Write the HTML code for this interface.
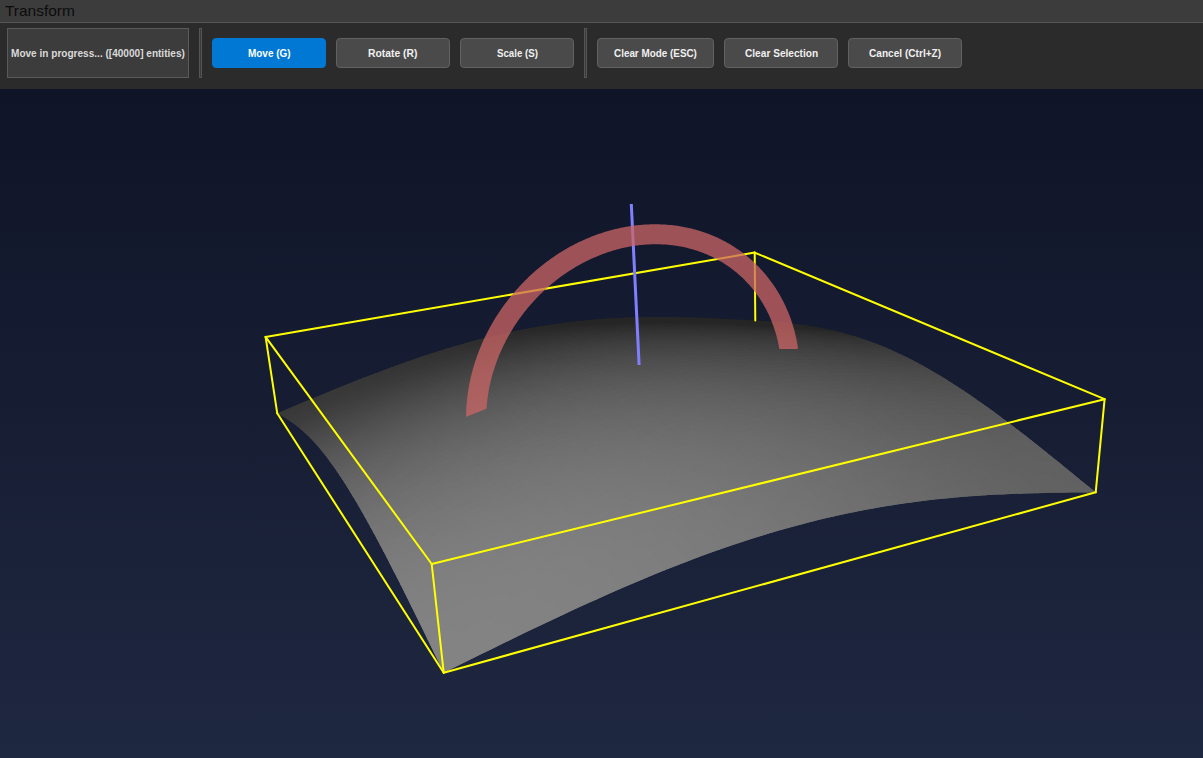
<!DOCTYPE html>
<html><head><meta charset="utf-8">
<style>
html,body{margin:0;padding:0;width:1203px;height:758px;overflow:hidden;background:#2b2b2b;font-family:"Liberation Sans",sans-serif;}
.a{position:absolute;}
#title{left:0;top:0;width:1203px;height:22px;background:#3c3c3c;}
#tline{left:0;top:22px;width:1203px;height:1px;background:#565656;}
#tb{left:0;top:23px;width:1203px;height:66px;background:#2b2b2b;}
.t{position:absolute;white-space:nowrap;transform-origin:0 0;}
.status{left:7px;top:28px;width:180px;height:48px;border:1px solid #5a5a5a;background:#3c3c3c;}
.sep{top:28px;width:1px;height:48px;border:1px solid #555;background:#3a3a3a;}
.btn{top:38px;height:28px;border:1px solid #626262;border-radius:4px;background:#4a4a4a;}
.on{background:#0078d4;border-color:#0078d4;}
.bt{font-weight:bold;font-size:11px;line-height:13px;color:#f0f0f0;}
svg{position:absolute;left:0;top:89px;}
</style></head><body>
<div id="title" class="a"></div><div id="tline" class="a"></div>
<span class="t" style="left:5px;top:2px;font-size:15px;line-height:17px;color:#0c0c0c;transform:scaleX(1.03)">Transform</span>
<div id="tb" class="a"></div>
<div class="a status"></div>
<div class="a sep" style="left:199px"></div>
<div class="a btn on" style="left:212px;width:112px"></div>
<div class="a btn" style="left:336px;width:112px"></div>
<div class="a btn" style="left:460px;width:112px"></div>
<div class="a sep" style="left:584px"></div>
<div class="a btn" style="left:597px;width:115px"></div>
<div class="a btn" style="left:724px;width:112px"></div>
<div class="a btn" style="left:848px;width:112px"></div>
<span class="t" style="left:10.7px;top:47.91px;font-weight:bold;font-size:10.5px;line-height:10.5px;color:#dadada;transform:scaleX(0.958)">Move in progress... ([40000] entities)</span>
<span class="t" style="left:247.9px;top:47.91px;font-weight:bold;font-size:10.5px;line-height:10.5px;color:#ffffff;transform:scaleX(0.948)">Move (G)</span>
<span class="t" style="left:368.1px;top:47.91px;font-weight:bold;font-size:10.5px;line-height:10.5px;color:#f0f0f0;transform:scaleX(0.985)">Rotate (R)</span>
<span class="t" style="left:496.5px;top:47.91px;font-weight:bold;font-size:10.5px;line-height:10.5px;color:#f0f0f0;transform:scaleX(0.924)">Scale (S)</span>
<span class="t" style="left:614.1px;top:47.91px;font-weight:bold;font-size:10.5px;line-height:10.5px;color:#f0f0f0;transform:scaleX(0.941)">Clear Mode (ESC)</span>
<span class="t" style="left:744.5px;top:47.91px;font-weight:bold;font-size:10.5px;line-height:10.5px;color:#f0f0f0;transform:scaleX(0.964)">Clear Selection</span>
<span class="t" style="left:868.9px;top:47.91px;font-weight:bold;font-size:10.5px;line-height:10.5px;color:#f0f0f0;transform:scaleX(0.962)">Cancel (Ctrl+Z)</span>
<svg width="1203" height="669" viewBox="0 89 1203 669">
<defs><linearGradient id="bg" x1="0" y1="0" x2="0" y2="1"><stop offset="0" stop-color="#0f1427"/><stop offset="1" stop-color="#1f2841"/></linearGradient>
<clipPath id="sc"><path d="M277.19 413.22 278.63 414.05 280.08 414.90 281.55 415.76 283.04 416.65 284.56 417.57 286.09 418.52 287.65 419.52 289.23 420.55 290.84 421.63 292.47 422.77 294.13 423.97 295.82 425.23 297.54 426.57 299.28 427.97 301.06 429.46 302.87 431.04 304.72 432.70 306.60 434.46 308.51 436.32 310.47 438.28 312.46 440.36 314.48 442.55 316.55 444.85 318.66 447.29 320.80 449.85 322.99 452.54 325.23 455.37 327.50 458.34 329.83 461.45 332.19 464.71 334.61 468.12 337.07 471.68 339.57 475.40 342.13 479.28 344.73 483.32 347.39 487.52 350.09 491.89 352.84 496.42 355.65 501.12 358.51 506.00 361.42 511.04 364.38 516.25 367.40 521.64 370.47 527.20 373.59 532.93 376.77 538.83 380.00 544.90 383.29 551.14 386.63 557.56 390.03 564.14 393.49 570.88 397.00 577.79 400.57 584.87 404.19 592.10 407.88 599.50 411.62 607.05 415.42 614.75 419.28 622.61 423.20 630.61 427.18 638.76 431.22 647.05 435.32 655.48 439.48 664.05 443.71 672.75 443.71 672.75 455.90 666.73 468.02 660.75 480.08 654.81 492.08 648.92 504.01 643.09 515.88 637.32 527.69 631.62 539.44 626.00 551.14 620.45 562.77 614.98 574.34 609.61 585.85 604.33 597.30 599.14 608.70 594.06 620.03 589.09 631.31 584.23 642.52 579.48 653.68 574.85 664.77 570.35 675.81 565.97 686.78 561.71 697.69 557.59 708.54 553.60 719.33 549.75 730.06 546.03 740.72 542.46 751.32 539.02 761.85 535.71 772.32 532.55 782.73 529.53 793.06 526.65 803.33 523.91 813.54 521.31 823.67 518.84 833.74 516.51 843.74 514.31 853.67 512.25 863.53 510.31 873.32 508.50 883.04 506.81 892.69 505.25 902.28 503.80 911.79 502.46 921.23 501.24 930.60 500.12 939.90 499.10 949.12 498.18 958.28 497.35 967.37 496.60 976.39 495.94 985.34 495.36 994.23 494.85 1003.04 494.40 1011.79 494.02 1020.46 493.69 1029.08 493.41 1037.62 493.18 1046.11 492.99 1054.53 492.83 1062.88 492.70 1071.17 492.59 1079.41 492.50 1087.58 492.41 1095.69 492.34 1095.69 492.34 1088.35 486.32 1081.10 480.38 1073.93 474.52 1066.84 468.75 1059.84 463.06 1052.92 457.46 1046.07 451.97 1039.30 446.56 1032.60 441.27 1025.98 436.07 1019.43 430.99 1012.95 426.02 1006.54 421.16 1000.20 416.41 993.92 411.79 987.71 407.28 981.57 402.90 975.49 398.64 969.48 394.51 963.53 390.51 957.64 386.63 951.81 382.88 946.04 379.26 940.33 375.77 934.69 372.40 929.10 369.17 923.57 366.07 918.09 363.09 912.68 360.24 907.32 357.52 902.01 354.92 896.77 352.45 891.57 350.10 886.43 347.86 881.35 345.75 876.32 343.75 871.34 341.86 866.42 340.08 861.54 338.41 856.72 336.85 851.95 335.38 847.24 334.02 842.57 332.74 837.95 331.56 833.38 330.47 828.86 329.45 824.39 328.52 819.97 327.66 815.59 326.87 811.26 326.15 806.98 325.49 802.74 324.89 798.55 324.34 794.41 323.84 790.30 323.39 786.25 322.98 782.23 322.60 778.26 322.26 774.33 321.94 770.44 321.65 766.59 321.37 762.78 321.11 759.01 320.87 755.28 320.62 755.28 320.62 748.75 320.24 742.19 319.87 735.60 319.50 728.97 319.13 722.30 318.79 715.61 318.46 708.88 318.15 702.12 317.87 695.32 317.62 688.49 317.40 681.63 317.22 674.73 317.09 667.80 317.00 660.84 316.95 653.85 316.96 646.82 317.03 639.76 317.16 632.67 317.35 625.54 317.60 618.39 317.93 611.20 318.32 603.99 318.79 596.74 319.34 589.46 319.97 582.15 320.68 574.81 321.48 567.45 322.36 560.05 323.33 552.63 324.38 545.18 325.53 537.70 326.77 530.20 328.10 522.67 329.52 515.11 331.04 507.52 332.65 499.92 334.35 492.28 336.15 484.62 338.04 476.94 340.02 469.23 342.09 461.50 344.25 453.75 346.50 445.97 348.83 438.17 351.26 430.34 353.76 422.50 356.34 414.63 359.01 406.73 361.75 398.82 364.56 390.88 367.44 382.92 370.39 374.93 373.41 366.93 376.48 358.89 379.61 350.84 382.80 342.76 386.03 334.66 389.31 326.53 392.63 318.37 396.00 310.19 399.39 301.98 402.81 293.75 406.26 285.48 409.73 277.19 413.22Z"/></clipPath></defs>
<rect x="0" y="89" width="1203" height="669" fill="url(#bg)"/>
<g clip-path="url(#sc)" stroke-width="1.6" stroke-linejoin="round">
<path fill="#252525" stroke="#252525" d="M545.2 325.5 548.0 325.8 555.5 324.7 552.6 324.4ZM552.6 324.4 555.5 324.7 563.0 323.6 560.1 323.3ZM560.1 323.3 563.0 323.6 570.4 322.6 567.4 322.4ZM567.4 322.4 570.4 322.6 577.8 321.7 574.8 321.5ZM574.8 321.5 577.8 321.7 585.2 320.9 582.2 320.7ZM582.2 320.7 585.2 320.9 592.5 320.2 589.5 320.0ZM589.5 320.0 592.5 320.2 599.8 319.6 596.7 319.3ZM596.7 319.3 599.8 319.6 607.1 319.0 604.0 318.8ZM604.0 318.8 607.1 319.0 614.3 318.6 611.2 318.3ZM611.2 318.3 614.3 318.6 621.6 318.2 618.4 317.9ZM618.4 317.9 621.6 318.2 628.8 317.8 625.5 317.6ZM625.5 317.6 628.8 317.8 635.9 317.6 632.7 317.3ZM632.7 317.3 635.9 317.6 643.0 317.4 639.8 317.2ZM639.8 317.2 643.0 317.4 650.1 317.3 646.8 317.0ZM646.8 317.0 650.1 317.3 657.2 317.2 653.8 317.0ZM653.8 317.0 657.2 317.2 664.2 317.2 660.8 317.0ZM660.8 317.0 664.2 317.2 671.2 317.2 667.8 317.0ZM667.8 317.0 671.2 317.2 678.1 317.3 674.7 317.1ZM674.7 317.1 678.1 317.3 685.1 317.5 681.6 317.2ZM681.6 317.2 685.1 317.5 692.0 317.6 688.5 317.4ZM688.5 317.4 692.0 317.6 698.8 317.9 695.3 317.6ZM695.3 317.6 698.8 317.9 705.6 318.1 702.1 317.9ZM702.1 317.9 705.6 318.1 712.4 318.4 708.9 318.2ZM708.9 318.2 712.4 318.4 719.2 318.7 715.6 318.5ZM715.6 318.5 719.2 318.7 725.9 319.0 722.3 318.8ZM722.3 318.8 725.9 319.0 732.6 319.4 729.0 319.1ZM729.0 319.1 732.6 319.4 739.3 319.7 735.6 319.5ZM735.6 319.5 739.3 319.7 745.9 320.1 742.2 319.9ZM742.2 319.9 745.9 320.1 752.5 320.5 748.8 320.2ZM748.8 320.2 752.5 320.5 759.0 320.9 755.3 320.6ZM555.5 324.7 558.4 325.0 565.9 323.9 563.0 323.6ZM563.0 323.6 565.9 323.9 573.4 322.9 570.4 322.6ZM570.4 322.6 573.4 322.9 580.8 322.0 577.8 321.7ZM577.8 321.7 580.8 322.0 588.2 321.2 585.2 320.9ZM585.2 320.9 588.2 321.2 595.6 320.5 592.5 320.2ZM592.5 320.2 595.6 320.5 602.9 319.8 599.8 319.6ZM599.8 319.6 602.9 319.8 610.2 319.3 607.1 319.0ZM607.1 319.0 610.2 319.3 617.5 318.8 614.3 318.6ZM614.3 318.6 617.5 318.8 624.8 318.4 621.6 318.2ZM621.6 318.2 624.8 318.4 632.0 318.1 628.8 317.8ZM628.8 317.8 632.0 318.1 639.2 317.8 635.9 317.6ZM635.9 317.6 639.2 317.8 646.3 317.6 643.0 317.4ZM643.0 317.4 646.3 317.6 653.5 317.5 650.1 317.3ZM650.1 317.3 653.5 317.5 660.5 317.4 657.2 317.2ZM657.2 317.2 660.5 317.4 667.6 317.4 664.2 317.2ZM664.2 317.2 667.6 317.4 674.6 317.5 671.2 317.2ZM671.2 317.2 674.6 317.5 681.6 317.6 678.1 317.3ZM678.1 317.3 681.6 317.6 688.6 317.7 685.1 317.5ZM685.1 317.5 688.6 317.7 695.5 317.9 692.0 317.6ZM692.0 317.6 695.5 317.9 702.4 318.1 698.8 317.9ZM698.8 317.9 702.4 318.1 709.2 318.3 705.6 318.1ZM705.6 318.1 709.2 318.3 716.0 318.6 712.4 318.4ZM712.4 318.4 716.0 318.6 722.8 318.9 719.2 318.7ZM719.2 318.7 722.8 318.9 729.6 319.3 725.9 319.0ZM725.9 319.0 729.6 319.3 736.3 319.6 732.6 319.4ZM732.6 319.4 736.3 319.6 742.9 320.0 739.3 319.7ZM739.3 319.7 742.9 320.0 749.6 320.4 745.9 320.1ZM745.9 320.1 749.6 320.4 756.2 320.7 752.5 320.5ZM752.5 320.5 756.2 320.7 762.8 321.1 759.0 320.9ZM558.4 325.0 561.4 325.3 568.9 324.2 565.9 323.9ZM565.9 323.9 568.9 324.2 576.4 323.2 573.4 322.9ZM573.4 322.9 576.4 323.2 583.9 322.3 580.8 322.0ZM580.8 322.0 583.9 322.3 591.3 321.5 588.2 321.2ZM588.2 321.2 591.3 321.5 598.7 320.8 595.6 320.5ZM595.6 320.5 598.7 320.8 606.1 320.1 602.9 319.8ZM602.9 319.8 606.1 320.1 613.4 319.6 610.2 319.3ZM610.2 319.3 613.4 319.6 620.7 319.1 617.5 318.8ZM617.5 318.8 620.7 319.1 628.0 318.7 624.8 318.4ZM624.8 318.4 628.0 318.7 635.3 318.3 632.0 318.1ZM632.0 318.1 635.3 318.3 642.5 318.1 639.2 317.8ZM639.2 317.8 642.5 318.1 649.7 317.9 646.3 317.6ZM646.3 317.6 649.7 317.9 656.8 317.8 653.5 317.5ZM653.5 317.5 656.8 317.8 663.9 317.7 660.5 317.4ZM660.5 317.4 663.9 317.7 671.0 317.7 667.6 317.4ZM667.6 317.4 671.0 317.7 678.1 317.7 674.6 317.5ZM674.6 317.5 678.1 317.7 685.1 317.8 681.6 317.6ZM681.6 317.6 685.1 317.8 692.1 317.9 688.6 317.7ZM688.6 317.7 692.1 317.9 699.0 318.1 695.5 317.9ZM695.5 317.9 699.0 318.1 705.9 318.3 702.4 318.1ZM702.4 318.1 705.9 318.3 712.8 318.6 709.2 318.3ZM709.2 318.3 712.8 318.6 719.6 318.9 716.0 318.6ZM716.0 318.6 719.6 318.9 726.5 319.2 722.8 318.9ZM722.8 318.9 726.5 319.2 733.2 319.5 729.6 319.3ZM729.6 319.3 733.2 319.5 740.0 319.9 736.3 319.6ZM736.3 319.6 740.0 319.9 746.7 320.2 742.9 320.0ZM742.9 320.0 746.7 320.2 753.3 320.6 749.6 320.4ZM749.6 320.4 753.3 320.6 760.0 321.0 756.2 320.7ZM756.2 320.7 760.0 321.0 766.6 321.4 762.8 321.1ZM561.4 325.3 564.3 325.6 571.9 324.5 568.9 324.2ZM568.9 324.2 571.9 324.5 579.4 323.5 576.4 323.2ZM576.4 323.2 579.4 323.5 586.9 322.6 583.9 322.3ZM583.9 322.3 586.9 322.6 594.4 321.8 591.3 321.5ZM591.3 321.5 594.4 321.8 601.8 321.0 598.7 320.8ZM598.7 320.8 601.8 321.0 609.3 320.4 606.1 320.1ZM606.1 320.1 609.3 320.4 616.6 319.8 613.4 319.6ZM613.4 319.6 616.6 319.8 624.0 319.4 620.7 319.1ZM620.7 319.1 624.0 319.4 631.3 318.9 628.0 318.7ZM628.0 318.7 631.3 318.9 638.6 318.6 635.3 318.3ZM635.3 318.3 638.6 318.6 645.8 318.3 642.5 318.1ZM642.5 318.1 645.8 318.3 653.0 318.2 649.7 317.9ZM649.7 317.9 653.0 318.2 660.2 318.0 656.8 317.8ZM656.8 317.8 660.2 318.0 667.4 317.9 663.9 317.7ZM663.9 317.7 667.4 317.9 674.5 317.9 671.0 317.7ZM671.0 317.7 674.5 317.9 681.6 318.0 678.1 317.7ZM678.1 317.7 681.6 318.0 688.6 318.1 685.1 317.8ZM685.1 317.8 688.6 318.1 695.6 318.2 692.1 317.9ZM692.1 317.9 695.6 318.2 702.6 318.4 699.0 318.1ZM699.0 318.1 702.6 318.4 709.5 318.6 705.9 318.3ZM705.9 318.3 709.5 318.6 716.4 318.9 712.8 318.6ZM712.8 318.6 716.4 318.9 723.3 319.1 719.6 318.9ZM719.6 318.9 723.3 319.1 730.2 319.5 726.5 319.2ZM726.5 319.2 730.2 319.5 737.0 319.8 733.2 319.5ZM733.2 319.5 737.0 319.8 743.7 320.1 740.0 319.9ZM740.0 319.9 743.7 320.1 750.4 320.5 746.7 320.2ZM746.7 320.2 750.4 320.5 757.1 320.9 753.3 320.6ZM753.3 320.6 757.1 320.9 763.8 321.3 760.0 321.0ZM760.0 321.0 763.8 321.3 770.4 321.6 766.6 321.4ZM571.9 324.5 574.9 324.8 582.5 323.8 579.4 323.5ZM579.4 323.5 582.5 323.8 590.0 322.9 586.9 322.6ZM586.9 322.6 590.0 322.9 597.6 322.1 594.4 321.8ZM594.4 321.8 597.6 322.1 605.0 321.4 601.8 321.0ZM601.8 321.0 605.0 321.4 612.5 320.7 609.3 320.4ZM609.3 320.4 612.5 320.7 619.9 320.1 616.6 319.8ZM616.6 319.8 619.9 320.1 627.3 319.6 624.0 319.4ZM624.0 319.4 627.3 319.6 634.6 319.2 631.3 318.9ZM631.3 318.9 634.6 319.2 641.9 318.9 638.6 318.6ZM638.6 318.6 641.9 318.9 649.2 318.6 645.8 318.3ZM645.8 318.3 649.2 318.6 656.5 318.4 653.0 318.2ZM653.0 318.2 656.5 318.4 663.7 318.3 660.2 318.0ZM660.2 318.0 663.7 318.3 670.9 318.2 667.4 317.9ZM667.4 317.9 670.9 318.2 678.0 318.2 674.5 317.9ZM674.5 317.9 678.0 318.2 685.1 318.3 681.6 318.0ZM681.6 318.0 685.1 318.3 692.2 318.4 688.6 318.1ZM688.6 318.1 692.2 318.4 699.2 318.5 695.6 318.2ZM695.6 318.2 699.2 318.5 706.2 318.7 702.6 318.4ZM702.6 318.4 706.2 318.7 713.2 318.9 709.5 318.6ZM709.5 318.6 713.2 318.9 720.1 319.1 716.4 318.9ZM716.4 318.9 720.1 319.1 727.0 319.4 723.3 319.1ZM723.3 319.1 727.0 319.4 733.9 319.7 730.2 319.5ZM730.2 319.5 733.9 319.7 740.7 320.1 737.0 319.8ZM737.0 319.8 740.7 320.1 747.5 320.4 743.7 320.1ZM743.7 320.1 747.5 320.4 754.3 320.8 750.4 320.5ZM750.4 320.5 754.3 320.8 761.0 321.2 757.1 320.9ZM757.1 320.9 761.0 321.2 767.7 321.6 763.8 321.3ZM763.8 321.3 767.7 321.6 774.3 321.9 770.4 321.6ZM574.9 324.8 578.0 325.2 585.6 324.2 582.5 323.8ZM582.5 323.8 585.6 324.2 593.2 323.3 590.0 322.9ZM590.0 322.9 593.2 323.3 600.7 322.4 597.6 322.1ZM597.6 322.1 600.7 322.4 608.3 321.7 605.0 321.4ZM605.0 321.4 608.3 321.7 615.7 321.0 612.5 320.7ZM612.5 320.7 615.7 321.0 623.2 320.5 619.9 320.1ZM619.9 320.1 623.2 320.5 630.6 320.0 627.3 319.6ZM627.3 319.6 630.6 320.0 638.0 319.6 634.6 319.2ZM634.6 319.2 638.0 319.6 645.3 319.2 641.9 318.9ZM641.9 318.9 645.3 319.2 652.6 318.9 649.2 318.6ZM649.2 318.6 652.6 318.9 659.9 318.7 656.5 318.4ZM656.5 318.4 659.9 318.7 667.2 318.6 663.7 318.3ZM663.7 318.3 667.2 318.6 674.4 318.5 670.9 318.2ZM670.9 318.2 674.4 318.5 681.5 318.5 678.0 318.2ZM678.0 318.2 681.5 318.5 688.7 318.6 685.1 318.3ZM685.1 318.3 688.7 318.6 695.8 318.7 692.2 318.4ZM692.2 318.4 695.8 318.7 702.9 318.8 699.2 318.5ZM699.2 318.5 702.9 318.8 709.9 319.0 706.2 318.7ZM706.2 318.7 709.9 319.0 716.9 319.2 713.2 318.9ZM713.2 318.9 716.9 319.2 723.8 319.5 720.1 319.1ZM720.1 319.1 723.8 319.5 730.8 319.7 727.0 319.4ZM727.0 319.4 730.8 319.7 737.7 320.0 733.9 319.7ZM733.9 319.7 737.7 320.0 744.5 320.4 740.7 320.1ZM740.7 320.1 744.5 320.4 751.3 320.7 747.5 320.4ZM747.5 320.4 751.3 320.7 758.1 321.1 754.3 320.8ZM754.3 320.8 758.1 321.1 764.9 321.5 761.0 321.2ZM761.0 321.2 764.9 321.5 771.6 321.9 767.7 321.6ZM767.7 321.6 771.6 321.9 778.3 322.3 774.3 321.9ZM585.6 324.2 588.8 324.5 596.4 323.6 593.2 323.3ZM593.2 323.3 596.4 323.6 604.0 322.8 600.7 322.4ZM600.7 322.4 604.0 322.8 611.5 322.1 608.3 321.7ZM608.3 321.7 611.5 322.1 619.0 321.4 615.7 321.0ZM615.7 321.0 619.0 321.4 626.5 320.8 623.2 320.5ZM623.2 320.5 626.5 320.8 634.0 320.3 630.6 320.0ZM630.6 320.0 634.0 320.3 641.4 319.9 638.0 319.6ZM638.0 319.6 641.4 319.9 648.8 319.6 645.3 319.2ZM645.3 319.2 648.8 319.6 656.1 319.3 652.6 318.9ZM652.6 318.9 656.1 319.3 663.4 319.1 659.9 318.7ZM659.9 318.7 663.4 319.1 670.7 319.0 667.2 318.6ZM667.2 318.6 670.7 319.0 677.9 318.9 674.4 318.5ZM674.4 318.5 677.9 318.9 685.1 318.9 681.5 318.5ZM681.5 318.5 685.1 318.9 692.3 318.9 688.7 318.6ZM688.7 318.6 692.3 318.9 699.4 319.0 695.8 318.7ZM695.8 318.7 699.4 319.0 706.5 319.1 702.9 318.8ZM702.9 318.8 706.5 319.1 713.6 319.3 709.9 319.0ZM709.9 319.0 713.6 319.3 720.6 319.5 716.9 319.2ZM716.9 319.2 720.6 319.5 727.6 319.8 723.8 319.5ZM723.8 319.5 727.6 319.8 734.6 320.1 730.8 319.7ZM730.8 319.7 734.6 320.1 741.5 320.4 737.7 320.0ZM737.7 320.0 741.5 320.4 748.4 320.7 744.5 320.4ZM744.5 320.4 748.4 320.7 755.2 321.1 751.3 320.7ZM751.3 320.7 755.2 321.1 762.0 321.4 758.1 321.1ZM758.1 321.1 762.0 321.4 768.8 321.8 764.9 321.5ZM764.9 321.5 768.8 321.8 775.5 322.2 771.6 321.9ZM771.6 321.9 775.5 322.2 782.2 322.6 778.3 322.3ZM596.4 323.6 599.6 324.0 607.2 323.2 604.0 322.8ZM604.0 322.8 607.2 323.2 614.8 322.4 611.5 322.1ZM611.5 322.1 614.8 322.4 622.4 321.8 619.0 321.4ZM619.0 321.4 622.4 321.8 629.9 321.2 626.5 320.8ZM626.5 320.8 629.9 321.2 637.4 320.7 634.0 320.3ZM634.0 320.3 637.4 320.7 644.8 320.3 641.4 319.9ZM641.4 319.9 644.8 320.3 652.2 319.9 648.8 319.6ZM648.8 319.6 652.2 319.9 659.6 319.7 656.1 319.3ZM656.1 319.3 659.6 319.7 666.9 319.5 663.4 319.1ZM663.4 319.1 666.9 319.5 674.2 319.3 670.7 319.0ZM670.7 319.0 674.2 319.3 681.5 319.2 677.9 318.9ZM677.9 318.9 681.5 319.2 688.8 319.2 685.1 318.9ZM685.1 318.9 688.8 319.2 696.0 319.3 692.3 318.9ZM692.3 318.9 696.0 319.3 703.1 319.4 699.4 319.0ZM699.4 319.0 703.1 319.4 710.2 319.5 706.5 319.1ZM706.5 319.1 710.2 319.5 717.3 319.7 713.6 319.3ZM713.6 319.3 717.3 319.7 724.4 319.9 720.6 319.5ZM720.6 319.5 724.4 319.9 731.4 320.2 727.6 319.8ZM727.6 319.8 731.4 320.2 738.4 320.4 734.6 320.1ZM734.6 320.1 738.4 320.4 745.3 320.8 741.5 320.4ZM741.5 320.4 745.3 320.8 752.2 321.1 748.4 320.7ZM748.4 320.7 752.2 321.1 759.1 321.4 755.2 321.1ZM755.2 321.1 759.1 321.4 765.9 321.8 762.0 321.4ZM762.0 321.4 765.9 321.8 772.7 322.2 768.8 321.8ZM768.8 321.8 772.7 322.2 779.5 322.6 775.5 322.2ZM775.5 322.2 779.5 322.6 786.2 323.0 782.2 322.6ZM599.6 324.0 602.9 324.5 610.5 323.6 607.2 323.2ZM607.2 323.2 610.5 323.6 618.2 322.9 614.8 322.4ZM614.8 322.4 618.2 322.9 625.7 322.2 622.4 321.8ZM622.4 321.8 625.7 322.2 633.3 321.6 629.9 321.2ZM629.9 321.2 633.3 321.6 640.8 321.1 637.4 320.7ZM637.4 320.7 640.8 321.1 648.3 320.7 644.8 320.3ZM644.8 320.3 648.3 320.7 655.7 320.4 652.2 319.9ZM652.2 319.9 655.7 320.4 663.1 320.1 659.6 319.7ZM659.6 319.7 663.1 320.1 670.5 319.9 666.9 319.5ZM666.9 319.5 670.5 319.9 677.8 319.7 674.2 319.3ZM674.2 319.3 677.8 319.7 685.2 319.7 681.5 319.2ZM681.5 319.2 685.2 319.7 692.4 319.6 688.8 319.2ZM688.8 319.2 692.4 319.6 699.6 319.7 696.0 319.3ZM696.0 319.3 699.6 319.7 706.8 319.8 703.1 319.4ZM703.1 319.4 706.8 319.8 714.0 319.9 710.2 319.5ZM710.2 319.5 714.0 319.9 721.1 320.1 717.3 319.7ZM717.3 319.7 721.1 320.1 728.2 320.3 724.4 319.9ZM724.4 319.9 728.2 320.3 735.2 320.6 731.4 320.2ZM731.4 320.2 735.2 320.6 742.3 320.8 738.4 320.4ZM738.4 320.4 742.3 320.8 749.2 321.2 745.3 320.8ZM745.3 320.8 749.2 321.2 756.2 321.5 752.2 321.1ZM752.2 321.1 756.2 321.5 763.1 321.9 759.1 321.4ZM759.1 321.4 763.1 321.9 769.9 322.2 765.9 321.8ZM765.9 321.8 769.9 322.2 776.8 322.6 772.7 322.2ZM772.7 322.2 776.8 322.6 783.5 323.0 779.5 322.6ZM779.5 322.6 783.5 323.0 790.3 323.4 786.2 323.0ZM610.5 323.6 613.9 324.1 621.5 323.4 618.2 322.9ZM618.2 322.9 621.5 323.4 629.2 322.7 625.7 322.2ZM625.7 322.2 629.2 322.7 636.7 322.1 633.3 321.6ZM633.3 321.6 636.7 322.1 644.3 321.6 640.8 321.1ZM640.8 321.1 644.3 321.6 651.8 321.2 648.3 320.7ZM648.3 320.7 651.8 321.2 659.3 320.8 655.7 320.4ZM655.7 320.4 659.3 320.8 666.7 320.5 663.1 320.1ZM663.1 320.1 666.7 320.5 674.1 320.3 670.5 319.9ZM670.5 319.9 674.1 320.3 681.5 320.2 677.8 319.7ZM677.8 319.7 681.5 320.2 688.8 320.1 685.2 319.7ZM685.2 319.7 688.8 320.1 696.1 320.1 692.4 319.6ZM692.4 319.6 696.1 320.1 703.4 320.1 699.6 319.7ZM699.6 319.7 703.4 320.1 710.6 320.2 706.8 319.8ZM706.8 319.8 710.6 320.2 717.8 320.4 714.0 319.9ZM714.0 319.9 717.8 320.4 724.9 320.5 721.1 320.1ZM721.1 320.1 724.9 320.5 732.1 320.8 728.2 320.3ZM728.2 320.3 732.1 320.8 739.1 321.0 735.2 320.6ZM735.2 320.6 739.1 321.0 746.2 321.3 742.3 320.8ZM742.3 320.8 746.2 321.3 753.2 321.6 749.2 321.2ZM749.2 321.2 753.2 321.6 760.1 322.0 756.2 321.5ZM756.2 321.5 760.1 322.0 767.1 322.3 763.1 321.9ZM763.1 321.9 767.1 322.3 774.0 322.7 769.9 322.2ZM769.9 322.2 774.0 322.7 780.8 323.1 776.8 322.6ZM776.8 322.6 780.8 323.1 787.6 323.5 783.5 323.0ZM783.5 323.0 787.6 323.5 794.4 323.8 790.3 323.4ZM629.2 322.7 632.6 323.2 640.2 322.6 636.7 322.1ZM636.7 322.1 640.2 322.6 647.8 322.1 644.3 321.6ZM644.3 321.6 647.8 322.1 655.4 321.7 651.8 321.2ZM651.8 321.2 655.4 321.7 662.9 321.3 659.3 320.8ZM659.3 320.8 662.9 321.3 670.3 321.0 666.7 320.5ZM666.7 320.5 670.3 321.0 677.8 320.8 674.1 320.3ZM674.1 320.3 677.8 320.8 685.2 320.7 681.5 320.2ZM681.5 320.2 685.2 320.7 692.6 320.6 688.8 320.1ZM688.8 320.1 692.6 320.6 699.9 320.6 696.1 320.1ZM696.1 320.1 699.9 320.6 707.2 320.6 703.4 320.1ZM703.4 320.1 707.2 320.6 714.4 320.7 710.6 320.2ZM710.6 320.2 714.4 320.7 721.6 320.8 717.8 320.4ZM717.8 320.4 721.6 320.8 728.8 321.0 724.9 320.5ZM724.9 320.5 728.8 321.0 736.0 321.2 732.1 320.8ZM732.1 320.8 736.0 321.2 743.1 321.5 739.1 321.0ZM739.1 321.0 743.1 321.5 750.1 321.8 746.2 321.3ZM746.2 321.3 750.1 321.8 757.2 322.1 753.2 321.6ZM753.2 321.6 757.2 322.1 764.2 322.4 760.1 322.0ZM760.1 322.0 764.2 322.4 771.1 322.8 767.1 322.3ZM767.1 322.3 771.1 322.8 778.0 323.2 774.0 322.7ZM774.0 322.7 778.0 323.2 784.9 323.6 780.8 323.1ZM780.8 323.1 784.9 323.6 791.7 324.0 787.6 323.5ZM787.6 323.5 791.7 324.0 798.6 324.3 794.4 323.8ZM640.2 322.6 643.8 323.2 651.4 322.7 647.8 322.1ZM647.8 322.1 651.4 322.7 659.0 322.2 655.4 321.7ZM655.4 321.7 659.0 322.2 666.5 321.9 662.9 321.3ZM662.9 321.3 666.5 321.9 674.0 321.6 670.3 321.0ZM670.3 321.0 674.0 321.6 681.5 321.4 677.8 320.8ZM677.8 320.8 681.5 321.4 688.9 321.2 685.2 320.7ZM685.2 320.7 688.9 321.2 696.3 321.2 692.6 320.6ZM692.6 320.6 696.3 321.2 703.7 321.1 699.9 320.6ZM699.9 320.6 703.7 321.1 711.0 321.2 707.2 320.6ZM707.2 320.6 711.0 321.2 718.3 321.3 714.4 320.7ZM714.4 320.7 718.3 321.3 725.5 321.4 721.6 320.8ZM721.6 320.8 725.5 321.4 732.7 321.6 728.8 321.0ZM728.8 321.0 732.7 321.6 739.9 321.8 736.0 321.2ZM736.0 321.2 739.9 321.8 747.0 322.0 743.1 321.5ZM743.1 321.5 747.0 322.0 754.1 322.3 750.1 321.8ZM750.1 321.8 754.1 322.3 761.2 322.6 757.2 322.1ZM757.2 322.1 761.2 322.6 768.2 323.0 764.2 322.4ZM764.2 322.4 768.2 323.0 775.2 323.3 771.1 322.8ZM771.1 322.8 775.2 323.3 782.1 323.7 778.0 323.2ZM778.0 323.2 782.1 323.7 789.0 324.1 784.9 323.6ZM784.9 323.6 789.0 324.1 795.9 324.5 791.7 324.0ZM791.7 324.0 795.9 324.5 802.7 324.9 798.6 324.3ZM651.4 322.7 655.0 323.3 662.6 322.9 659.0 322.2ZM659.0 322.2 662.6 322.9 670.2 322.5 666.5 321.9ZM666.5 321.9 670.2 322.5 677.7 322.2 674.0 321.6ZM674.0 321.6 677.7 322.2 685.2 322.0 681.5 321.4ZM681.5 321.4 685.2 322.0 692.7 321.8 688.9 321.2ZM688.9 321.2 692.7 321.8 700.1 321.8 696.3 321.2ZM696.3 321.2 700.1 321.8 707.5 321.7 703.7 321.1ZM703.7 321.1 707.5 321.7 714.9 321.8 711.0 321.2ZM711.0 321.2 714.9 321.8 722.2 321.9 718.3 321.3ZM718.3 321.3 722.2 321.9 729.5 322.0 725.5 321.4ZM725.5 321.4 729.5 322.0 736.7 322.2 732.7 321.6ZM732.7 321.6 736.7 322.2 743.9 322.4 739.9 321.8ZM739.9 321.8 743.9 322.4 751.1 322.6 747.0 322.0ZM747.0 322.0 751.1 322.6 758.2 322.9 754.1 322.3ZM754.1 322.3 758.2 322.9 765.3 323.2 761.2 322.6ZM761.2 322.6 765.3 323.2 772.3 323.6 768.2 323.0ZM768.2 323.0 772.3 323.6 779.3 323.9 775.2 323.3ZM775.2 323.3 779.3 323.9 786.3 324.3 782.1 323.7ZM782.1 323.7 786.3 324.3 793.2 324.7 789.0 324.1ZM789.0 324.1 793.2 324.7 800.1 325.1 795.9 324.5ZM795.9 324.5 800.1 325.1 807.0 325.5 802.7 324.9ZM670.2 322.5 673.9 323.2 681.5 322.9 677.7 322.2ZM677.7 322.2 681.5 322.9 689.0 322.7 685.2 322.0ZM685.2 322.0 689.0 322.7 696.5 322.5 692.7 321.8ZM692.7 321.8 696.5 322.5 704.0 322.4 700.1 321.8ZM700.1 321.8 704.0 322.4 711.4 322.4 707.5 321.7ZM707.5 321.7 711.4 322.4 718.8 322.4 714.9 321.8ZM714.9 321.8 718.8 322.4 726.1 322.5 722.2 321.9ZM722.2 321.9 726.1 322.5 733.4 322.6 729.5 322.0ZM729.5 322.0 733.4 322.6 740.7 322.8 736.7 322.2ZM736.7 322.2 740.7 322.8 747.9 323.0 743.9 322.4ZM743.9 322.4 747.9 323.0 755.1 323.3 751.1 322.6ZM751.1 322.6 755.1 323.3 762.3 323.6 758.2 322.9ZM758.2 322.9 762.3 323.6 769.4 323.9 765.3 323.2ZM765.3 323.2 769.4 323.9 776.5 324.2 772.3 323.6ZM772.3 323.6 776.5 324.2 783.5 324.6 779.3 323.9ZM779.3 323.9 783.5 324.6 790.5 325.0 786.3 324.3ZM786.3 324.3 790.5 325.0 797.5 325.4 793.2 324.7ZM793.2 324.7 797.5 325.4 804.4 325.8 800.1 325.1ZM800.1 325.1 804.4 325.8 811.3 326.2 807.0 325.5ZM689.0 322.7 692.9 323.4 700.4 323.2 696.5 322.5ZM696.5 322.5 700.4 323.2 707.9 323.2 704.0 322.4ZM704.0 322.4 707.9 323.2 715.3 323.1 711.4 322.4ZM711.4 322.4 715.3 323.1 722.7 323.2 718.8 322.4ZM718.8 322.4 722.7 323.2 730.1 323.2 726.1 322.5ZM726.1 322.5 730.1 323.2 737.5 323.4 733.4 322.6ZM733.4 322.6 737.5 323.4 744.8 323.5 740.7 322.8ZM740.7 322.8 744.8 323.5 752.0 323.8 747.9 323.0ZM747.9 323.0 752.0 323.8 759.2 324.0 755.1 323.3ZM755.1 323.3 759.2 324.0 766.4 324.3 762.3 323.6ZM762.3 323.6 766.4 324.3 773.6 324.6 769.4 323.9ZM769.4 323.9 773.6 324.6 780.7 325.0 776.5 324.2ZM776.5 324.2 780.7 325.0 787.7 325.3 783.5 324.6ZM783.5 324.6 787.7 325.3 794.7 325.7 790.5 325.0ZM790.5 325.0 794.7 325.7 801.7 326.1 797.5 325.4ZM797.5 325.4 801.7 326.1 808.7 326.5 804.4 325.8ZM804.4 325.8 808.7 326.5 815.6 326.9 811.3 326.2ZM707.9 323.2 711.8 324.0 719.3 323.9 715.3 323.1ZM715.3 323.1 719.3 323.9 726.8 324.0 722.7 323.2ZM722.7 323.2 726.8 324.0 734.2 324.0 730.1 323.2ZM730.1 323.2 734.2 324.0 741.5 324.2 737.5 323.4ZM737.5 323.4 741.5 324.2 748.9 324.3 744.8 323.5ZM744.8 323.5 748.9 324.3 756.1 324.6 752.0 323.8ZM752.0 323.8 756.1 324.6 763.4 324.8 759.2 324.0ZM759.2 324.0 763.4 324.8 770.6 325.1 766.4 324.3ZM766.4 324.3 770.6 325.1 777.8 325.4 773.6 324.6ZM773.6 324.6 777.8 325.4 784.9 325.8 780.7 325.0ZM780.7 325.0 784.9 325.8 792.0 326.1 787.7 325.3ZM787.7 325.3 792.0 326.1 799.0 326.5 794.7 325.7ZM794.7 325.7 799.0 326.5 806.1 326.9 801.7 326.1ZM801.7 326.1 806.1 326.9 813.0 327.3 808.7 326.5ZM808.7 326.5 813.0 327.3 820.0 327.7 815.6 326.9ZM726.8 324.0 730.8 324.8 738.2 324.9 734.2 324.0ZM734.2 324.0 738.2 324.9 745.6 325.0 741.5 324.2ZM741.5 324.2 745.6 325.0 753.0 325.2 748.9 324.3ZM748.9 324.3 753.0 325.2 760.3 325.4 756.1 324.6ZM756.1 324.6 760.3 325.4 767.6 325.7 763.4 324.8ZM763.4 324.8 767.6 325.7 774.8 326.0 770.6 325.1ZM770.6 325.1 774.8 326.0 782.0 326.3 777.8 325.4ZM777.8 325.4 782.0 326.3 789.2 326.6 784.9 325.8ZM784.9 325.8 789.2 326.6 796.3 327.0 792.0 326.1ZM792.0 326.1 796.3 327.0 803.4 327.3 799.0 326.5ZM799.0 326.5 803.4 327.3 810.4 327.7 806.1 326.9ZM806.1 326.9 810.4 327.7 817.4 328.1 813.0 327.3ZM813.0 327.3 817.4 328.1 824.4 328.5 820.0 327.7ZM760.3 325.4 764.5 326.4 771.8 326.6 767.6 325.7ZM767.6 325.7 771.8 326.6 779.1 326.9 774.8 326.0ZM774.8 326.0 779.1 326.9 786.3 327.2 782.0 326.3ZM782.0 326.3 786.3 327.2 793.5 327.6 789.2 326.6ZM789.2 326.6 793.5 327.6 800.7 327.9 796.3 327.0ZM796.3 327.0 800.7 327.9 807.8 328.3 803.4 327.3ZM803.4 327.3 807.8 328.3 814.8 328.7 810.4 327.7ZM810.4 327.7 814.8 328.7 821.9 329.1 817.4 328.1ZM817.4 328.1 821.9 329.1 828.9 329.5 824.4 328.5ZM800.7 327.9 805.1 328.9 812.2 329.3 807.8 328.3ZM807.8 328.3 812.2 329.3 819.3 329.7 814.8 328.7ZM814.8 328.7 819.3 329.7 826.4 330.1 821.9 329.1ZM821.9 329.1 826.4 330.1 833.4 330.5 828.9 329.5Z"/>
<path fill="#262626" stroke="#262626" d="M537.7 326.8 540.5 327.1 548.0 325.8 545.2 325.5ZM540.5 327.1 543.3 327.4 550.9 326.1 548.0 325.8ZM548.0 325.8 550.9 326.1 558.4 325.0 555.5 324.7ZM550.9 326.1 553.8 326.4 561.4 325.3 558.4 325.0ZM553.8 326.4 556.7 326.7 564.3 325.6 561.4 325.3ZM556.7 326.7 559.7 327.1 567.3 325.9 564.3 325.6ZM564.3 325.6 567.3 325.9 574.9 324.8 571.9 324.5ZM567.3 325.9 570.4 326.3 578.0 325.2 574.9 324.8ZM578.0 325.2 581.1 325.6 588.8 324.5 585.6 324.2ZM581.1 325.6 584.3 326.0 592.0 325.0 588.8 324.5ZM588.8 324.5 592.0 325.0 599.6 324.0 596.4 323.6ZM592.0 325.0 595.2 325.4 602.9 324.5 599.6 324.0ZM602.9 324.5 606.2 325.0 613.9 324.1 610.5 323.6ZM613.9 324.1 617.3 324.7 625.0 323.9 621.5 323.4ZM621.5 323.4 625.0 323.9 632.6 323.2 629.2 322.7ZM632.6 323.2 636.1 323.8 643.8 323.2 640.2 322.6ZM643.8 323.2 647.3 323.8 655.0 323.3 651.4 322.7ZM662.6 322.9 666.3 323.5 673.9 323.2 670.2 322.5ZM673.9 323.2 677.7 323.9 685.3 323.6 681.5 322.9ZM681.5 322.9 685.3 323.6 692.9 323.4 689.0 322.7ZM692.9 323.4 696.7 324.2 704.3 324.0 700.4 323.2ZM700.4 323.2 704.3 324.0 711.8 324.0 707.9 323.2ZM711.8 324.0 715.8 324.8 723.3 324.8 719.3 323.9ZM719.3 323.9 723.3 324.8 730.8 324.8 726.8 324.0ZM738.2 324.9 742.4 325.8 749.8 326.0 745.6 325.0ZM745.6 325.0 749.8 326.0 757.2 326.1 753.0 325.2ZM753.0 325.2 757.2 326.1 764.5 326.4 760.3 325.4ZM771.8 326.6 776.1 327.6 783.4 327.9 779.1 326.9ZM779.1 326.9 783.4 327.9 790.7 328.2 786.3 327.2ZM786.3 327.2 790.7 328.2 797.9 328.6 793.5 327.6ZM793.5 327.6 797.9 328.6 805.1 328.9 800.7 327.9Z"/>
<path fill="#272727" stroke="#272727" d="M530.2 328.1 533.0 328.4 540.5 327.1 537.7 326.8ZM533.0 328.4 535.8 328.7 543.3 327.4 540.5 327.1ZM535.8 328.7 538.6 329.0 546.2 327.7 543.3 327.4ZM543.3 327.4 546.2 327.7 553.8 326.4 550.9 326.1ZM546.2 327.7 549.1 328.0 556.7 326.7 553.8 326.4ZM549.1 328.0 552.1 328.4 559.7 327.1 556.7 326.7ZM559.7 327.1 562.7 327.5 570.4 326.3 567.3 325.9ZM562.7 327.5 565.8 327.9 573.5 326.7 570.4 326.3ZM570.4 326.3 573.5 326.7 581.1 325.6 578.0 325.2ZM573.5 326.7 576.6 327.1 584.3 326.0 581.1 325.6ZM584.3 326.0 587.5 326.4 595.2 325.4 592.0 325.0ZM595.2 325.4 598.5 325.9 606.2 325.0 602.9 324.5ZM606.2 325.0 609.5 325.5 617.3 324.7 613.9 324.1ZM617.3 324.7 620.7 325.2 628.4 324.5 625.0 323.9ZM625.0 323.9 628.4 324.5 636.1 323.8 632.6 323.2ZM636.1 323.8 639.6 324.4 647.3 323.8 643.8 323.2ZM647.3 323.8 651.0 324.5 658.6 324.0 655.0 323.3ZM655.0 323.3 658.6 324.0 666.3 323.5 662.6 322.9ZM666.3 323.5 670.0 324.3 677.7 323.9 673.9 323.2ZM685.3 323.6 689.1 324.4 696.7 324.2 692.9 323.4ZM704.3 324.0 708.3 324.9 715.8 324.8 711.8 324.0ZM723.3 324.8 727.4 325.7 734.9 325.8 730.8 324.8ZM730.8 324.8 734.9 325.8 742.4 325.8 738.2 324.9ZM749.8 326.0 754.0 327.0 761.4 327.2 757.2 326.1ZM757.2 326.1 761.4 327.2 768.8 327.4 764.5 326.4ZM764.5 326.4 768.8 327.4 776.1 327.6 771.8 326.6ZM783.4 327.9 787.8 329.0 795.1 329.3 790.7 328.2ZM790.7 328.2 795.1 329.3 802.3 329.7 797.9 328.6ZM797.9 328.6 802.3 329.7 809.5 330.0 805.1 328.9ZM805.1 328.9 809.5 330.0 816.7 330.4 812.2 329.3ZM812.2 329.3 816.7 330.4 823.8 330.8 819.3 329.7ZM819.3 329.7 823.8 330.8 830.9 331.2 826.4 330.1ZM826.4 330.1 830.9 331.2 837.9 331.6 833.4 330.5Z"/>
<path fill="#282828" stroke="#282828" d="M522.7 329.5 525.4 329.8 533.0 328.4 530.2 328.1ZM525.4 329.8 528.2 330.2 535.8 328.7 533.0 328.4ZM528.2 330.2 531.0 330.5 538.6 329.0 535.8 328.7ZM538.6 329.0 541.5 329.4 549.1 328.0 546.2 327.7ZM541.5 329.4 544.4 329.7 552.1 328.4 549.1 328.0ZM552.1 328.4 555.0 328.7 562.7 327.5 559.7 327.1ZM555.0 328.7 558.0 329.2 565.8 327.9 562.7 327.5ZM565.8 327.9 568.9 328.3 576.6 327.1 573.5 326.7ZM576.6 327.1 579.8 327.6 587.5 326.4 584.3 326.0ZM587.5 326.4 590.7 326.9 598.5 325.9 595.2 325.4ZM598.5 325.9 601.8 326.5 609.5 325.5 606.2 325.0ZM609.5 325.5 612.9 326.1 620.7 325.2 617.3 324.7ZM620.7 325.2 624.2 325.9 631.9 325.1 628.4 324.5ZM628.4 324.5 631.9 325.1 639.6 324.4 636.1 323.8ZM639.6 324.4 643.2 325.1 651.0 324.5 647.3 323.8ZM651.0 324.5 654.6 325.3 662.3 324.7 658.6 324.0ZM658.6 324.0 662.3 324.7 670.0 324.3 666.3 323.5ZM670.0 324.3 673.8 325.1 681.5 324.7 677.7 323.9ZM677.7 323.9 681.5 324.7 689.1 324.4 685.3 323.6ZM689.1 324.4 693.0 325.3 700.7 325.1 696.7 324.2ZM696.7 324.2 700.7 325.1 708.3 324.9 704.3 324.0ZM708.3 324.9 712.3 325.9 719.8 325.8 715.8 324.8ZM715.8 324.8 719.8 325.8 727.4 325.7 723.3 324.8ZM734.9 325.8 739.1 326.8 746.6 326.9 742.4 325.8ZM742.4 325.8 746.6 326.9 754.0 327.0 749.8 326.0ZM761.4 327.2 765.7 328.3 773.1 328.5 768.8 327.4ZM768.8 327.4 773.1 328.5 780.5 328.7 776.1 327.6ZM776.1 327.6 780.5 328.7 787.8 329.0 783.4 327.9ZM809.5 330.0 814.1 331.2 821.2 331.6 816.7 330.4ZM816.7 330.4 821.2 331.6 828.4 332.0 823.8 330.8ZM823.8 330.8 828.4 332.0 835.5 332.4 830.9 331.2ZM830.9 331.2 835.5 332.4 842.6 332.7 837.9 331.6Z"/>
<path fill="#292929" stroke="#292929" d="M515.1 331.0 517.8 331.4 525.4 329.8 522.7 329.5ZM517.8 331.4 520.5 331.7 528.2 330.2 525.4 329.8ZM520.5 331.7 523.3 332.0 531.0 330.5 528.2 330.2ZM523.3 332.0 526.1 332.4 533.8 330.8 531.0 330.5ZM531.0 330.5 533.8 330.8 541.5 329.4 538.6 329.0ZM533.8 330.8 536.6 331.2 544.4 329.7 541.5 329.4ZM536.6 331.2 539.5 331.6 547.3 330.1 544.4 329.7ZM544.4 329.7 547.3 330.1 555.0 328.7 552.1 328.4ZM547.3 330.1 550.3 330.5 558.0 329.2 555.0 328.7ZM558.0 329.2 561.1 329.6 568.9 328.3 565.8 327.9ZM568.9 328.3 572.0 328.8 579.8 327.6 576.6 327.1ZM579.8 327.6 582.9 328.1 590.7 326.9 587.5 326.4ZM590.7 326.9 594.0 327.5 601.8 326.5 598.5 325.9ZM601.8 326.5 605.1 327.1 612.9 326.1 609.5 325.5ZM612.9 326.1 616.4 326.8 624.2 325.9 620.7 325.2ZM631.9 325.1 635.5 325.8 643.2 325.1 639.6 324.4ZM643.2 325.1 646.9 325.9 654.6 325.3 651.0 324.5ZM662.3 324.7 666.1 325.6 673.8 325.1 670.0 324.3ZM681.5 324.7 685.3 325.6 693.0 325.3 689.1 324.4ZM700.7 325.1 704.6 326.0 712.3 325.9 708.3 324.9ZM719.8 325.8 723.9 326.8 731.5 326.8 727.4 325.7ZM727.4 325.7 731.5 326.8 739.1 326.8 734.9 325.8ZM746.6 326.9 750.8 328.0 758.3 328.1 754.0 327.0ZM754.0 327.0 758.3 328.1 765.7 328.3 761.4 327.2ZM780.5 328.7 784.9 329.9 792.2 330.2 787.8 329.0ZM787.8 329.0 792.2 330.2 799.6 330.5 795.1 329.3ZM795.1 329.3 799.6 330.5 806.8 330.9 802.3 329.7ZM802.3 329.7 806.8 330.9 814.1 331.2 809.5 330.0Z"/>
<path fill="#2a2a2a" stroke="#2a2a2a" d="M507.5 332.6 510.2 333.0 517.8 331.4 515.1 331.0ZM510.2 333.0 512.9 333.3 520.5 331.7 517.8 331.4ZM512.9 333.3 515.6 333.7 523.3 332.0 520.5 331.7ZM515.6 333.7 518.3 334.0 526.1 332.4 523.3 332.0ZM526.1 332.4 528.9 332.8 536.6 331.2 533.8 330.8ZM528.9 332.8 531.8 333.2 539.5 331.6 536.6 331.2ZM539.5 331.6 542.5 332.0 550.3 330.5 547.3 330.1ZM550.3 330.5 553.3 331.0 561.1 329.6 558.0 329.2ZM553.3 331.0 556.3 331.5 564.2 330.1 561.1 329.6ZM561.1 329.6 564.2 330.1 572.0 328.8 568.9 328.3ZM564.2 330.1 567.3 330.6 575.1 329.3 572.0 328.8ZM572.0 328.8 575.1 329.3 582.9 328.1 579.8 327.6ZM575.1 329.3 578.3 329.9 586.2 328.6 582.9 328.1ZM582.9 328.1 586.2 328.6 594.0 327.5 590.7 326.9ZM594.0 327.5 597.3 328.1 605.1 327.1 601.8 326.5ZM605.1 327.1 608.5 327.7 616.4 326.8 612.9 326.1ZM616.4 326.8 619.8 327.5 627.7 326.6 624.2 325.9ZM624.2 325.9 627.7 326.6 635.5 325.8 631.9 325.1ZM635.5 325.8 639.1 326.6 646.9 325.9 643.2 325.1ZM646.9 325.9 650.5 326.7 658.3 326.1 654.6 325.3ZM654.6 325.3 658.3 326.1 666.1 325.6 662.3 324.7ZM666.1 325.6 669.9 326.5 677.6 326.0 673.8 325.1ZM673.8 325.1 677.6 326.0 685.3 325.6 681.5 324.7ZM685.3 325.6 689.2 326.6 697.0 326.3 693.0 325.3ZM693.0 325.3 697.0 326.3 704.6 326.0 700.7 325.1ZM704.6 326.0 708.6 327.1 716.3 326.9 712.3 325.9ZM712.3 325.9 716.3 326.9 723.9 326.8 719.8 325.8ZM731.5 326.8 735.7 327.9 743.3 327.9 739.1 326.8ZM739.1 326.8 743.3 327.9 750.8 328.0 746.6 326.9ZM758.3 328.1 762.6 329.3 770.1 329.5 765.7 328.3ZM765.7 328.3 770.1 329.5 777.5 329.7 773.1 328.5ZM773.1 328.5 777.5 329.7 784.9 329.9 780.5 328.7ZM799.6 330.5 804.1 331.8 811.4 332.1 806.8 330.9ZM806.8 330.9 811.4 332.1 818.6 332.5 814.1 331.2ZM814.1 331.2 818.6 332.5 825.8 332.9 821.2 331.6ZM821.2 331.6 825.8 332.9 833.0 333.2 828.4 332.0ZM828.4 332.0 833.0 333.2 840.1 333.6 835.5 332.4ZM835.5 332.4 840.1 333.6 847.2 334.0 842.6 332.7Z"/>
<path fill="#2b2b2b" stroke="#2b2b2b" d="M492.3 336.1 494.9 336.5 502.5 334.7 499.9 334.4ZM499.9 334.4 502.5 334.7 510.2 333.0 507.5 332.6ZM494.9 336.5 497.5 336.9 505.2 335.0 502.5 334.7ZM502.5 334.7 505.2 335.0 512.9 333.3 510.2 333.0ZM505.2 335.0 507.9 335.4 515.6 333.7 512.9 333.3ZM507.9 335.4 510.6 335.8 518.3 334.0 515.6 333.7ZM510.6 335.8 513.3 336.2 521.1 334.4 518.3 334.0ZM518.3 334.0 521.1 334.4 528.9 332.8 526.1 332.4ZM521.1 334.4 524.0 334.9 531.8 333.2 528.9 332.8ZM531.8 333.2 534.7 333.6 542.5 332.0 539.5 331.6ZM534.7 333.6 537.6 334.1 545.4 332.5 542.5 332.0ZM542.5 332.0 545.4 332.5 553.3 331.0 550.3 330.5ZM545.4 332.5 548.5 333.0 556.3 331.5 553.3 331.0ZM556.3 331.5 559.4 332.0 567.3 330.6 564.2 330.1ZM567.3 330.6 570.4 331.2 578.3 329.9 575.1 329.3ZM578.3 329.9 581.6 330.5 589.5 329.3 586.2 328.6ZM586.2 328.6 589.5 329.3 597.3 328.1 594.0 327.5ZM597.3 328.1 600.7 328.8 608.5 327.7 605.1 327.1ZM608.5 327.7 612.0 328.4 619.8 327.5 616.4 326.8ZM627.7 326.6 631.2 327.4 639.1 326.6 635.5 325.8ZM639.1 326.6 642.7 327.4 650.5 326.7 646.9 325.9ZM658.3 326.1 662.1 327.0 669.9 326.5 666.1 325.6ZM677.6 326.0 681.5 327.0 689.2 326.6 685.3 325.6ZM697.0 326.3 700.9 327.3 708.6 327.1 704.6 326.0ZM716.3 326.9 720.4 328.0 728.1 327.9 723.9 326.8ZM723.9 326.8 728.1 327.9 735.7 327.9 731.5 326.8ZM743.3 327.9 747.5 329.1 755.1 329.2 750.8 328.0ZM750.8 328.0 755.1 329.2 762.6 329.3 758.3 328.1ZM777.5 329.7 781.9 331.0 789.3 331.2 784.9 329.9ZM784.9 329.9 789.3 331.2 796.7 331.5 792.2 330.2ZM792.2 330.2 796.7 331.5 804.1 331.8 799.6 330.5ZM833.0 333.2 837.7 334.6 844.8 335.0 840.1 333.6ZM840.1 333.6 844.8 335.0 852.0 335.4 847.2 334.0Z"/>
<path fill="#2c2c2c" stroke="#2c2c2c" d="M484.6 338.0 487.2 338.4 494.9 336.5 492.3 336.1ZM487.2 338.4 489.7 338.8 497.5 336.9 494.9 336.5ZM489.7 338.8 492.3 339.2 500.1 337.2 497.5 336.9ZM497.5 336.9 500.1 337.2 507.9 335.4 505.2 335.0ZM500.1 337.2 502.8 337.6 510.6 335.8 507.9 335.4ZM502.8 337.6 505.5 338.0 513.3 336.2 510.6 335.8ZM513.3 336.2 516.1 336.6 524.0 334.9 521.1 334.4ZM516.1 336.6 518.9 337.1 526.8 335.3 524.0 334.9ZM524.0 334.9 526.8 335.3 534.7 333.6 531.8 333.2ZM526.8 335.3 529.7 335.8 537.6 334.1 534.7 333.6ZM537.6 334.1 540.6 334.6 548.5 333.0 545.4 332.5ZM548.5 333.0 551.5 333.6 559.4 332.0 556.3 331.5ZM559.4 332.0 562.5 332.6 570.4 331.2 567.3 330.6ZM570.4 331.2 573.6 331.8 581.6 330.5 578.3 329.9ZM589.5 329.3 592.8 329.9 600.7 328.8 597.3 328.1ZM600.7 328.8 604.1 329.5 612.0 328.4 608.5 327.7ZM612.0 328.4 615.5 329.2 623.4 328.3 619.8 327.5ZM619.8 327.5 623.4 328.3 631.2 327.4 627.7 326.6ZM631.2 327.4 634.8 328.2 642.7 327.4 639.1 326.6ZM650.5 326.7 654.3 327.6 662.1 327.0 658.3 326.1ZM662.1 327.0 665.9 328.0 673.7 327.4 669.9 326.5ZM669.9 326.5 673.7 327.4 681.5 327.0 677.6 326.0ZM681.5 327.0 685.4 328.0 693.2 327.6 689.2 326.6ZM689.2 326.6 693.2 327.6 700.9 327.3 697.0 326.3ZM708.6 327.1 712.7 328.2 720.4 328.0 716.3 326.9ZM728.1 327.9 732.3 329.2 739.9 329.1 735.7 327.9ZM735.7 327.9 739.9 329.1 747.5 329.1 743.3 327.9ZM755.1 329.2 759.4 330.5 766.9 330.6 762.6 329.3ZM762.6 329.3 766.9 330.6 774.5 330.8 770.1 329.5ZM770.1 329.5 774.5 330.8 781.9 331.0 777.5 329.7ZM796.7 331.5 801.3 332.9 808.6 333.2 804.1 331.8ZM804.1 331.8 808.6 333.2 815.9 333.5 811.4 332.1ZM811.4 332.1 815.9 333.5 823.2 333.9 818.6 332.5ZM818.6 332.5 823.2 333.9 830.5 334.2 825.8 332.9ZM825.8 332.9 830.5 334.2 837.7 334.6 833.0 333.2Z"/>
<path fill="#2d2d2d" stroke="#2d2d2d" d="M476.9 340.0 479.4 340.4 487.2 338.4 484.6 338.0ZM479.4 340.4 482.0 340.8 489.7 338.8 487.2 338.4ZM482.0 340.8 484.5 341.2 492.3 339.2 489.7 338.8ZM492.3 339.2 495.0 339.6 502.8 337.6 500.1 337.2ZM495.0 339.6 497.7 340.0 505.5 338.0 502.8 337.6ZM505.5 338.0 508.2 338.5 516.1 336.6 513.3 336.2ZM508.2 338.5 511.0 339.0 518.9 337.1 516.1 336.6ZM518.9 337.1 521.8 337.6 529.7 335.8 526.8 335.3ZM529.7 335.8 532.6 336.3 540.6 334.6 537.6 334.1ZM540.6 334.6 543.6 335.2 551.5 333.6 548.5 333.0ZM551.5 333.6 554.6 334.2 562.5 332.6 559.4 332.0ZM562.5 332.6 565.7 333.3 573.6 331.8 570.4 331.2ZM573.6 331.8 576.9 332.5 584.9 331.2 581.6 330.5ZM581.6 330.5 584.9 331.2 592.8 329.9 589.5 329.3ZM592.8 329.9 596.1 330.7 604.1 329.5 600.7 328.8ZM604.1 329.5 607.5 330.3 615.5 329.2 612.0 328.4ZM623.4 328.3 626.9 329.1 634.8 328.2 631.2 327.4ZM634.8 328.2 638.5 329.1 646.4 328.3 642.7 327.4ZM642.7 327.4 646.4 328.3 654.3 327.6 650.5 326.7ZM654.3 327.6 658.0 328.6 665.9 328.0 662.1 327.0ZM673.7 327.4 677.6 328.5 685.4 328.0 681.5 327.0ZM693.2 327.6 697.2 328.8 705.0 328.5 700.9 327.3ZM700.9 327.3 705.0 328.5 712.7 328.2 708.6 327.1ZM720.4 328.0 724.6 329.3 732.3 329.2 728.1 327.9ZM739.9 329.1 744.2 330.4 751.8 330.4 747.5 329.1ZM747.5 329.1 751.8 330.4 759.4 330.5 755.1 329.2ZM774.5 330.8 778.9 332.2 786.4 332.4 781.9 331.0ZM781.9 331.0 786.4 332.4 793.8 332.6 789.3 331.2ZM789.3 331.2 793.8 332.6 801.3 332.9 796.7 331.5ZM823.2 333.9 827.9 335.3 835.2 335.7 830.5 334.2ZM830.5 334.2 835.2 335.7 842.4 336.1 837.7 334.6ZM837.7 334.6 842.4 336.1 849.6 336.5 844.8 335.0ZM844.8 335.0 849.6 336.5 856.7 336.8 852.0 335.4Z"/>
<path fill="#2e2e2e" stroke="#2e2e2e" d="M469.2 342.1 471.7 342.5 479.4 340.4 476.9 340.0ZM471.7 342.5 474.2 342.9 482.0 340.8 479.4 340.4ZM474.2 342.9 476.7 343.3 484.5 341.2 482.0 340.8ZM476.7 343.3 479.3 343.7 487.1 341.6 484.5 341.2ZM484.5 341.2 487.1 341.6 495.0 339.6 492.3 339.2ZM487.1 341.6 489.8 342.0 497.7 340.0 495.0 339.6ZM489.8 342.0 492.4 342.5 500.4 340.4 497.7 340.0ZM497.7 340.0 500.4 340.4 508.2 338.5 505.5 338.0ZM500.4 340.4 503.1 340.9 511.0 339.0 508.2 338.5ZM511.0 339.0 513.8 339.5 521.8 337.6 518.9 337.1ZM521.8 337.6 524.7 338.1 532.6 336.3 529.7 335.8ZM532.6 336.3 535.6 336.9 543.6 335.2 540.6 334.6ZM543.6 335.2 546.6 335.8 554.6 334.2 551.5 333.6ZM554.6 334.2 557.7 334.8 565.7 333.3 562.5 332.6ZM565.7 333.3 568.9 334.0 576.9 332.5 573.6 331.8ZM584.9 331.2 588.2 331.9 596.1 330.7 592.8 329.9ZM596.1 330.7 599.6 331.5 607.5 330.3 604.1 329.5ZM607.5 330.3 611.0 331.2 619.0 330.1 615.5 329.2ZM615.5 329.2 619.0 330.1 626.9 329.1 623.4 328.3ZM626.9 329.1 630.5 330.0 638.5 329.1 634.8 328.2ZM646.4 328.3 650.1 329.3 658.0 328.6 654.3 327.6ZM665.9 328.0 669.7 329.0 677.6 328.5 673.7 327.4ZM685.4 328.0 689.4 329.2 697.2 328.8 693.2 327.6ZM705.0 328.5 709.1 329.7 716.8 329.4 712.7 328.2ZM712.7 328.2 716.8 329.4 724.6 329.3 720.4 328.0ZM732.3 329.2 736.5 330.5 744.2 330.4 739.9 329.1ZM759.4 330.5 763.8 331.9 771.4 332.0 766.9 330.6ZM766.9 330.6 771.4 332.0 778.9 332.2 774.5 330.8ZM793.8 332.6 798.4 334.1 805.8 334.4 801.3 332.9ZM801.3 332.9 805.8 334.4 813.2 334.7 808.6 333.2ZM808.6 333.2 813.2 334.7 820.6 335.0 815.9 333.5ZM815.9 333.5 820.6 335.0 827.9 335.3 823.2 333.9Z"/>
<path fill="#2f2f2f" stroke="#2f2f2f" d="M453.7 346.5 456.1 346.9 463.9 344.7 461.5 344.2ZM461.5 344.2 463.9 344.7 471.7 342.5 469.2 342.1ZM456.1 346.9 458.6 347.3 466.4 345.1 463.9 344.7ZM463.9 344.7 466.4 345.1 474.2 342.9 471.7 342.5ZM466.4 345.1 468.9 345.5 476.7 343.3 474.2 342.9ZM468.9 345.5 471.4 345.9 479.3 343.7 476.7 343.3ZM471.4 345.9 473.9 346.4 481.9 344.2 479.3 343.7ZM479.3 343.7 481.9 344.2 489.8 342.0 487.1 341.6ZM481.9 344.2 484.5 344.6 492.4 342.5 489.8 342.0ZM492.4 342.5 495.1 343.0 503.1 340.9 500.4 340.4ZM503.1 340.9 505.9 341.4 513.8 339.5 511.0 339.0ZM505.9 341.4 508.7 342.0 516.7 340.0 513.8 339.5ZM513.8 339.5 516.7 340.0 524.7 338.1 521.8 337.6ZM516.7 340.0 519.6 340.6 527.6 338.7 524.7 338.1ZM524.7 338.1 527.6 338.7 535.6 336.9 532.6 336.3ZM535.6 336.9 538.6 337.5 546.6 335.8 543.6 335.2ZM546.6 335.8 549.7 336.4 557.7 334.8 554.6 334.2ZM557.7 334.8 560.9 335.5 568.9 334.0 565.7 333.3ZM568.9 334.0 572.1 334.7 580.2 333.3 576.9 332.5ZM576.9 332.5 580.2 333.3 588.2 331.9 584.9 331.2ZM588.2 331.9 591.5 332.7 599.6 331.5 596.1 330.7ZM599.6 331.5 603.0 332.3 611.0 331.2 607.5 330.3ZM619.0 330.1 622.6 331.0 630.5 330.0 626.9 329.1ZM638.5 329.1 642.2 330.1 650.1 329.3 646.4 328.3ZM650.1 329.3 653.9 330.4 661.8 329.7 658.0 328.6ZM658.0 328.6 661.8 329.7 669.7 329.0 665.9 328.0ZM669.7 329.0 673.6 330.2 681.5 329.6 677.6 328.5ZM677.6 328.5 681.5 329.6 689.4 329.2 685.4 328.0ZM697.2 328.8 701.3 330.0 709.1 329.7 705.0 328.5ZM716.8 329.4 721.0 330.8 728.8 330.6 724.6 329.3ZM724.6 329.3 728.8 330.6 736.5 330.5 732.3 329.2ZM744.2 330.4 748.5 331.8 756.1 331.8 751.8 330.4ZM751.8 330.4 756.1 331.8 763.8 331.9 759.4 330.5ZM771.4 332.0 775.8 333.5 783.4 333.6 778.9 332.2ZM778.9 332.2 783.4 333.6 790.9 333.8 786.4 332.4ZM786.4 332.4 790.9 333.8 798.4 334.1 793.8 332.6ZM820.6 335.0 825.3 336.6 832.6 336.9 827.9 335.3ZM827.9 335.3 832.6 336.9 839.9 337.3 835.2 335.7ZM835.2 335.7 839.9 337.3 847.2 337.7 842.4 336.1ZM842.4 336.1 847.2 337.7 854.4 338.0 849.6 336.5ZM849.6 336.5 854.4 338.0 861.5 338.4 856.7 336.8Z"/>
<path fill="#303030" stroke="#303030" d="M446.0 348.8 448.3 349.3 456.1 346.9 453.7 346.5ZM448.3 349.3 450.7 349.7 458.6 347.3 456.1 346.9ZM450.7 349.7 453.1 350.2 461.0 347.8 458.6 347.3ZM458.6 347.3 461.0 347.8 468.9 345.5 466.4 345.1ZM461.0 347.8 463.5 348.2 471.4 345.9 468.9 345.5ZM463.5 348.2 466.0 348.7 473.9 346.4 471.4 345.9ZM473.9 346.4 476.5 346.9 484.5 344.6 481.9 344.2ZM476.5 346.9 479.1 347.4 487.1 345.2 484.5 344.6ZM484.5 344.6 487.1 345.2 495.1 343.0 492.4 342.5ZM487.1 345.2 489.8 345.7 497.9 343.5 495.1 343.0ZM495.1 343.0 497.9 343.5 505.9 341.4 503.1 340.9ZM497.9 343.5 500.6 344.1 508.7 342.0 505.9 341.4ZM508.7 342.0 511.5 342.6 519.6 340.6 516.7 340.0ZM519.6 340.6 522.5 341.3 530.6 339.3 527.6 338.7ZM527.6 338.7 530.6 339.3 538.6 337.5 535.6 336.9ZM538.6 337.5 541.6 338.2 549.7 336.4 546.6 335.8ZM549.7 336.4 552.8 337.2 560.9 335.5 557.7 334.8ZM560.9 335.5 564.1 336.3 572.1 334.7 568.9 334.0ZM580.2 333.3 583.5 334.1 591.5 332.7 588.2 331.9ZM591.5 332.7 595.0 333.6 603.0 332.3 599.6 331.5ZM611.0 331.2 614.5 332.1 622.6 331.0 619.0 330.1ZM622.6 331.0 626.2 332.0 634.2 331.0 630.5 330.0ZM630.5 330.0 634.2 331.0 642.2 330.1 638.5 329.1ZM642.2 330.1 645.9 331.2 653.9 330.4 650.1 329.3ZM661.8 329.7 665.7 330.8 673.6 330.2 669.7 329.0ZM681.5 329.6 685.5 330.9 693.4 330.4 689.4 329.2ZM689.4 329.2 693.4 330.4 701.3 330.0 697.2 328.8ZM709.1 329.7 713.2 331.0 721.0 330.8 716.8 329.4ZM728.8 330.6 733.0 332.0 740.8 331.9 736.5 330.5ZM736.5 330.5 740.8 331.9 748.5 331.8 744.2 330.4ZM756.1 331.8 760.5 333.3 768.2 333.4 763.8 331.9ZM763.8 331.9 768.2 333.4 775.8 333.5 771.4 332.0ZM790.9 333.8 795.5 335.4 803.0 335.7 798.4 334.1ZM798.4 334.1 803.0 335.7 810.5 335.9 805.8 334.4ZM805.8 334.4 810.5 335.9 817.9 336.2 813.2 334.7ZM813.2 334.7 817.9 336.2 825.3 336.6 820.6 335.0Z"/>
<path fill="#313131" stroke="#313131" d="M430.3 353.8 432.6 354.2 440.5 351.7 438.2 351.3ZM438.2 351.3 440.5 351.7 448.3 349.3 446.0 348.8ZM432.6 354.2 434.9 354.7 442.8 352.2 440.5 351.7ZM440.5 351.7 442.8 352.2 450.7 349.7 448.3 349.3ZM442.8 352.2 445.2 352.6 453.1 350.2 450.7 349.7ZM445.2 352.6 447.6 353.1 455.5 350.6 453.1 350.2ZM453.1 350.2 455.5 350.6 463.5 348.2 461.0 347.8ZM455.5 350.6 458.0 351.1 466.0 348.7 463.5 348.2ZM458.0 351.1 460.5 351.6 468.5 349.2 466.0 348.7ZM466.0 348.7 468.5 349.2 476.5 346.9 473.9 346.4ZM468.5 349.2 471.1 349.8 479.1 347.4 476.5 346.9ZM479.1 347.4 481.8 348.0 489.8 345.7 487.1 345.2ZM489.8 345.7 492.6 346.3 500.6 344.1 497.9 343.5ZM500.6 344.1 503.4 344.7 511.5 342.6 508.7 342.0ZM511.5 342.6 514.4 343.3 522.5 341.3 519.6 340.6ZM522.5 341.3 525.4 342.0 533.6 340.0 530.6 339.3ZM530.6 339.3 533.6 340.0 541.6 338.2 538.6 337.5ZM541.6 338.2 544.7 338.9 552.8 337.2 549.7 336.4ZM552.8 337.2 556.0 338.0 564.1 336.3 560.9 335.5ZM564.1 336.3 567.3 337.1 575.4 335.6 572.1 334.7ZM572.1 334.7 575.4 335.6 583.5 334.1 580.2 333.3ZM583.5 334.1 586.9 335.0 595.0 333.6 591.5 332.7ZM603.0 332.3 606.5 333.3 614.5 332.1 611.0 331.2ZM614.5 332.1 618.1 333.1 626.2 332.0 622.6 331.0ZM634.2 331.0 637.9 332.1 645.9 331.2 642.2 330.1ZM653.9 330.4 657.7 331.6 665.7 330.8 661.8 329.7ZM673.6 330.2 677.6 331.5 685.5 330.9 681.5 329.6ZM693.4 330.4 697.5 331.7 705.4 331.3 701.3 330.0ZM701.3 330.0 705.4 331.3 713.2 331.0 709.1 329.7ZM721.0 330.8 725.2 332.2 733.0 332.0 728.8 330.6ZM740.8 331.9 745.1 333.4 752.8 333.3 748.5 331.8ZM748.5 331.8 752.8 333.3 760.5 333.3 756.1 331.8ZM775.8 333.5 780.3 335.1 787.9 335.2 783.4 333.6ZM783.4 333.6 787.9 335.2 795.5 335.4 790.9 333.8ZM817.9 336.2 822.6 337.9 830.0 338.3 825.3 336.6ZM825.3 336.6 830.0 338.3 837.4 338.6 832.6 336.9ZM832.6 336.9 837.4 338.6 844.7 339.0 839.9 337.3ZM839.9 337.3 844.7 339.0 852.0 339.3 847.2 337.7ZM847.2 337.7 852.0 339.3 859.2 339.7 854.4 338.0ZM854.4 338.0 859.2 339.7 866.4 340.1 861.5 338.4Z"/>
<path fill="#323232" stroke="#323232" d="M422.5 356.3 424.7 356.8 432.6 354.2 430.3 353.8ZM424.7 356.8 427.0 357.3 434.9 354.7 432.6 354.2ZM427.0 357.3 429.3 357.8 437.2 355.2 434.9 354.7ZM434.9 354.7 437.2 355.2 445.2 352.6 442.8 352.2ZM437.2 355.2 439.6 355.7 447.6 353.1 445.2 352.6ZM439.6 355.7 442.0 356.2 450.0 353.6 447.6 353.1ZM447.6 353.1 450.0 353.6 458.0 351.1 455.5 350.6ZM450.0 353.6 452.5 354.2 460.5 351.6 458.0 351.1ZM460.5 351.6 463.0 352.2 471.1 349.8 468.5 349.2ZM471.1 349.8 473.7 350.3 481.8 348.0 479.1 347.4ZM481.8 348.0 484.5 348.6 492.6 346.3 489.8 345.7ZM492.6 346.3 495.3 346.9 503.4 344.7 500.6 344.1ZM503.4 344.7 506.3 345.4 514.4 343.3 511.5 342.6ZM514.4 343.3 517.3 344.0 525.4 342.0 522.5 341.3ZM525.4 342.0 528.4 342.7 536.6 340.8 533.6 340.0ZM533.6 340.0 536.6 340.8 544.7 338.9 541.6 338.2ZM544.7 338.9 547.8 339.7 556.0 338.0 552.8 337.2ZM556.0 338.0 559.2 338.8 567.3 337.1 564.1 336.3ZM575.4 335.6 578.8 336.5 586.9 335.0 583.5 334.1ZM586.9 335.0 590.3 336.0 598.4 334.6 595.0 333.6ZM595.0 333.6 598.4 334.6 606.5 333.3 603.0 332.3ZM606.5 333.3 610.0 334.3 618.1 333.1 614.5 332.1ZM626.2 332.0 629.8 333.2 637.9 332.1 634.2 331.0ZM645.9 331.2 649.7 332.4 657.7 331.6 653.9 330.4ZM665.7 330.8 669.6 332.1 677.6 331.5 673.6 330.2ZM685.5 330.9 689.5 332.2 697.5 331.7 693.4 330.4ZM705.4 331.3 709.5 332.8 717.4 332.4 713.2 331.0ZM713.2 331.0 717.4 332.4 725.2 332.2 721.0 330.8ZM733.0 332.0 737.3 333.5 745.1 333.4 740.8 331.9ZM760.5 333.3 765.0 334.9 772.7 335.0 768.2 333.4ZM768.2 333.4 772.7 335.0 780.3 335.1 775.8 333.5ZM795.5 335.4 800.1 337.1 807.6 337.4 803.0 335.7ZM803.0 335.7 807.6 337.4 815.1 337.6 810.5 335.9ZM810.5 335.9 815.1 337.6 822.6 337.9 817.9 336.2ZM859.2 339.7 864.1 341.5 871.3 341.9 866.4 340.1Z"/>
<path fill="#333333" stroke="#333333" d="M406.7 361.7 408.9 362.3 416.8 359.5 414.6 359.0ZM414.6 359.0 416.8 359.5 424.7 356.8 422.5 356.3ZM408.9 362.3 411.1 362.8 419.0 360.0 416.8 359.5ZM416.8 359.5 419.0 360.0 427.0 357.3 424.7 356.8ZM419.0 360.0 421.3 360.5 429.3 357.8 427.0 357.3ZM421.3 360.5 423.5 361.1 431.6 358.3 429.3 357.8ZM429.3 357.8 431.6 358.3 439.6 355.7 437.2 355.2ZM431.6 358.3 433.9 358.9 442.0 356.2 439.6 355.7ZM433.9 358.9 436.3 359.4 444.4 356.8 442.0 356.2ZM442.0 356.2 444.4 356.8 452.5 354.2 450.0 353.6ZM444.4 356.8 446.8 357.3 454.9 354.7 452.5 354.2ZM452.5 354.2 454.9 354.7 463.0 352.2 460.5 351.6ZM454.9 354.7 457.5 355.3 465.6 352.8 463.0 352.2ZM463.0 352.2 465.6 352.8 473.7 350.3 471.1 349.8ZM465.6 352.8 468.2 353.4 476.3 351.0 473.7 350.3ZM473.7 350.3 476.3 351.0 484.5 348.6 481.8 348.0ZM476.3 351.0 479.0 351.6 487.2 349.2 484.5 348.6ZM484.5 348.6 487.2 349.2 495.3 346.9 492.6 346.3ZM495.3 346.9 498.1 347.6 506.3 345.4 503.4 344.7ZM506.3 345.4 509.1 346.1 517.3 344.0 514.4 343.3ZM517.3 344.0 520.3 344.8 528.4 342.7 525.4 342.0ZM536.6 340.8 539.7 341.6 547.8 339.7 544.7 338.9ZM547.8 339.7 551.0 340.6 559.2 338.8 556.0 338.0ZM567.3 337.1 570.6 338.1 578.8 336.5 575.4 335.6ZM578.8 336.5 582.1 337.5 590.3 336.0 586.9 335.0ZM598.4 334.6 601.9 335.6 610.0 334.3 606.5 333.3ZM618.1 333.1 621.7 334.3 629.8 333.2 626.2 332.0ZM629.8 333.2 633.5 334.4 641.6 333.3 637.9 332.1ZM637.9 332.1 641.6 333.3 649.7 332.4 645.9 331.2ZM649.7 332.4 653.5 333.7 661.6 332.8 657.7 331.6ZM657.7 331.6 661.6 332.8 669.6 332.1 665.7 330.8ZM669.6 332.1 673.6 333.5 681.6 332.8 677.6 331.5ZM677.6 331.5 681.6 332.8 689.5 332.2 685.5 330.9ZM697.5 331.7 701.6 333.2 709.5 332.8 705.4 331.3ZM717.4 332.4 721.6 334.0 729.5 333.7 725.2 332.2ZM725.2 332.2 729.5 333.7 737.3 333.5 733.0 332.0ZM745.1 333.4 749.5 335.0 757.3 334.9 752.8 333.3ZM752.8 333.3 757.3 334.9 765.0 334.9 760.5 333.3ZM772.7 335.0 777.2 336.7 784.9 336.8 780.3 335.1ZM780.3 335.1 784.9 336.8 792.5 336.9 787.9 335.2ZM787.9 335.2 792.5 336.9 800.1 337.1 795.5 335.4ZM815.1 337.6 819.9 339.4 827.4 339.7 822.6 337.9ZM822.6 337.9 827.4 339.7 834.8 340.0 830.0 338.3ZM830.0 338.3 834.8 340.0 842.2 340.4 837.4 338.6ZM837.4 338.6 842.2 340.4 849.5 340.7 844.7 339.0ZM844.7 339.0 849.5 340.7 856.9 341.1 852.0 339.3ZM852.0 339.3 856.9 341.1 864.1 341.5 859.2 339.7Z"/>
<path fill="#343434" stroke="#343434" d="M390.9 367.4 392.9 368.0 400.9 365.1 398.8 364.6ZM398.8 364.6 400.9 365.1 408.9 362.3 406.7 361.7ZM392.9 368.0 395.0 368.5 403.1 365.6 400.9 365.1ZM400.9 365.1 403.1 365.6 411.1 362.8 408.9 362.3ZM403.1 365.6 405.2 366.2 413.2 363.3 411.1 362.8ZM411.1 362.8 413.2 363.3 421.3 360.5 419.0 360.0ZM405.2 366.2 407.4 366.7 415.5 363.9 413.2 363.3ZM413.2 363.3 415.5 363.9 423.5 361.1 421.3 360.5ZM415.5 363.9 417.7 364.4 425.8 361.6 423.5 361.1ZM423.5 361.1 425.8 361.6 433.9 358.9 431.6 358.3ZM425.8 361.6 428.2 362.2 436.3 359.4 433.9 358.9ZM436.3 359.4 438.7 360.0 446.8 357.3 444.4 356.8ZM446.8 357.3 449.3 358.0 457.5 355.3 454.9 354.7ZM457.5 355.3 460.0 356.0 468.2 353.4 465.6 352.8ZM468.2 353.4 470.8 354.1 479.0 351.6 476.3 351.0ZM479.0 351.6 481.7 352.4 489.9 349.9 487.2 349.2ZM487.2 349.2 489.9 349.9 498.1 347.6 495.3 346.9ZM498.1 347.6 500.9 348.4 509.1 346.1 506.3 345.4ZM509.1 346.1 512.1 346.9 520.3 344.8 517.3 344.0ZM520.3 344.8 523.3 345.6 531.5 343.5 528.4 342.7ZM528.4 342.7 531.5 343.5 539.7 341.6 536.6 340.8ZM539.7 341.6 542.8 342.5 551.0 340.6 547.8 339.7ZM551.0 340.6 554.2 341.5 562.4 339.8 559.2 338.8ZM559.2 338.8 562.4 339.8 570.6 338.1 567.3 337.1ZM570.6 338.1 573.9 339.1 582.1 337.5 578.8 336.5ZM590.3 336.0 593.7 337.0 601.9 335.6 598.4 334.6ZM601.9 335.6 605.5 336.8 613.6 335.5 610.0 334.3ZM610.0 334.3 613.6 335.5 621.7 334.3 618.1 333.1ZM621.7 334.3 625.4 335.5 633.5 334.4 629.8 333.2ZM641.6 333.3 645.4 334.6 653.5 333.7 649.7 332.4ZM661.6 332.8 665.5 334.2 673.6 333.5 669.6 332.1ZM681.6 332.8 685.6 334.2 693.6 333.7 689.5 332.2ZM689.5 332.2 693.6 333.7 701.6 333.2 697.5 331.7ZM709.5 332.8 713.7 334.3 721.6 334.0 717.4 332.4ZM729.5 333.7 733.8 335.3 741.7 335.1 737.3 333.5ZM737.3 333.5 741.7 335.1 749.5 335.0 745.1 333.4ZM757.3 334.9 761.7 336.6 769.5 336.6 765.0 334.9ZM765.0 334.9 769.5 336.6 777.2 336.7 772.7 335.0ZM792.5 336.9 797.2 338.7 804.8 338.9 800.1 337.1ZM800.1 337.1 804.8 338.9 812.4 339.2 807.6 337.4ZM807.6 337.4 812.4 339.2 819.9 339.4 815.1 337.6ZM849.5 340.7 854.4 342.6 861.8 343.0 856.9 341.1ZM856.9 341.1 861.8 343.0 869.1 343.4 864.1 341.5ZM864.1 341.5 869.1 343.4 876.3 343.7 871.3 341.9Z"/>
<path fill="#353535" stroke="#353535" d="M374.9 373.4 376.9 374.0 384.9 371.0 382.9 370.4ZM382.9 370.4 384.9 371.0 392.9 368.0 390.9 367.4ZM376.9 374.0 378.9 374.6 387.0 371.5 384.9 371.0ZM384.9 371.0 387.0 371.5 395.0 368.5 392.9 368.0ZM387.0 371.5 389.0 372.1 397.1 369.1 395.0 368.5ZM395.0 368.5 397.1 369.1 405.2 366.2 403.1 365.6ZM389.0 372.1 391.1 372.7 399.3 369.7 397.1 369.1ZM397.1 369.1 399.3 369.7 407.4 366.7 405.2 366.2ZM399.3 369.7 401.4 370.3 409.6 367.3 407.4 366.7ZM407.4 366.7 409.6 367.3 417.7 364.4 415.5 363.9ZM409.6 367.3 411.8 368.0 420.0 365.1 417.7 364.4ZM417.7 364.4 420.0 365.1 428.2 362.2 425.8 361.6ZM420.0 365.1 422.3 365.7 430.5 362.8 428.2 362.2ZM428.2 362.2 430.5 362.8 438.7 360.0 436.3 359.4ZM430.5 362.8 432.9 363.5 441.1 360.7 438.7 360.0ZM438.7 360.0 441.1 360.7 449.3 358.0 446.8 357.3ZM441.1 360.7 443.6 361.4 451.8 358.6 449.3 358.0ZM449.3 358.0 451.8 358.6 460.0 356.0 457.5 355.3ZM460.0 356.0 462.6 356.7 470.8 354.1 468.2 353.4ZM470.8 354.1 473.5 354.9 481.7 352.4 479.0 351.6ZM481.7 352.4 484.5 353.1 492.7 350.7 489.9 349.9ZM489.9 349.9 492.7 350.7 500.9 348.4 498.1 347.6ZM500.9 348.4 503.8 349.2 512.1 346.9 509.1 346.1ZM512.1 346.9 515.0 347.8 523.3 345.6 520.3 344.8ZM531.5 343.5 534.6 344.4 542.8 342.5 539.7 341.6ZM542.8 342.5 546.0 343.4 554.2 341.5 551.0 340.6ZM562.4 339.8 565.7 340.8 573.9 339.1 570.6 338.1ZM582.1 337.5 585.6 338.5 593.7 337.0 590.3 336.0ZM593.7 337.0 597.3 338.2 605.5 336.8 601.9 335.6ZM613.6 335.5 617.2 336.7 625.4 335.5 621.7 334.3ZM633.5 334.4 637.3 335.6 645.4 334.6 641.6 333.3ZM653.5 333.7 657.4 335.1 665.5 334.2 661.6 332.8ZM673.6 333.5 677.6 334.9 685.6 334.2 681.6 332.8ZM693.6 333.7 697.7 335.2 705.7 334.7 701.6 333.2ZM701.6 333.2 705.7 334.7 713.7 334.3 709.5 332.8ZM721.6 334.0 725.9 335.6 733.8 335.3 729.5 333.7ZM749.5 335.0 753.9 336.7 761.7 336.6 757.3 334.9ZM777.2 336.7 781.8 338.5 789.5 338.6 784.9 336.8ZM784.9 336.8 789.5 338.6 797.2 338.7 792.5 336.9ZM819.9 339.4 824.7 341.3 832.2 341.6 827.4 339.7ZM827.4 339.7 832.2 341.6 839.6 341.9 834.8 340.0ZM834.8 340.0 839.6 341.9 847.1 342.3 842.2 340.4ZM842.2 340.4 847.1 342.3 854.4 342.6 849.5 340.7Z"/>
<path fill="#363636" stroke="#363636" d="M358.9 379.6 360.8 380.2 368.9 377.1 366.9 376.5ZM366.9 376.5 368.9 377.1 376.9 374.0 374.9 373.4ZM360.8 380.2 362.7 380.9 370.8 377.7 368.9 377.1ZM368.9 377.1 370.8 377.7 378.9 374.6 376.9 374.0ZM370.8 377.7 372.8 378.3 380.9 375.2 378.9 374.6ZM378.9 374.6 380.9 375.2 389.0 372.1 387.0 371.5ZM372.8 378.3 374.8 379.0 383.0 375.8 380.9 375.2ZM380.9 375.2 383.0 375.8 391.1 372.7 389.0 372.1ZM383.0 375.8 385.1 376.5 393.3 373.4 391.1 372.7ZM391.1 372.7 393.3 373.4 401.4 370.3 399.3 369.7ZM393.3 373.4 395.4 374.0 403.6 371.0 401.4 370.3ZM401.4 370.3 403.6 371.0 411.8 368.0 409.6 367.3ZM403.6 371.0 405.9 371.6 414.1 368.6 411.8 368.0ZM411.8 368.0 414.1 368.6 422.3 365.7 420.0 365.1ZM414.1 368.6 416.4 369.3 424.7 366.4 422.3 365.7ZM422.3 365.7 424.7 366.4 432.9 363.5 430.5 362.8ZM432.9 363.5 435.3 364.2 443.6 361.4 441.1 360.7ZM443.6 361.4 446.1 362.1 454.3 359.4 451.8 358.6ZM451.8 358.6 454.3 359.4 462.6 356.7 460.0 356.0ZM454.3 359.4 456.9 360.1 465.2 357.4 462.6 356.7ZM462.6 356.7 465.2 357.4 473.5 354.9 470.8 354.1ZM473.5 354.9 476.2 355.6 484.5 353.1 481.7 352.4ZM484.5 353.1 487.3 354.0 495.5 351.5 492.7 350.7ZM492.7 350.7 495.5 351.5 503.8 349.2 500.9 348.4ZM503.8 349.2 506.7 350.0 515.0 347.8 512.1 346.9ZM515.0 347.8 518.0 348.7 526.3 346.5 523.3 345.6ZM523.3 345.6 526.3 346.5 534.6 344.4 531.5 343.5ZM534.6 344.4 537.7 345.4 546.0 343.4 542.8 342.5ZM554.2 341.5 557.5 342.6 565.7 340.8 562.4 339.8ZM565.7 340.8 569.1 341.9 577.3 340.2 573.9 339.1ZM573.9 339.1 577.3 340.2 585.6 338.5 582.1 337.5ZM585.6 338.5 589.0 339.7 597.3 338.2 593.7 337.0ZM605.5 336.8 609.0 338.0 617.2 336.7 613.6 335.5ZM625.4 335.5 629.1 336.8 637.3 335.6 633.5 334.4ZM645.4 334.6 649.3 336.0 657.4 335.1 653.5 333.7ZM665.5 334.2 669.5 335.7 677.6 334.9 673.6 333.5ZM685.6 334.2 689.7 335.8 697.7 335.2 693.6 333.7ZM705.7 334.7 710.0 336.4 718.0 335.9 713.7 334.3ZM713.7 334.3 718.0 335.9 725.9 335.6 721.6 334.0ZM733.8 335.3 738.2 337.0 746.1 336.8 741.7 335.1ZM741.7 335.1 746.1 336.8 753.9 336.7 749.5 335.0ZM761.7 336.6 766.3 338.5 774.1 338.5 769.5 336.6ZM769.5 336.6 774.1 338.5 781.8 338.5 777.2 336.7ZM797.2 338.7 801.9 340.7 809.5 340.9 804.8 338.9ZM804.8 338.9 809.5 340.9 817.1 341.1 812.4 339.2ZM812.4 339.2 817.1 341.1 824.7 341.3 819.9 339.4ZM847.1 342.3 852.0 344.3 859.4 344.6 854.4 342.6ZM854.4 342.6 859.4 344.6 866.8 345.0 861.8 343.0ZM861.8 343.0 866.8 345.0 874.1 345.4 869.1 343.4ZM869.1 343.4 874.1 345.4 881.3 345.7 876.3 343.7Z"/>
<path fill="#373737" stroke="#373737" d="M334.7 389.3 336.4 390.0 344.6 386.7 342.8 386.0ZM342.8 386.0 344.6 386.7 352.7 383.4 350.8 382.8ZM350.8 382.8 352.7 383.4 360.8 380.2 358.9 379.6ZM336.4 390.0 338.2 390.7 346.4 387.4 344.6 386.7ZM344.6 386.7 346.4 387.4 354.6 384.1 352.7 383.4ZM352.7 383.4 354.6 384.1 362.7 380.9 360.8 380.2ZM346.4 387.4 348.2 388.1 356.4 384.8 354.6 384.1ZM354.6 384.1 356.4 384.8 364.6 381.5 362.7 380.9ZM362.7 380.9 364.6 381.5 372.8 378.3 370.8 377.7ZM356.4 384.8 358.4 385.4 366.6 382.2 364.6 381.5ZM364.6 381.5 366.6 382.2 374.8 379.0 372.8 378.3ZM366.6 382.2 368.6 382.9 376.8 379.6 374.8 379.0ZM374.8 379.0 376.8 379.6 385.1 376.5 383.0 375.8ZM376.8 379.6 378.9 380.3 387.2 377.2 385.1 376.5ZM385.1 376.5 387.2 377.2 395.4 374.0 393.3 373.4ZM387.2 377.2 389.3 377.9 397.6 374.7 395.4 374.0ZM395.4 374.0 397.6 374.7 405.9 371.6 403.6 371.0ZM397.6 374.7 399.8 375.5 408.1 372.4 405.9 371.6ZM405.9 371.6 408.1 372.4 416.4 369.3 414.1 368.6ZM416.4 369.3 418.7 370.1 427.0 367.1 424.7 366.4ZM424.7 366.4 427.0 367.1 435.3 364.2 432.9 363.5ZM427.0 367.1 429.4 367.9 437.8 365.0 435.3 364.2ZM435.3 364.2 437.8 365.0 446.1 362.1 443.6 361.4ZM446.1 362.1 448.6 362.9 456.9 360.1 454.3 359.4ZM456.9 360.1 459.5 361.0 467.9 358.3 465.2 357.4ZM465.2 357.4 467.9 358.3 476.2 355.6 473.5 354.9ZM476.2 355.6 478.9 356.5 487.3 354.0 484.5 353.1ZM495.5 351.5 498.4 352.4 506.7 350.0 503.8 349.2ZM506.7 350.0 509.7 351.0 518.0 348.7 515.0 347.8ZM526.3 346.5 529.4 347.5 537.7 345.4 534.6 344.4ZM537.7 345.4 540.9 346.5 549.2 344.5 546.0 343.4ZM546.0 343.4 549.2 344.5 557.5 342.6 554.2 341.5ZM557.5 342.6 560.8 343.7 569.1 341.9 565.7 340.8ZM577.3 340.2 580.7 341.3 589.0 339.7 585.6 338.5ZM597.3 338.2 600.8 339.4 609.0 338.0 605.5 336.8ZM617.2 336.7 620.9 338.0 629.1 336.8 625.4 335.5ZM637.3 335.6 641.1 337.0 649.3 336.0 645.4 334.6ZM657.4 335.1 661.3 336.5 669.5 335.7 665.5 334.2ZM677.6 334.9 681.6 336.5 689.7 335.8 685.6 334.2ZM697.7 335.2 701.9 336.9 710.0 336.4 705.7 334.7ZM725.9 335.6 730.2 337.3 738.2 337.0 733.8 335.3ZM746.1 336.8 750.5 338.7 758.4 338.5 753.9 336.7ZM753.9 336.7 758.4 338.5 766.3 338.5 761.7 336.6ZM781.8 338.5 786.4 340.4 794.2 340.5 789.5 338.6ZM789.5 338.6 794.2 340.5 801.9 340.7 797.2 338.7ZM817.1 341.1 821.9 343.1 829.5 343.4 824.7 341.3ZM824.7 341.3 829.5 343.4 837.1 343.7 832.2 341.6ZM832.2 341.6 837.1 343.7 844.5 344.0 839.6 341.9ZM839.6 341.9 844.5 344.0 852.0 344.3 847.1 342.3Z"/>
<path fill="#383838" stroke="#383838" d="M277.2 413.2 278.6 414.1 287.0 410.5 285.5 409.7ZM285.5 409.7 287.0 410.5 295.3 407.1 293.7 406.3ZM293.7 406.3 295.3 407.1 303.6 403.6 302.0 402.8ZM302.0 402.8 303.6 403.6 311.8 400.1 310.2 399.4ZM310.2 399.4 311.8 400.1 320.0 396.7 318.4 396.0ZM318.4 396.0 320.0 396.7 328.2 393.3 326.5 392.6ZM326.5 392.6 328.2 393.3 336.4 390.0 334.7 389.3ZM278.6 414.1 280.1 414.9 288.5 411.4 287.0 410.5ZM287.0 410.5 288.5 411.4 296.8 407.9 295.3 407.1ZM295.3 407.1 296.8 407.9 305.2 404.4 303.6 403.6ZM303.6 403.6 305.2 404.4 313.5 400.9 311.8 400.1ZM311.8 400.1 313.5 400.9 321.7 397.5 320.0 396.7ZM320.0 396.7 321.7 397.5 330.0 394.0 328.2 393.3ZM328.2 393.3 330.0 394.0 338.2 390.7 336.4 390.0ZM296.8 407.9 298.4 408.7 306.8 405.2 305.2 404.4ZM305.2 404.4 306.8 405.2 315.1 401.7 313.5 400.9ZM313.5 400.9 315.1 401.7 323.4 398.2 321.7 397.5ZM321.7 397.5 323.4 398.2 331.7 394.8 330.0 394.0ZM330.0 394.0 331.7 394.8 340.0 391.4 338.2 390.7ZM338.2 390.7 340.0 391.4 348.2 388.1 346.4 387.4ZM315.1 401.7 316.8 402.5 325.2 399.0 323.4 398.2ZM323.4 398.2 325.2 399.0 333.5 395.5 331.7 394.8ZM331.7 394.8 333.5 395.5 341.8 392.1 340.0 391.4ZM340.0 391.4 341.8 392.1 350.1 388.8 348.2 388.1ZM348.2 388.1 350.1 388.8 358.4 385.4 356.4 384.8ZM333.5 395.5 335.3 396.3 343.7 392.9 341.8 392.1ZM341.8 392.1 343.7 392.9 352.0 389.5 350.1 388.8ZM350.1 388.8 352.0 389.5 360.3 386.2 358.4 385.4ZM358.4 385.4 360.3 386.2 368.6 382.9 366.6 382.2ZM352.0 389.5 353.9 390.3 362.3 386.9 360.3 386.2ZM360.3 386.2 362.3 386.9 370.6 383.6 368.6 382.9ZM368.6 382.9 370.6 383.6 378.9 380.3 376.8 379.6ZM370.6 383.6 372.6 384.4 381.0 381.1 378.9 380.3ZM378.9 380.3 381.0 381.1 389.3 377.9 387.2 377.2ZM381.0 381.1 383.1 381.9 391.5 378.6 389.3 377.9ZM389.3 377.9 391.5 378.6 399.8 375.5 397.6 374.7ZM399.8 375.5 402.0 376.2 410.4 373.1 408.1 372.4ZM408.1 372.4 410.4 373.1 418.7 370.1 416.4 369.3ZM418.7 370.1 421.1 370.9 429.4 367.9 427.0 367.1ZM429.4 367.9 431.9 368.7 440.3 365.8 437.8 365.0ZM437.8 365.0 440.3 365.8 448.6 362.9 446.1 362.1ZM448.6 362.9 451.2 363.8 459.5 361.0 456.9 360.1ZM459.5 361.0 462.2 361.9 470.6 359.1 467.9 358.3ZM467.9 358.3 470.6 359.1 478.9 356.5 476.2 355.6ZM478.9 356.5 481.7 357.4 490.1 354.9 487.3 354.0ZM487.3 354.0 490.1 354.9 498.4 352.4 495.5 351.5ZM498.4 352.4 501.3 353.4 509.7 351.0 506.7 350.0ZM518.0 348.7 521.0 349.7 529.4 347.5 526.3 346.5ZM529.4 347.5 532.5 348.6 540.9 346.5 537.7 345.4ZM549.2 344.5 552.4 345.6 560.8 343.7 557.5 342.6ZM569.1 341.9 572.4 343.0 580.7 341.3 577.3 340.2ZM589.0 339.7 592.5 341.0 600.8 339.4 597.3 338.2ZM600.8 339.4 604.4 340.8 612.7 339.3 609.0 338.0ZM609.0 338.0 612.7 339.3 620.9 338.0 617.2 336.7ZM620.9 338.0 624.7 339.4 632.9 338.2 629.1 336.8ZM629.1 336.8 632.9 338.2 641.1 337.0 637.3 335.6ZM641.1 337.0 645.0 338.5 653.2 337.5 649.3 336.0ZM649.3 336.0 653.2 337.5 661.3 336.5 657.4 335.1ZM669.5 335.7 673.5 337.2 681.6 336.5 677.6 334.9ZM689.7 335.8 693.8 337.5 701.9 336.9 697.7 335.2ZM710.0 336.4 714.2 338.1 722.3 337.7 718.0 335.9ZM718.0 335.9 722.3 337.7 730.2 337.3 725.9 335.6ZM738.2 337.0 742.6 338.9 750.5 338.7 746.1 336.8ZM766.3 338.5 770.8 340.4 778.7 340.4 774.1 338.5ZM774.1 338.5 778.7 340.4 786.4 340.4 781.8 338.5ZM801.9 340.7 806.6 342.7 814.3 342.9 809.5 340.9ZM809.5 340.9 814.3 342.9 821.9 343.1 817.1 341.1ZM844.5 344.0 849.5 346.1 857.0 346.4 852.0 344.3ZM852.0 344.3 857.0 346.4 864.4 346.8 859.4 344.6ZM859.4 344.6 864.4 346.8 871.8 347.1 866.8 345.0ZM866.8 345.0 871.8 347.1 879.1 347.5 874.1 345.4ZM874.1 345.4 879.1 347.5 886.4 347.9 881.3 345.7Z"/>
<path fill="#393939" stroke="#393939" d="M280.1 414.9 281.6 415.8 290.0 412.2 288.5 411.4ZM288.5 411.4 290.0 412.2 298.4 408.7 296.8 407.9ZM281.6 415.8 283.0 416.7 291.5 413.1 290.0 412.2ZM290.0 412.2 291.5 413.1 300.0 409.5 298.4 408.7ZM298.4 408.7 300.0 409.5 308.4 406.0 306.8 405.2ZM306.8 405.2 308.4 406.0 316.8 402.5 315.1 401.7ZM283.0 416.7 284.6 417.6 293.1 414.0 291.5 413.1ZM291.5 413.1 293.1 414.0 301.6 410.4 300.0 409.5ZM300.0 409.5 301.6 410.4 310.1 406.8 308.4 406.0ZM308.4 406.0 310.1 406.8 318.5 403.3 316.8 402.5ZM316.8 402.5 318.5 403.3 326.9 399.8 325.2 399.0ZM325.2 399.0 326.9 399.8 335.3 396.3 333.5 395.5ZM310.1 406.8 311.7 407.7 320.2 404.1 318.5 403.3ZM318.5 403.3 320.2 404.1 328.7 400.6 326.9 399.8ZM326.9 399.8 328.7 400.6 337.1 397.1 335.3 396.3ZM335.3 396.3 337.1 397.1 345.5 393.7 343.7 392.9ZM343.7 392.9 345.5 393.7 353.9 390.3 352.0 389.5ZM337.1 397.1 339.0 398.0 347.4 394.5 345.5 393.7ZM345.5 393.7 347.4 394.5 355.9 391.1 353.9 390.3ZM353.9 390.3 355.9 391.1 364.3 387.7 362.3 386.9ZM362.3 386.9 364.3 387.7 372.6 384.4 370.6 383.6ZM364.3 387.7 366.3 388.5 374.7 385.2 372.6 384.4ZM372.6 384.4 374.7 385.2 383.1 381.9 381.0 381.1ZM383.1 381.9 385.2 382.7 393.6 379.4 391.5 378.6ZM391.5 378.6 393.6 379.4 402.0 376.2 399.8 375.5ZM402.0 376.2 404.3 377.1 412.7 373.9 410.4 373.1ZM410.4 373.1 412.7 373.9 421.1 370.9 418.7 370.1ZM412.7 373.9 415.1 374.8 423.5 371.7 421.1 370.9ZM421.1 370.9 423.5 371.7 431.9 368.7 429.4 367.9ZM431.9 368.7 434.4 369.6 442.8 366.6 440.3 365.8ZM440.3 365.8 442.8 366.6 451.2 363.8 448.6 362.9ZM451.2 363.8 453.8 364.7 462.2 361.9 459.5 361.0ZM470.6 359.1 473.3 360.1 481.7 357.4 478.9 356.5ZM481.7 357.4 484.5 358.4 492.9 355.9 490.1 354.9ZM490.1 354.9 492.9 355.9 501.3 353.4 498.4 352.4ZM501.3 353.4 504.3 354.4 512.7 352.0 509.7 351.0ZM509.7 351.0 512.7 352.0 521.0 349.7 518.0 348.7ZM521.0 349.7 524.1 350.8 532.5 348.6 529.4 347.5ZM540.9 346.5 544.1 347.6 552.4 345.6 549.2 344.5ZM560.8 343.7 564.1 344.9 572.4 343.0 569.1 341.9ZM572.4 343.0 575.9 344.3 584.2 342.6 580.7 341.3ZM580.7 341.3 584.2 342.6 592.5 341.0 589.0 339.7ZM592.5 341.0 596.1 342.3 604.4 340.8 600.8 339.4ZM612.7 339.3 616.4 340.8 624.7 339.4 620.9 338.0ZM632.9 338.2 636.7 339.7 645.0 338.5 641.1 337.0ZM653.2 337.5 657.1 339.1 665.3 338.1 661.3 336.5ZM661.3 336.5 665.3 338.1 673.5 337.2 669.5 335.7ZM681.6 336.5 685.7 338.1 693.8 337.5 689.7 335.8ZM701.9 336.9 706.2 338.6 714.2 338.1 710.0 336.4ZM722.3 337.7 726.6 339.5 734.6 339.2 730.2 337.3ZM730.2 337.3 734.6 339.2 742.6 338.9 738.2 337.0ZM750.5 338.7 755.0 340.6 763.0 340.5 758.4 338.5ZM758.4 338.5 763.0 340.5 770.8 340.4 766.3 338.5ZM778.7 340.4 783.3 342.5 791.1 342.5 786.4 340.4ZM786.4 340.4 791.1 342.5 798.9 342.6 794.2 340.5ZM794.2 340.5 798.9 342.6 806.6 342.7 801.9 340.7ZM821.9 343.1 826.8 345.3 834.4 345.5 829.5 343.4ZM829.5 343.4 834.4 345.5 842.0 345.8 837.1 343.7ZM837.1 343.7 842.0 345.8 849.5 346.1 844.5 344.0Z"/>
<path fill="#3a3a3a" stroke="#3a3a3a" d="M284.6 417.6 286.1 418.5 294.7 414.9 293.1 414.0ZM293.1 414.0 294.7 414.9 303.2 411.3 301.6 410.4ZM301.6 410.4 303.2 411.3 311.7 407.7 310.1 406.8ZM286.1 418.5 287.6 419.5 296.3 415.9 294.7 414.9ZM294.7 414.9 296.3 415.9 304.9 412.2 303.2 411.3ZM303.2 411.3 304.9 412.2 313.4 408.6 311.7 407.7ZM311.7 407.7 313.4 408.6 322.0 405.0 320.2 404.1ZM320.2 404.1 322.0 405.0 330.5 401.5 328.7 400.6ZM328.7 400.6 330.5 401.5 339.0 398.0 337.1 397.1ZM322.0 405.0 323.8 406.0 332.3 402.4 330.5 401.5ZM330.5 401.5 332.3 402.4 340.9 398.9 339.0 398.0ZM339.0 398.0 340.9 398.9 349.4 395.4 347.4 394.5ZM347.4 394.5 349.4 395.4 357.8 391.9 355.9 391.1ZM355.9 391.1 357.8 391.9 366.3 388.5 364.3 387.7ZM357.8 391.9 359.8 392.8 368.3 389.4 366.3 388.5ZM366.3 388.5 368.3 389.4 376.8 386.0 374.7 385.2ZM374.7 385.2 376.8 386.0 385.2 382.7 383.1 381.9ZM376.8 386.0 378.9 386.9 387.4 383.6 385.2 382.7ZM385.2 382.7 387.4 383.6 395.9 380.3 393.6 379.4ZM393.6 379.4 395.9 380.3 404.3 377.1 402.0 376.2ZM395.9 380.3 398.1 381.2 406.6 378.0 404.3 377.1ZM404.3 377.1 406.6 378.0 415.1 374.8 412.7 373.9ZM415.1 374.8 417.4 375.7 425.9 372.6 423.5 371.7ZM423.5 371.7 425.9 372.6 434.4 369.6 431.9 368.7ZM434.4 369.6 436.9 370.5 445.3 367.6 442.8 366.6ZM442.8 366.6 445.3 367.6 453.8 364.7 451.2 363.8ZM453.8 364.7 456.4 365.6 464.9 362.8 462.2 361.9ZM462.2 361.9 464.9 362.8 473.3 360.1 470.6 359.1ZM473.3 360.1 476.1 361.1 484.5 358.4 481.7 357.4ZM492.9 355.9 495.8 356.9 504.3 354.4 501.3 353.4ZM512.7 352.0 515.7 353.1 524.1 350.8 521.0 349.7ZM532.5 348.6 535.7 349.7 544.1 347.6 540.9 346.5ZM544.1 347.6 547.3 348.8 555.7 346.8 552.4 345.6ZM552.4 345.6 555.7 346.8 564.1 344.9 560.8 343.7ZM564.1 344.9 567.5 346.2 575.9 344.3 572.4 343.0ZM584.2 342.6 587.7 343.9 596.1 342.3 592.5 341.0ZM604.4 340.8 608.0 342.2 616.4 340.8 612.7 339.3ZM624.7 339.4 628.4 340.9 636.7 339.7 632.9 338.2ZM645.0 338.5 648.9 340.1 657.1 339.1 653.2 337.5ZM665.3 338.1 669.4 339.8 677.6 338.9 673.5 337.2ZM673.5 337.2 677.6 338.9 685.7 338.1 681.6 336.5ZM693.8 337.5 698.0 339.2 706.2 338.6 701.9 336.9ZM714.2 338.1 718.5 340.0 726.6 339.5 722.3 337.7ZM742.6 338.9 747.1 340.9 755.0 340.6 750.5 338.7ZM770.8 340.4 775.5 342.5 783.3 342.5 778.7 340.4ZM798.9 342.6 803.7 344.7 811.4 344.9 806.6 342.7ZM806.6 342.7 811.4 344.9 819.1 345.1 814.3 342.9ZM814.3 342.9 819.1 345.1 826.8 345.3 821.9 343.1ZM849.5 346.1 854.5 348.4 862.0 348.7 857.0 346.4ZM857.0 346.4 862.0 348.7 869.5 349.0 864.4 346.8ZM864.4 346.8 869.5 349.0 876.9 349.4 871.8 347.1ZM871.8 347.1 876.9 349.4 884.2 349.7 879.1 347.5ZM879.1 347.5 884.2 349.7 891.6 350.1 886.4 347.9Z"/>
<path fill="#3b3b3b" stroke="#3b3b3b" d="M287.6 419.5 289.2 420.6 297.9 416.9 296.3 415.9ZM296.3 415.9 297.9 416.9 306.6 413.2 304.9 412.2ZM304.9 412.2 306.6 413.2 315.2 409.6 313.4 408.6ZM313.4 408.6 315.2 409.6 323.8 406.0 322.0 405.0ZM306.6 413.2 308.3 414.3 316.9 410.6 315.2 409.6ZM315.2 409.6 316.9 410.6 325.6 407.0 323.8 406.0ZM323.8 406.0 325.6 407.0 334.2 403.4 332.3 402.4ZM332.3 402.4 334.2 403.4 342.8 399.8 340.9 398.9ZM340.9 398.9 342.8 399.8 351.3 396.3 349.4 395.4ZM349.4 395.4 351.3 396.3 359.8 392.8 357.8 391.9ZM351.3 396.3 353.3 397.3 361.9 393.8 359.8 392.8ZM359.8 392.8 361.9 393.8 370.4 390.3 368.3 389.4ZM368.3 389.4 370.4 390.3 378.9 386.9 376.8 386.0ZM378.9 386.9 381.1 387.9 389.6 384.5 387.4 383.6ZM387.4 383.6 389.6 384.5 398.1 381.2 395.9 380.3ZM398.1 381.2 400.4 382.2 408.9 378.9 406.6 378.0ZM406.6 378.0 408.9 378.9 417.4 375.7 415.1 374.8ZM417.4 375.7 419.9 376.7 428.4 373.6 425.9 372.6ZM425.9 372.6 428.4 373.6 436.9 370.5 434.4 369.6ZM445.3 367.6 447.9 368.6 456.4 365.6 453.8 364.7ZM464.9 362.8 467.6 363.8 476.1 361.1 473.3 360.1ZM476.1 361.1 478.9 362.2 487.4 359.5 484.5 358.4ZM484.5 358.4 487.4 359.5 495.8 356.9 492.9 355.9ZM495.8 356.9 498.8 358.0 507.3 355.5 504.3 354.4ZM504.3 354.4 507.3 355.5 515.7 353.1 512.7 352.0ZM515.7 353.1 518.8 354.3 527.2 352.0 524.1 350.8ZM524.1 350.8 527.2 352.0 535.7 349.7 532.5 348.6ZM535.7 349.7 538.9 351.0 547.3 348.8 544.1 347.6ZM555.7 346.8 559.1 348.1 567.5 346.2 564.1 344.9ZM575.9 344.3 579.3 345.7 587.7 343.9 584.2 342.6ZM596.1 342.3 599.7 343.7 608.0 342.2 604.4 340.8ZM616.4 340.8 620.1 342.3 628.4 340.9 624.7 339.4ZM636.7 339.7 640.6 341.3 648.9 340.1 645.0 338.5ZM657.1 339.1 661.1 340.8 669.4 339.8 665.3 338.1ZM677.6 338.9 681.7 340.7 689.9 339.9 685.7 338.1ZM685.7 338.1 689.9 339.9 698.0 339.2 693.8 337.5ZM706.2 338.6 710.4 340.5 718.5 340.0 714.2 338.1ZM726.6 339.5 731.0 341.5 739.1 341.2 734.6 339.2ZM734.6 339.2 739.1 341.2 747.1 340.9 742.6 338.9ZM755.0 340.6 759.6 342.7 767.6 342.6 763.0 340.5ZM763.0 340.5 767.6 342.6 775.5 342.5 770.8 340.4ZM783.3 342.5 788.0 344.6 795.9 344.7 791.1 342.5ZM791.1 342.5 795.9 344.7 803.7 344.7 798.9 342.6ZM819.1 345.1 824.0 347.3 831.7 347.5 826.8 345.3ZM826.8 345.3 831.7 347.5 839.4 347.8 834.4 345.5ZM834.4 345.5 839.4 347.8 847.0 348.1 842.0 345.8ZM842.0 345.8 847.0 348.1 854.5 348.4 849.5 346.1Z"/>
<path fill="#3c3c3c" stroke="#3c3c3c" d="M289.2 420.6 290.8 421.6 299.6 417.9 297.9 416.9ZM297.9 416.9 299.6 417.9 308.3 414.3 306.6 413.2ZM290.8 421.6 292.5 422.8 301.3 419.0 299.6 417.9ZM299.6 417.9 301.3 419.0 310.0 415.3 308.3 414.3ZM308.3 414.3 310.0 415.3 318.7 411.7 316.9 410.6ZM316.9 410.6 318.7 411.7 327.4 408.0 325.6 407.0ZM325.6 407.0 327.4 408.0 336.1 404.4 334.2 403.4ZM334.2 403.4 336.1 404.4 344.7 400.8 342.8 399.8ZM342.8 399.8 344.7 400.8 353.3 397.3 351.3 396.3ZM353.3 397.3 355.3 398.3 363.9 394.8 361.9 393.8ZM361.9 393.8 363.9 394.8 372.5 391.3 370.4 390.3ZM370.4 390.3 372.5 391.3 381.1 387.9 378.9 386.9ZM381.1 387.9 383.3 388.9 391.9 385.5 389.6 384.5ZM389.6 384.5 391.9 385.5 400.4 382.2 398.1 381.2ZM400.4 382.2 402.7 383.2 411.3 379.9 408.9 378.9ZM408.9 378.9 411.3 379.9 419.9 376.7 417.4 375.7ZM428.4 373.6 430.9 374.6 439.4 371.6 436.9 370.5ZM436.9 370.5 439.4 371.6 447.9 368.6 445.3 367.6ZM447.9 368.6 450.6 369.6 459.1 366.7 456.4 365.6ZM456.4 365.6 459.1 366.7 467.6 363.8 464.9 362.8ZM467.6 363.8 470.4 365.0 478.9 362.2 476.1 361.1ZM487.4 359.5 490.3 360.7 498.8 358.0 495.8 356.9ZM507.3 355.5 510.3 356.7 518.8 354.3 515.7 353.1ZM527.2 352.0 530.4 353.2 538.9 351.0 535.7 349.7ZM547.3 348.8 550.6 350.2 559.1 348.1 555.7 346.8ZM567.5 346.2 570.9 347.6 579.3 345.7 575.9 344.3ZM587.7 343.9 591.3 345.4 599.7 343.7 596.1 342.3ZM608.0 342.2 611.7 343.7 620.1 342.3 616.4 340.8ZM628.4 340.9 632.3 342.5 640.6 341.3 636.7 339.7ZM648.9 340.1 652.8 341.8 661.1 340.8 657.1 339.1ZM669.4 339.8 673.4 341.6 681.7 340.7 677.6 338.9ZM689.9 339.9 694.1 341.8 702.3 341.1 698.0 339.2ZM698.0 339.2 702.3 341.1 710.4 340.5 706.2 338.6ZM718.5 340.0 722.9 342.0 731.0 341.5 726.6 339.5ZM739.1 341.2 743.6 343.2 751.6 343.0 747.1 340.9ZM747.1 340.9 751.6 343.0 759.6 342.7 755.0 340.6ZM767.6 342.6 772.2 344.8 780.1 344.7 775.5 342.5ZM775.5 342.5 780.1 344.7 788.0 344.6 783.3 342.5ZM803.7 344.7 808.5 347.0 816.3 347.2 811.4 344.9ZM811.4 344.9 816.3 347.2 824.0 347.3 819.1 345.1ZM847.0 348.1 852.0 350.4 859.6 350.7 854.5 348.4ZM854.5 348.4 859.6 350.7 867.1 351.1 862.0 348.7ZM862.0 348.7 867.1 351.1 874.6 351.4 869.5 349.0ZM869.5 349.0 874.6 351.4 882.0 351.7 876.9 349.4ZM876.9 349.4 882.0 351.7 889.4 352.1 884.2 349.7ZM884.2 349.7 889.4 352.1 896.8 352.4 891.6 350.1Z"/>
<path fill="#3d3d3d" stroke="#3d3d3d" d="M292.5 422.8 294.1 424.0 303.0 420.2 301.3 419.0ZM301.3 419.0 303.0 420.2 311.8 416.5 310.0 415.3ZM310.0 415.3 311.8 416.5 320.5 412.8 318.7 411.7ZM318.7 411.7 320.5 412.8 329.3 409.1 327.4 408.0ZM327.4 408.0 329.3 409.1 338.0 405.5 336.1 404.4ZM336.1 404.4 338.0 405.5 346.7 401.8 344.7 400.8ZM344.7 400.8 346.7 401.8 355.3 398.3 353.3 397.3ZM346.7 401.8 348.7 403.0 357.4 399.4 355.3 398.3ZM355.3 398.3 357.4 399.4 366.0 395.8 363.9 394.8ZM363.9 394.8 366.0 395.8 374.7 392.3 372.5 391.3ZM372.5 391.3 374.7 392.3 383.3 388.9 381.1 387.9ZM383.3 388.9 385.5 390.0 394.1 386.6 391.9 385.5ZM391.9 385.5 394.1 386.6 402.7 383.2 400.4 382.2ZM411.3 379.9 413.7 381.0 422.3 377.8 419.9 376.7ZM419.9 376.7 422.3 377.8 430.9 374.6 428.4 373.6ZM430.9 374.6 433.4 375.7 442.0 372.6 439.4 371.6ZM439.4 371.6 442.0 372.6 450.6 369.6 447.9 368.6ZM450.6 369.6 453.2 370.8 461.8 367.8 459.1 366.7ZM459.1 366.7 461.8 367.8 470.4 365.0 467.6 363.8ZM478.9 362.2 481.7 363.4 490.3 360.7 487.4 359.5ZM498.8 358.0 501.8 359.3 510.3 356.7 507.3 355.5ZM518.8 354.3 521.9 355.6 530.4 353.2 527.2 352.0ZM538.9 351.0 542.1 352.3 550.6 350.2 547.3 348.8ZM559.1 348.1 562.5 349.5 570.9 347.6 567.5 346.2ZM579.3 345.7 582.9 347.2 591.3 345.4 587.7 343.9ZM599.7 343.7 603.3 345.3 611.7 343.7 608.0 342.2ZM620.1 342.3 623.9 343.9 632.3 342.5 628.4 340.9ZM640.6 341.3 644.5 343.0 652.8 341.8 648.9 340.1ZM661.1 340.8 665.2 342.6 673.4 341.6 669.4 339.8ZM681.7 340.7 685.9 342.6 694.1 341.8 689.9 339.9ZM702.3 341.1 706.6 343.1 714.8 342.5 710.4 340.5ZM710.4 340.5 714.8 342.5 722.9 342.0 718.5 340.0ZM731.0 341.5 735.5 343.6 743.6 343.2 739.1 341.2ZM759.6 342.7 764.2 344.9 772.2 344.8 767.6 342.6ZM788.0 344.6 792.8 346.9 800.7 347.0 795.9 344.7ZM795.9 344.7 800.7 347.0 808.5 347.0 803.7 344.7ZM824.0 347.3 829.0 349.7 836.7 349.9 831.7 347.5ZM831.7 347.5 836.7 349.9 844.4 350.2 839.4 347.8ZM839.4 347.8 844.4 350.2 852.0 350.4 847.0 348.1Z"/>
<path fill="#3e3e3e" stroke="#3e3e3e" d="M294.1 424.0 295.8 425.2 304.7 421.5 303.0 420.2ZM303.0 420.2 304.7 421.5 313.6 417.7 311.8 416.5ZM311.8 416.5 313.6 417.7 322.4 414.0 320.5 412.8ZM320.5 412.8 322.4 414.0 331.2 410.3 329.3 409.1ZM329.3 409.1 331.2 410.3 339.9 406.6 338.0 405.5ZM338.0 405.5 339.9 406.6 348.7 403.0 346.7 401.8ZM357.4 399.4 359.4 400.5 368.2 396.9 366.0 395.8ZM366.0 395.8 368.2 396.9 376.8 393.4 374.7 392.3ZM374.7 392.3 376.8 393.4 385.5 390.0 383.3 388.9ZM385.5 390.0 387.8 391.1 396.4 387.7 394.1 386.6ZM394.1 386.6 396.4 387.7 405.1 384.3 402.7 383.2ZM402.7 383.2 405.1 384.3 413.7 381.0 411.3 379.9ZM413.7 381.0 416.2 382.2 424.8 378.9 422.3 377.8ZM422.3 377.8 424.8 378.9 433.4 375.7 430.9 374.6ZM442.0 372.6 444.6 373.8 453.2 370.8 450.6 369.6ZM461.8 367.8 464.6 369.0 473.2 366.2 470.4 365.0ZM470.4 365.0 473.2 366.2 481.7 363.4 478.9 362.2ZM481.7 363.4 484.6 364.6 493.2 361.9 490.3 360.7ZM490.3 360.7 493.2 361.9 501.8 359.3 498.8 358.0ZM501.8 359.3 504.8 360.6 513.4 358.0 510.3 356.7ZM510.3 356.7 513.4 358.0 521.9 355.6 518.8 354.3ZM521.9 355.6 525.1 357.0 533.6 354.6 530.4 353.2ZM530.4 353.2 533.6 354.6 542.1 352.3 538.9 351.0ZM542.1 352.3 545.4 353.8 554.0 351.6 550.6 350.2ZM550.6 350.2 554.0 351.6 562.5 349.5 559.1 348.1ZM562.5 349.5 565.9 351.0 574.4 349.0 570.9 347.6ZM570.9 347.6 574.4 349.0 582.9 347.2 579.3 345.7ZM582.9 347.2 586.4 348.8 594.9 347.0 591.3 345.4ZM591.3 345.4 594.9 347.0 603.3 345.3 599.7 343.7ZM611.7 343.7 615.5 345.4 623.9 343.9 620.1 342.3ZM632.3 342.5 636.1 344.3 644.5 343.0 640.6 341.3ZM652.8 341.8 656.8 343.7 665.2 342.6 661.1 340.8ZM673.4 341.6 677.6 343.5 685.9 342.6 681.7 340.7ZM694.1 341.8 698.4 343.8 706.6 343.1 702.3 341.1ZM722.9 342.0 727.3 344.1 735.5 343.6 731.0 341.5ZM743.6 343.2 748.1 345.5 756.2 345.2 751.6 343.0ZM751.6 343.0 756.2 345.2 764.2 344.9 759.6 342.7ZM772.2 344.8 776.9 347.1 784.9 347.0 780.1 344.7ZM780.1 344.7 784.9 347.0 792.8 346.9 788.0 344.6ZM808.5 347.0 813.4 349.5 821.2 349.6 816.3 347.2ZM816.3 347.2 821.2 349.6 829.0 349.7 824.0 347.3ZM852.0 350.4 857.1 353.0 864.7 353.2 859.6 350.7ZM859.6 350.7 864.7 353.2 872.2 353.6 867.1 351.1ZM867.1 351.1 872.2 353.6 879.7 353.9 874.6 351.4ZM874.6 351.4 879.7 353.9 887.2 354.2 882.0 351.7ZM882.0 351.7 887.2 354.2 894.6 354.6 889.4 352.1ZM889.4 352.1 894.6 354.6 902.0 354.9 896.8 352.4Z"/>
<path fill="#3f3f3f" stroke="#3f3f3f" d="M295.8 425.2 297.5 426.6 306.5 422.8 304.7 421.5ZM304.7 421.5 306.5 422.8 315.4 419.0 313.6 417.7ZM313.6 417.7 315.4 419.0 324.3 415.2 322.4 414.0ZM322.4 414.0 324.3 415.2 333.1 411.5 331.2 410.3ZM331.2 410.3 333.1 411.5 341.9 407.8 339.9 406.6ZM339.9 406.6 341.9 407.8 350.7 404.1 348.7 403.0ZM348.7 403.0 350.7 404.1 359.4 400.5 357.4 399.4ZM359.4 400.5 361.5 401.7 370.3 398.1 368.2 396.9ZM368.2 396.9 370.3 398.1 379.1 394.6 376.8 393.4ZM376.8 393.4 379.1 394.6 387.8 391.1 385.5 390.0ZM396.4 387.7 398.8 388.9 407.5 385.5 405.1 384.3ZM405.1 384.3 407.5 385.5 416.2 382.2 413.7 381.0ZM424.8 378.9 427.3 380.1 436.0 376.9 433.4 375.7ZM433.4 375.7 436.0 376.9 444.6 373.8 442.0 372.6ZM444.6 373.8 447.3 375.1 456.0 372.0 453.2 370.8ZM453.2 370.8 456.0 372.0 464.6 369.0 461.8 367.8ZM473.2 366.2 476.0 367.4 484.6 364.6 481.7 363.4ZM493.2 361.9 496.2 363.2 504.8 360.6 501.8 359.3ZM513.4 358.0 516.5 359.4 525.1 357.0 521.9 355.6ZM533.6 354.6 536.9 356.0 545.4 353.8 542.1 352.3ZM554.0 351.6 557.4 353.1 565.9 351.0 562.5 349.5ZM574.4 349.0 577.9 350.6 586.4 348.8 582.9 347.2ZM594.9 347.0 598.6 348.6 607.0 347.0 603.3 345.3ZM603.3 345.3 607.0 347.0 615.5 345.4 611.7 343.7ZM615.5 345.4 619.3 347.1 627.7 345.7 623.9 343.9ZM623.9 343.9 627.7 345.7 636.1 344.3 632.3 342.5ZM644.5 343.0 648.5 344.8 656.8 343.7 652.8 341.8ZM665.2 342.6 669.3 344.5 677.6 343.5 673.4 341.6ZM685.9 342.6 690.1 344.6 698.4 343.8 694.1 341.8ZM706.6 343.1 710.9 345.3 719.2 344.6 714.8 342.5ZM714.8 342.5 719.2 344.6 727.3 344.1 722.9 342.0ZM735.5 343.6 740.0 345.8 748.1 345.5 743.6 343.2ZM764.2 344.9 768.9 347.3 776.9 347.1 772.2 344.8ZM792.8 346.9 797.6 349.4 805.5 349.4 800.7 347.0ZM800.7 347.0 805.5 349.4 813.4 349.5 808.5 347.0ZM829.0 349.7 834.0 352.3 841.7 352.5 836.7 349.9ZM836.7 349.9 841.7 352.5 849.4 352.7 844.4 350.2ZM844.4 350.2 849.4 352.7 857.1 353.0 852.0 350.4Z"/>
<path fill="#404040" stroke="#404040" d="M297.5 426.6 299.3 428.0 308.3 424.1 306.5 422.8ZM306.5 422.8 308.3 424.1 317.2 420.3 315.4 419.0ZM315.4 419.0 317.2 420.3 326.2 416.6 324.3 415.2ZM324.3 415.2 326.2 416.6 335.1 412.8 333.1 411.5ZM333.1 411.5 335.1 412.8 343.9 409.1 341.9 407.8ZM341.9 407.8 343.9 409.1 352.7 405.4 350.7 404.1ZM350.7 404.1 352.7 405.4 361.5 401.7 359.4 400.5ZM370.3 398.1 372.5 399.4 381.3 395.9 379.1 394.6ZM379.1 394.6 381.3 395.9 390.1 392.3 387.8 391.1ZM387.8 391.1 390.1 392.3 398.8 388.9 396.4 387.7ZM407.5 385.5 409.9 386.8 418.6 383.4 416.2 382.2ZM416.2 382.2 418.6 383.4 427.3 380.1 424.8 378.9ZM427.3 380.1 429.9 381.4 438.6 378.2 436.0 376.9ZM436.0 376.9 438.6 378.2 447.3 375.1 444.6 373.8ZM456.0 372.0 458.7 373.3 467.4 370.3 464.6 369.0ZM464.6 369.0 467.4 370.3 476.0 367.4 473.2 366.2ZM476.0 367.4 478.9 368.8 487.6 366.0 484.6 364.6ZM484.6 364.6 487.6 366.0 496.2 363.2 493.2 361.9ZM504.8 360.6 507.9 362.0 516.5 359.4 513.4 358.0ZM525.1 357.0 528.3 358.4 536.9 356.0 533.6 354.6ZM545.4 353.8 548.8 355.3 557.4 353.1 554.0 351.6ZM565.9 351.0 569.4 352.6 577.9 350.6 574.4 349.0ZM586.4 348.8 590.1 350.4 598.6 348.6 594.9 347.0ZM607.0 347.0 610.8 348.7 619.3 347.1 615.5 345.4ZM627.7 345.7 631.6 347.5 640.1 346.1 636.1 344.3ZM636.1 344.3 640.1 346.1 648.5 344.8 644.5 343.0ZM656.8 343.7 660.9 345.6 669.3 344.5 665.2 342.6ZM677.6 343.5 681.8 345.6 690.1 344.6 685.9 342.6ZM698.4 343.8 702.7 346.0 710.9 345.3 706.6 343.1ZM727.3 344.1 731.8 346.3 740.0 345.8 735.5 343.6ZM748.1 345.5 752.7 347.8 760.8 347.5 756.2 345.2ZM756.2 345.2 760.8 347.5 768.9 347.3 764.2 344.9ZM776.9 347.1 781.7 349.5 789.7 349.4 784.9 347.0ZM784.9 347.0 789.7 349.4 797.6 349.4 792.8 346.9ZM813.4 349.5 818.3 352.0 826.2 352.1 821.2 349.6ZM821.2 349.6 826.2 352.1 834.0 352.3 829.0 349.7ZM849.4 352.7 854.5 355.3 862.2 355.6 857.1 353.0ZM857.1 353.0 862.2 355.6 869.9 355.9 864.7 353.2ZM864.7 353.2 869.9 355.9 877.4 356.2 872.2 353.6ZM872.2 353.6 877.4 356.2 885.0 356.5 879.7 353.9ZM879.7 353.9 885.0 356.5 892.5 356.8 887.2 354.2ZM887.2 354.2 892.5 356.8 899.9 357.2 894.6 354.6ZM894.6 354.6 899.9 357.2 907.3 357.5 902.0 354.9Z"/>
<path fill="#414141" stroke="#414141" d="M326.2 416.6 328.1 418.0 337.0 414.2 335.1 412.8ZM335.1 412.8 337.0 414.2 346.0 410.4 343.9 409.1ZM343.9 409.1 346.0 410.4 354.8 406.7 352.7 405.4ZM352.7 405.4 354.8 406.7 363.7 403.0 361.5 401.7ZM361.5 401.7 363.7 403.0 372.5 399.4 370.3 398.1ZM381.3 395.9 383.6 397.2 392.4 393.7 390.1 392.3ZM390.1 392.3 392.4 393.7 401.2 390.2 398.8 388.9ZM398.8 388.9 401.2 390.2 409.9 386.8 407.5 385.5ZM409.9 386.8 412.4 388.1 421.2 384.7 418.6 383.4ZM418.6 383.4 421.2 384.7 429.9 381.4 427.3 380.1ZM438.6 378.2 441.3 379.6 450.0 376.4 447.3 375.1ZM447.3 375.1 450.0 376.4 458.7 373.3 456.0 372.0ZM467.4 370.3 470.2 371.7 478.9 368.8 476.0 367.4ZM487.6 366.0 490.6 367.4 499.2 364.7 496.2 363.2ZM496.2 363.2 499.2 364.7 507.9 362.0 504.8 360.6ZM516.5 359.4 519.7 360.9 528.3 358.4 525.1 357.0ZM536.9 356.0 540.2 357.6 548.8 355.3 545.4 353.8ZM557.4 353.1 560.8 354.7 569.4 352.6 565.9 351.0ZM577.9 350.6 581.5 352.3 590.1 350.4 586.4 348.8ZM598.6 348.6 602.3 350.4 610.8 348.7 607.0 347.0ZM619.3 347.1 623.1 349.0 631.6 347.5 627.7 345.7ZM640.1 346.1 644.0 348.1 652.5 346.8 648.5 344.8ZM648.5 344.8 652.5 346.8 660.9 345.6 656.8 343.7ZM669.3 344.5 673.4 346.6 681.8 345.6 677.6 343.5ZM690.1 344.6 694.4 346.8 702.7 346.0 698.4 343.8ZM710.9 345.3 715.4 347.5 723.6 346.9 719.2 344.6ZM719.2 344.6 723.6 346.9 731.8 346.3 727.3 344.1ZM740.0 345.8 744.6 348.2 752.7 347.8 748.1 345.5ZM760.8 347.5 765.5 350.0 773.6 349.7 768.9 347.3ZM768.9 347.3 773.6 349.7 781.7 349.5 776.9 347.1ZM797.6 349.4 802.5 351.9 810.5 351.9 805.5 349.4ZM805.5 349.4 810.5 351.9 818.3 352.0 813.4 349.5ZM834.0 352.3 839.0 354.9 846.8 355.1 841.7 352.5ZM841.7 352.5 846.8 355.1 854.5 355.3 849.4 352.7ZM892.5 356.8 897.8 359.6 905.2 359.9 899.9 357.2ZM899.9 357.2 905.2 359.9 912.7 360.2 907.3 357.5Z"/>
<path fill="#424242" stroke="#424242" d="M299.3 428.0 301.1 429.5 310.1 425.6 308.3 424.1ZM308.3 424.1 310.1 425.6 319.1 421.8 317.2 420.3ZM317.2 420.3 319.1 421.8 328.1 418.0 326.2 416.6ZM346.0 410.4 348.0 411.9 357.0 408.1 354.8 406.7ZM354.8 406.7 357.0 408.1 365.9 404.4 363.7 403.0ZM363.7 403.0 365.9 404.4 374.7 400.8 372.5 399.4ZM372.5 399.4 374.7 400.8 383.6 397.2 381.3 395.9ZM392.4 393.7 394.8 395.1 403.6 391.5 401.2 390.2ZM401.2 390.2 403.6 391.5 412.4 388.1 409.9 386.8ZM421.2 384.7 423.7 386.2 432.5 382.8 429.9 381.4ZM429.9 381.4 432.5 382.8 441.3 379.6 438.6 378.2ZM450.0 376.4 452.8 377.9 461.5 374.8 458.7 373.3ZM458.7 373.3 461.5 374.8 470.2 371.7 467.4 370.3ZM478.9 368.8 481.9 370.3 490.6 367.4 487.6 366.0ZM499.2 364.7 502.3 366.2 511.0 363.5 507.9 362.0ZM507.9 362.0 511.0 363.5 519.7 360.9 516.5 359.4ZM519.7 360.9 522.9 362.5 531.5 360.0 528.3 358.4ZM528.3 358.4 531.5 360.0 540.2 357.6 536.9 356.0ZM548.8 355.3 552.2 356.9 560.8 354.7 557.4 353.1ZM569.4 352.6 572.9 354.4 581.5 352.3 577.9 350.6ZM590.1 350.4 593.7 352.2 602.3 350.4 598.6 348.6ZM610.8 348.7 614.6 350.6 623.1 349.0 619.3 347.1ZM631.6 347.5 635.6 349.5 644.0 348.1 640.1 346.1ZM652.5 346.8 656.6 348.9 665.0 347.7 660.9 345.6ZM660.9 345.6 665.0 347.7 673.4 346.6 669.3 344.5ZM681.8 345.6 686.0 347.7 694.4 346.8 690.1 344.6ZM702.7 346.0 707.1 348.2 715.4 347.5 710.9 345.3ZM723.6 346.9 728.1 349.2 736.4 348.7 731.8 346.3ZM731.8 346.3 736.4 348.7 744.6 348.2 740.0 345.8ZM752.7 347.8 757.4 350.3 765.5 350.0 760.8 347.5ZM781.7 349.5 786.5 352.1 794.5 352.0 789.7 349.4ZM789.7 349.4 794.5 352.0 802.5 351.9 797.6 349.4ZM810.5 351.9 815.4 354.6 823.3 354.7 818.3 352.0ZM818.3 352.0 823.3 354.7 831.2 354.8 826.2 352.1ZM826.2 352.1 831.2 354.8 839.0 354.9 834.0 352.3ZM854.5 355.3 859.7 358.1 867.4 358.3 862.2 355.6ZM862.2 355.6 867.4 358.3 875.1 358.6 869.9 355.9ZM869.9 355.9 875.1 358.6 882.7 358.9 877.4 356.2ZM877.4 356.2 882.7 358.9 890.3 359.2 885.0 356.5ZM885.0 356.5 890.3 359.2 897.8 359.6 892.5 356.8Z"/>
<path fill="#434343" stroke="#434343" d="M301.1 429.5 302.9 431.0 312.0 427.2 310.1 425.6ZM310.1 425.6 312.0 427.2 321.0 423.3 319.1 421.8ZM319.1 421.8 321.0 423.3 330.1 419.4 328.1 418.0ZM328.1 418.0 330.1 419.4 339.1 415.6 337.0 414.2ZM337.0 414.2 339.1 415.6 348.0 411.9 346.0 410.4ZM365.9 404.4 368.1 405.9 377.0 402.2 374.7 400.8ZM374.7 400.8 377.0 402.2 385.9 398.6 383.6 397.2ZM383.6 397.2 385.9 398.6 394.8 395.1 392.4 393.7ZM403.6 391.5 406.1 393.0 414.9 389.5 412.4 388.1ZM412.4 388.1 414.9 389.5 423.7 386.2 421.2 384.7ZM432.5 382.8 435.2 384.3 444.0 381.0 441.3 379.6ZM441.3 379.6 444.0 381.0 452.8 377.9 450.0 376.4ZM461.5 374.8 464.4 376.3 473.1 373.2 470.2 371.7ZM470.2 371.7 473.1 373.2 481.9 370.3 478.9 368.8ZM490.6 367.4 493.6 369.0 502.3 366.2 499.2 364.7ZM511.0 363.5 514.2 365.1 522.9 362.5 519.7 360.9ZM531.5 360.0 534.8 361.7 543.5 359.3 540.2 357.6ZM540.2 357.6 543.5 359.3 552.2 356.9 548.8 355.3ZM560.8 354.7 564.3 356.5 572.9 354.4 569.4 352.6ZM581.5 352.3 585.1 354.2 593.7 352.2 590.1 350.4ZM602.3 350.4 606.0 352.3 614.6 350.6 610.8 348.7ZM623.1 349.0 627.0 351.0 635.6 349.5 631.6 347.5ZM644.0 348.1 648.1 350.2 656.6 348.9 652.5 346.8ZM665.0 347.7 669.2 349.8 677.6 348.7 673.4 346.6ZM673.4 346.6 677.6 348.7 686.0 347.7 681.8 345.6ZM694.4 346.8 698.7 349.1 707.1 348.2 702.7 346.0ZM715.4 347.5 719.8 349.9 728.1 349.2 723.6 346.9ZM744.6 348.2 749.2 350.7 757.4 350.3 752.7 347.8ZM765.5 350.0 770.3 352.5 778.4 352.3 773.6 349.7ZM773.6 349.7 778.4 352.3 786.5 352.1 781.7 349.5ZM794.5 352.0 799.4 354.7 807.5 354.6 802.5 351.9ZM802.5 351.9 807.5 354.6 815.4 354.6 810.5 351.9ZM831.2 354.8 836.3 357.6 844.2 357.7 839.0 354.9ZM839.0 354.9 844.2 357.7 852.0 357.9 846.8 355.1ZM846.8 355.1 852.0 357.9 859.7 358.1 854.5 355.3ZM890.3 359.2 895.6 362.1 903.1 362.4 897.8 359.6ZM897.8 359.6 903.1 362.4 910.6 362.8 905.2 359.9ZM905.2 359.9 910.6 362.8 918.1 363.1 912.7 360.2Z"/>
<path fill="#444444" stroke="#444444" d="M302.9 431.0 304.7 432.7 313.9 428.8 312.0 427.2ZM312.0 427.2 313.9 428.8 323.0 424.9 321.0 423.3ZM321.0 423.3 323.0 424.9 332.1 421.0 330.1 419.4ZM330.1 419.4 332.1 421.0 341.1 417.2 339.1 415.6ZM339.1 415.6 341.1 417.2 350.2 413.4 348.0 411.9ZM348.0 411.9 350.2 413.4 359.1 409.6 357.0 408.1ZM357.0 408.1 359.1 409.6 368.1 405.9 365.9 404.4ZM377.0 402.2 379.3 403.8 388.3 400.1 385.9 398.6ZM385.9 398.6 388.3 400.1 397.2 396.5 394.8 395.1ZM394.8 395.1 397.2 396.5 406.1 393.0 403.6 391.5ZM414.9 389.5 417.5 391.1 426.3 387.7 423.7 386.2ZM423.7 386.2 426.3 387.7 435.2 384.3 432.5 382.8ZM444.0 381.0 446.7 382.6 455.6 379.4 452.8 377.9ZM452.8 377.9 455.6 379.4 464.4 376.3 461.5 374.8ZM473.1 373.2 476.1 374.8 484.8 371.8 481.9 370.3ZM481.9 370.3 484.8 371.8 493.6 369.0 490.6 367.4ZM502.3 366.2 505.4 367.8 514.2 365.1 511.0 363.5ZM522.9 362.5 526.1 364.2 534.8 361.7 531.5 360.0ZM543.5 359.3 546.9 361.0 555.6 358.7 552.2 356.9ZM552.2 356.9 555.6 358.7 564.3 356.5 560.8 354.7ZM572.9 354.4 576.5 356.2 585.1 354.2 581.5 352.3ZM593.7 352.2 597.4 354.2 606.0 352.3 602.3 350.4ZM614.6 350.6 618.5 352.6 627.0 351.0 623.1 349.0ZM635.6 349.5 639.5 351.6 648.1 350.2 644.0 348.1ZM656.6 348.9 660.7 351.1 669.2 349.8 665.0 347.7ZM686.0 347.7 690.3 350.0 698.7 349.1 694.4 346.8ZM707.1 348.2 711.5 350.6 719.8 349.9 715.4 347.5ZM728.1 349.2 732.7 351.7 741.0 351.2 736.4 348.7ZM736.4 348.7 741.0 351.2 749.2 350.7 744.6 348.2ZM757.4 350.3 762.1 352.9 770.3 352.5 765.5 350.0ZM786.5 352.1 791.4 354.8 799.4 354.7 794.5 352.0ZM815.4 354.6 820.4 357.4 828.4 357.5 823.3 354.7ZM823.3 354.7 828.4 357.5 836.3 357.6 831.2 354.8ZM859.7 358.1 864.9 361.0 872.7 361.2 867.4 358.3ZM867.4 358.3 872.7 361.2 880.4 361.5 875.1 358.6ZM875.1 358.6 880.4 361.5 888.0 361.8 882.7 358.9ZM882.7 358.9 888.0 361.8 895.6 362.1 890.3 359.2Z"/>
<path fill="#454545" stroke="#454545" d="M341.1 417.2 343.2 418.8 352.3 415.0 350.2 413.4ZM350.2 413.4 352.3 415.0 361.3 411.2 359.1 409.6ZM359.1 409.6 361.3 411.2 370.3 407.5 368.1 405.9ZM368.1 405.9 370.3 407.5 379.3 403.8 377.0 402.2ZM397.2 396.5 399.6 398.1 408.6 394.6 406.1 393.0ZM406.1 393.0 408.6 394.6 417.5 391.1 414.9 389.5ZM426.3 387.7 429.0 389.3 437.9 385.9 435.2 384.3ZM435.2 384.3 437.9 385.9 446.7 382.6 444.0 381.0ZM455.6 379.4 458.4 381.0 467.2 377.9 464.4 376.3ZM464.4 376.3 467.2 377.9 476.1 374.8 473.1 373.2ZM484.8 371.8 487.9 373.5 496.7 370.6 493.6 369.0ZM493.6 369.0 496.7 370.6 505.4 367.8 502.3 366.2ZM514.2 365.1 517.4 366.8 526.1 364.2 522.9 362.5ZM534.8 361.7 538.2 363.5 546.9 361.0 543.5 359.3ZM555.6 358.7 559.1 360.6 567.8 358.3 564.3 356.5ZM564.3 356.5 567.8 358.3 576.5 356.2 572.9 354.4ZM585.1 354.2 588.8 356.1 597.4 354.2 593.7 352.2ZM606.0 352.3 609.9 354.4 618.5 352.6 614.6 350.6ZM627.0 351.0 631.0 353.1 639.5 351.6 635.6 349.5ZM648.1 350.2 652.2 352.4 660.7 351.1 656.6 348.9ZM669.2 349.8 673.4 352.2 681.9 351.0 677.6 348.7ZM677.6 348.7 681.9 351.0 690.3 350.0 686.0 347.7ZM698.7 349.1 703.1 351.5 711.5 350.6 707.1 348.2ZM719.8 349.9 724.3 352.4 732.7 351.7 728.1 349.2ZM749.2 350.7 753.9 353.3 762.1 352.9 757.4 350.3ZM770.3 352.5 775.1 355.3 783.3 355.0 778.4 352.3ZM778.4 352.3 783.3 355.0 791.4 354.8 786.5 352.1ZM799.4 354.7 804.4 357.5 812.4 357.4 807.5 354.6ZM807.5 354.6 812.4 357.4 820.4 357.4 815.4 354.6ZM836.3 357.6 841.4 360.5 849.3 360.6 844.2 357.7ZM844.2 357.7 849.3 360.6 857.2 360.8 852.0 357.9ZM852.0 357.9 857.2 360.8 864.9 361.0 859.7 358.1ZM888.0 361.8 893.4 364.8 901.0 365.1 895.6 362.1ZM895.6 362.1 901.0 365.1 908.6 365.4 903.1 362.4ZM903.1 362.4 908.6 365.4 916.1 365.7 910.6 362.8ZM910.6 362.8 916.1 365.7 923.6 366.1 918.1 363.1Z"/>
<path fill="#464646" stroke="#464646" d="M304.7 432.7 306.6 434.5 315.8 430.5 313.9 428.8ZM313.9 428.8 315.8 430.5 325.0 426.6 323.0 424.9ZM323.0 424.9 325.0 426.6 334.1 422.7 332.1 421.0ZM332.1 421.0 334.1 422.7 343.2 418.8 341.1 417.2ZM361.3 411.2 363.6 412.9 372.6 409.1 370.3 407.5ZM370.3 407.5 372.6 409.1 381.7 405.4 379.3 403.8ZM379.3 403.8 381.7 405.4 390.7 401.7 388.3 400.1ZM388.3 400.1 390.7 401.7 399.6 398.1 397.2 396.5ZM408.6 394.6 411.1 396.2 420.1 392.7 417.5 391.1ZM417.5 391.1 420.1 392.7 429.0 389.3 426.3 387.7ZM446.7 382.6 449.5 384.3 458.4 381.0 455.6 379.4ZM476.1 374.8 479.0 376.5 487.9 373.5 484.8 371.8ZM496.7 370.6 499.8 372.4 508.6 369.6 505.4 367.8ZM505.4 367.8 508.6 369.6 517.4 366.8 514.2 365.1ZM526.1 364.2 529.4 366.0 538.2 363.5 534.8 361.7ZM546.9 361.0 550.4 362.9 559.1 360.6 555.6 358.7ZM567.8 358.3 571.4 360.3 580.1 358.1 576.5 356.2ZM576.5 356.2 580.1 358.1 588.8 356.1 585.1 354.2ZM597.4 354.2 601.2 356.2 609.9 354.4 606.0 352.3ZM618.5 352.6 622.4 354.8 631.0 353.1 627.0 351.0ZM639.5 351.6 643.6 353.8 652.2 352.4 648.1 350.2ZM660.7 351.1 664.9 353.4 673.4 352.2 669.2 349.8ZM681.9 351.0 686.2 353.5 694.7 352.4 690.3 350.0ZM690.3 350.0 694.7 352.4 703.1 351.5 698.7 349.1ZM711.5 350.6 716.0 353.2 724.3 352.4 719.8 349.9ZM732.7 351.7 737.3 354.4 745.6 353.8 741.0 351.2ZM741.0 351.2 745.6 353.8 753.9 353.3 749.2 350.7ZM762.1 352.9 766.9 355.6 775.1 355.3 770.3 352.5ZM791.4 354.8 796.3 357.6 804.4 357.5 799.4 354.7ZM820.4 357.4 825.5 360.4 833.5 360.4 828.4 357.5ZM828.4 357.5 833.5 360.4 841.4 360.5 836.3 357.6ZM857.2 360.8 862.4 363.8 870.2 364.0 864.9 361.0ZM864.9 361.0 870.2 364.0 878.0 364.3 872.7 361.2ZM872.7 361.2 878.0 364.3 885.7 364.5 880.4 361.5ZM880.4 361.5 885.7 364.5 893.4 364.8 888.0 361.8Z"/>
<path fill="#474747" stroke="#474747" d="M306.6 434.5 308.5 436.3 317.8 432.3 315.8 430.5ZM315.8 430.5 317.8 432.3 327.0 428.4 325.0 426.6ZM325.0 426.6 327.0 428.4 336.2 424.5 334.1 422.7ZM334.1 422.7 336.2 424.5 345.4 420.6 343.2 418.8ZM343.2 418.8 345.4 420.6 354.5 416.7 352.3 415.0ZM352.3 415.0 354.5 416.7 363.6 412.9 361.3 411.2ZM381.7 405.4 384.1 407.1 393.1 403.4 390.7 401.7ZM390.7 401.7 393.1 403.4 402.1 399.8 399.6 398.1ZM399.6 398.1 402.1 399.8 411.1 396.2 408.6 394.6ZM429.0 389.3 431.7 391.0 440.6 387.6 437.9 385.9ZM437.9 385.9 440.6 387.6 449.5 384.3 446.7 382.6ZM458.4 381.0 461.3 382.8 470.2 379.6 467.2 377.9ZM467.2 377.9 470.2 379.6 479.0 376.5 476.1 374.8ZM487.9 373.5 490.9 375.3 499.8 372.4 496.7 370.6ZM508.6 369.6 511.8 371.4 520.6 368.7 517.4 366.8ZM517.4 366.8 520.6 368.7 529.4 366.0 526.1 364.2ZM538.2 363.5 541.6 365.4 550.4 362.9 546.9 361.0ZM559.1 360.6 562.7 362.6 571.4 360.3 567.8 358.3ZM580.1 358.1 583.8 360.2 592.5 358.2 588.8 356.1ZM588.8 356.1 592.5 358.2 601.2 356.2 597.4 354.2ZM609.9 354.4 613.7 356.5 622.4 354.8 618.5 352.6ZM631.0 353.1 635.0 355.4 643.6 353.8 639.5 351.6ZM652.2 352.4 656.3 354.7 664.9 353.4 660.7 351.1ZM673.4 352.2 677.7 354.6 686.2 353.5 681.9 351.0ZM703.1 351.5 707.5 354.0 716.0 353.2 711.5 350.6ZM724.3 352.4 728.9 355.0 737.3 354.4 732.7 351.7ZM745.6 353.8 750.3 356.5 758.6 356.0 753.9 353.3ZM753.9 353.3 758.6 356.0 766.9 355.6 762.1 352.9ZM775.1 355.3 780.0 358.1 788.2 357.8 783.3 355.0ZM783.3 355.0 788.2 357.8 796.3 357.6 791.4 354.8ZM804.4 357.5 809.4 360.5 817.5 360.4 812.4 357.4ZM812.4 357.4 817.5 360.4 825.5 360.4 820.4 357.4ZM841.4 360.5 846.6 363.5 854.6 363.7 849.3 360.6ZM849.3 360.6 854.6 363.7 862.4 363.8 857.2 360.8ZM885.7 364.5 891.1 367.7 898.8 367.9 893.4 364.8ZM893.4 364.8 898.8 367.9 906.4 368.2 901.0 365.1ZM901.0 365.1 906.4 368.2 914.0 368.5 908.6 365.4ZM908.6 365.4 914.0 368.5 921.6 368.9 916.1 365.7ZM916.1 365.7 921.6 368.9 929.1 369.2 923.6 366.1Z"/>
<path fill="#484848" stroke="#484848" d="M345.4 420.6 347.5 422.4 356.7 418.5 354.5 416.7ZM354.5 416.7 356.7 418.5 365.9 414.7 363.6 412.9ZM363.6 412.9 365.9 414.7 375.0 410.9 372.6 409.1ZM372.6 409.1 375.0 410.9 384.1 407.1 381.7 405.4ZM402.1 399.8 404.6 401.6 413.7 398.0 411.1 396.2ZM411.1 396.2 413.7 398.0 422.7 394.4 420.1 392.7ZM420.1 392.7 422.7 394.4 431.7 391.0 429.0 389.3ZM440.6 387.6 443.4 389.4 452.3 386.0 449.5 384.3ZM449.5 384.3 452.3 386.0 461.3 382.8 458.4 381.0ZM470.2 379.6 473.1 381.4 482.0 378.3 479.0 376.5ZM479.0 376.5 482.0 378.3 490.9 375.3 487.9 373.5ZM499.8 372.4 502.9 374.3 511.8 371.4 508.6 369.6ZM520.6 368.7 523.9 370.6 532.8 368.0 529.4 366.0ZM529.4 366.0 532.8 368.0 541.6 365.4 538.2 363.5ZM550.4 362.9 553.9 364.9 562.7 362.6 559.1 360.6ZM571.4 360.3 575.0 362.4 583.8 360.2 580.1 358.1ZM592.5 358.2 596.3 360.3 605.0 358.4 601.2 356.2ZM601.2 356.2 605.0 358.4 613.7 356.5 609.9 354.4ZM622.4 354.8 626.3 357.0 635.0 355.4 631.0 353.1ZM643.6 353.8 647.7 356.2 656.3 354.7 652.2 352.4ZM664.9 353.4 669.1 355.8 677.7 354.6 673.4 352.2ZM686.2 353.5 690.6 356.0 699.1 355.0 694.7 352.4ZM694.7 352.4 699.1 355.0 707.5 354.0 703.1 351.5ZM716.0 353.2 720.5 355.8 728.9 355.0 724.3 352.4ZM737.3 354.4 742.0 357.1 750.3 356.5 745.6 353.8ZM766.9 355.6 771.7 358.5 780.0 358.1 775.1 355.3ZM788.2 357.8 793.1 360.8 801.3 360.6 796.3 357.6ZM796.3 357.6 801.3 360.6 809.4 360.5 804.4 357.5ZM825.5 360.4 830.7 363.4 838.7 363.5 833.5 360.4ZM833.5 360.4 838.7 363.5 846.6 363.5 841.4 360.5ZM854.6 363.7 859.8 366.8 867.7 367.0 862.4 363.8ZM862.4 363.8 867.7 367.0 875.6 367.2 870.2 364.0ZM870.2 364.0 875.6 367.2 883.4 367.4 878.0 364.3ZM878.0 364.3 883.4 367.4 891.1 367.7 885.7 364.5Z"/>
<path fill="#494949" stroke="#494949" d="M308.5 436.3 310.5 438.3 319.8 434.3 317.8 432.3ZM317.8 432.3 319.8 434.3 329.1 430.3 327.0 428.4ZM327.0 428.4 329.1 430.3 338.3 426.4 336.2 424.5ZM336.2 424.5 338.3 426.4 347.5 422.4 345.4 420.6ZM375.0 410.9 377.3 412.8 386.5 409.0 384.1 407.1ZM384.1 407.1 386.5 409.0 395.6 405.3 393.1 403.4ZM393.1 403.4 395.6 405.3 404.6 401.6 402.1 399.8ZM422.7 394.4 425.4 396.3 434.4 392.8 431.7 391.0ZM431.7 391.0 434.4 392.8 443.4 389.4 440.6 387.6ZM452.3 386.0 455.2 387.9 464.2 384.6 461.3 382.8ZM461.3 382.8 464.2 384.6 473.1 381.4 470.2 379.6ZM482.0 378.3 485.1 380.3 494.0 377.2 490.9 375.3ZM490.9 375.3 494.0 377.2 502.9 374.3 499.8 372.4ZM511.8 371.4 515.1 373.4 523.9 370.6 520.6 368.7ZM541.6 365.4 545.1 367.4 553.9 364.9 550.4 362.9ZM562.7 362.6 566.3 364.7 575.0 362.4 571.4 360.3ZM583.8 360.2 587.5 362.4 596.3 360.3 592.5 358.2ZM613.7 356.5 617.6 358.8 626.3 357.0 622.4 354.8ZM635.0 355.4 639.0 357.7 647.7 356.2 643.6 353.8ZM656.3 354.7 660.5 357.2 669.1 355.8 664.9 353.4ZM677.7 354.6 682.0 357.2 690.6 356.0 686.2 353.5ZM699.1 355.0 703.5 357.6 712.0 356.7 707.5 354.0ZM707.5 354.0 712.0 356.7 720.5 355.8 716.0 353.2ZM728.9 355.0 733.5 357.8 742.0 357.1 737.3 354.4ZM750.3 356.5 755.1 359.4 763.4 358.9 758.6 356.0ZM758.6 356.0 763.4 358.9 771.7 358.5 766.9 355.6ZM780.0 358.1 784.9 361.1 793.1 360.8 788.2 357.8ZM809.4 360.5 814.5 363.5 822.6 363.5 817.5 360.4ZM817.5 360.4 822.6 363.5 830.7 363.4 825.5 360.4ZM838.7 363.5 843.9 366.7 851.9 366.7 846.6 363.5ZM846.6 363.5 851.9 366.7 859.8 366.8 854.6 363.7ZM883.4 367.4 888.8 370.7 896.6 370.9 891.1 367.7ZM891.1 367.7 896.6 370.9 904.3 371.2 898.8 367.9ZM898.8 367.9 904.3 371.2 912.0 371.5 906.4 368.2ZM906.4 368.2 912.0 371.5 919.6 371.8 914.0 368.5ZM914.0 368.5 919.6 371.8 927.2 372.1 921.6 368.9ZM921.6 368.9 927.2 372.1 934.7 372.4 929.1 369.2Z"/>
<path fill="#4a4a4a" stroke="#4a4a4a" d="M310.5 438.3 312.5 440.4 321.8 436.3 319.8 434.3ZM319.8 434.3 321.8 436.3 331.2 432.3 329.1 430.3ZM329.1 430.3 331.2 432.3 340.5 428.3 338.3 426.4ZM338.3 426.4 340.5 428.3 349.7 424.4 347.5 422.4ZM347.5 422.4 349.7 424.4 359.0 420.5 356.7 418.5ZM356.7 418.5 359.0 420.5 368.2 416.6 365.9 414.7ZM365.9 414.7 368.2 416.6 377.3 412.8 375.0 410.9ZM395.6 405.3 398.1 407.2 407.2 403.5 404.6 401.6ZM404.6 401.6 407.2 403.5 416.3 399.9 413.7 398.0ZM413.7 398.0 416.3 399.9 425.4 396.3 422.7 394.4ZM434.4 392.8 437.2 394.7 446.2 391.3 443.4 389.4ZM443.4 389.4 446.2 391.3 455.2 387.9 452.3 386.0ZM473.1 381.4 476.1 383.4 485.1 380.3 482.0 378.3ZM502.9 374.3 506.2 376.3 515.1 373.4 511.8 371.4ZM523.9 370.6 527.3 372.7 536.2 370.0 532.8 368.0ZM532.8 368.0 536.2 370.0 545.1 367.4 541.6 365.4ZM553.9 364.9 557.4 367.1 566.3 364.7 562.7 362.6ZM575.0 362.4 578.7 364.6 587.5 362.4 583.8 360.2ZM596.3 360.3 600.1 362.7 608.9 360.7 605.0 358.4ZM605.0 358.4 608.9 360.7 617.6 358.8 613.7 356.5ZM626.3 357.0 630.3 359.4 639.0 357.7 635.0 355.4ZM647.7 356.2 651.8 358.7 660.5 357.2 656.3 354.7ZM669.1 355.8 673.4 358.4 682.0 357.2 677.7 354.6ZM690.6 356.0 695.0 358.7 703.5 357.6 699.1 355.0ZM720.5 355.8 725.1 358.6 733.5 357.8 728.9 355.0ZM742.0 357.1 746.7 360.0 755.1 359.4 750.3 356.5ZM763.4 358.9 768.3 361.9 776.6 361.5 771.7 358.5ZM771.7 358.5 776.6 361.5 784.9 361.1 780.0 358.1ZM793.1 360.8 798.1 363.9 806.3 363.7 801.3 360.6ZM801.3 360.6 806.3 363.7 814.5 363.5 809.4 360.5ZM822.6 363.5 827.8 366.7 835.9 366.6 830.7 363.4ZM830.7 363.4 835.9 366.6 843.9 366.7 838.7 363.5ZM859.8 366.8 865.2 370.1 873.1 370.3 867.7 367.0ZM867.7 367.0 873.1 370.3 881.0 370.5 875.6 367.2ZM875.6 367.2 881.0 370.5 888.8 370.7 883.4 367.4ZM919.6 371.8 925.2 375.2 932.8 375.5 927.2 372.1ZM927.2 372.1 932.8 375.5 940.3 375.8 934.7 372.4Z"/>
<path fill="#4b4b4b" stroke="#4b4b4b" d="M359.0 420.5 361.3 422.5 370.5 418.6 368.2 416.6ZM368.2 416.6 370.5 418.6 379.8 414.7 377.3 412.8ZM377.3 412.8 379.8 414.7 388.9 410.9 386.5 409.0ZM386.5 409.0 388.9 410.9 398.1 407.2 395.6 405.3ZM416.3 399.9 419.0 401.8 428.1 398.3 425.4 396.3ZM425.4 396.3 428.1 398.3 437.2 394.7 434.4 392.8ZM455.2 387.9 458.1 389.9 467.2 386.6 464.2 384.6ZM464.2 384.6 467.2 386.6 476.1 383.4 473.1 381.4ZM485.1 380.3 488.2 382.3 497.2 379.2 494.0 377.2ZM494.0 377.2 497.2 379.2 506.2 376.3 502.9 374.3ZM515.1 373.4 518.4 375.5 527.3 372.7 523.9 370.6ZM536.2 370.0 539.6 372.2 548.6 369.6 545.1 367.4ZM545.1 367.4 548.6 369.6 557.4 367.1 553.9 364.9ZM566.3 364.7 569.9 366.9 578.7 364.6 575.0 362.4ZM587.5 362.4 591.3 364.8 600.1 362.7 596.3 360.3ZM608.9 360.7 612.8 363.1 621.6 361.2 617.6 358.8ZM617.6 358.8 621.6 361.2 630.3 359.4 626.3 357.0ZM639.0 357.7 643.1 360.2 651.8 358.7 647.7 356.2ZM660.5 357.2 664.7 359.8 673.4 358.4 669.1 355.8ZM682.0 357.2 686.4 359.9 695.0 358.7 690.6 356.0ZM703.5 357.6 708.0 360.5 716.6 359.5 712.0 356.7ZM712.0 356.7 716.6 359.5 725.1 358.6 720.5 355.8ZM733.5 357.8 738.2 360.7 746.7 360.0 742.0 357.1ZM755.1 359.4 759.9 362.4 768.3 361.9 763.4 358.9ZM784.9 361.1 789.9 364.2 798.1 363.9 793.1 360.8ZM806.3 363.7 811.4 366.9 819.6 366.8 814.5 363.5ZM814.5 363.5 819.6 366.8 827.8 366.7 822.6 363.5ZM843.9 366.7 849.2 370.0 857.2 370.0 851.9 366.7ZM851.9 366.7 857.2 370.0 865.2 370.1 859.8 366.8ZM881.0 370.5 886.5 373.9 894.3 374.1 888.8 370.7ZM888.8 370.7 894.3 374.1 902.1 374.3 896.6 370.9ZM896.6 370.9 902.1 374.3 909.8 374.6 904.3 371.2ZM904.3 371.2 909.8 374.6 917.5 374.9 912.0 371.5ZM912.0 371.5 917.5 374.9 925.2 375.2 919.6 371.8Z"/>
<path fill="#4c4c4c" stroke="#4c4c4c" d="M312.5 440.4 314.5 442.5 323.9 438.5 321.8 436.3ZM321.8 436.3 323.9 438.5 333.3 434.4 331.2 432.3ZM331.2 432.3 333.3 434.4 342.7 430.4 340.5 428.3ZM340.5 428.3 342.7 430.4 352.0 426.5 349.7 424.4ZM349.7 424.4 352.0 426.5 361.3 422.5 359.0 420.5ZM388.9 410.9 391.5 413.0 400.7 409.2 398.1 407.2ZM398.1 407.2 400.7 409.2 409.8 405.5 407.2 403.5ZM407.2 403.5 409.8 405.5 419.0 401.8 416.3 399.9ZM437.2 394.7 440.0 396.8 449.1 393.3 446.2 391.3ZM446.2 391.3 449.1 393.3 458.1 389.9 455.2 387.9ZM467.2 386.6 470.2 388.7 479.2 385.5 476.1 383.4ZM476.1 383.4 479.2 385.5 488.2 382.3 485.1 380.3ZM497.2 379.2 500.4 381.4 509.4 378.4 506.2 376.3ZM506.2 376.3 509.4 378.4 518.4 375.5 515.1 373.4ZM527.3 372.7 530.7 374.9 539.6 372.2 536.2 370.0ZM557.4 367.1 561.0 369.3 569.9 366.9 566.3 364.7ZM578.7 364.6 582.5 367.0 591.3 364.8 587.5 362.4ZM600.1 362.7 604.0 365.1 612.8 363.1 608.9 360.7ZM630.3 359.4 634.4 361.9 643.1 360.2 639.0 357.7ZM651.8 358.7 656.0 361.3 664.7 359.8 660.5 357.2ZM673.4 358.4 677.7 361.2 686.4 359.9 682.0 357.2ZM695.0 358.7 699.5 361.5 708.0 360.5 703.5 357.6ZM716.6 359.5 721.2 362.4 729.7 361.5 725.1 358.6ZM725.1 358.6 729.7 361.5 738.2 360.7 733.5 357.8ZM746.7 360.0 751.5 363.1 759.9 362.4 755.1 359.4ZM768.3 361.9 773.2 365.1 781.5 364.6 776.6 361.5ZM776.6 361.5 781.5 364.6 789.9 364.2 784.9 361.1ZM798.1 363.9 803.2 367.2 811.4 366.9 806.3 363.7ZM827.8 366.7 833.0 370.0 841.1 370.0 835.9 366.6ZM835.9 366.6 841.1 370.0 849.2 370.0 843.9 366.7ZM857.2 370.0 862.6 373.5 870.6 373.6 865.2 370.1ZM865.2 370.1 870.6 373.6 878.6 373.7 873.1 370.3ZM873.1 370.3 878.6 373.7 886.5 373.9 881.0 370.5ZM909.8 374.6 915.4 378.1 923.2 378.4 917.5 374.9ZM917.5 374.9 923.2 378.4 930.8 378.7 925.2 375.2ZM925.2 375.2 930.8 378.7 938.5 379.0 932.8 375.5ZM932.8 375.5 938.5 379.0 946.0 379.3 940.3 375.8Z"/>
<path fill="#4d4d4d" stroke="#4d4d4d" d="M342.7 430.4 344.9 432.7 354.3 428.6 352.0 426.5ZM352.0 426.5 354.3 428.6 363.6 424.7 361.3 422.5ZM361.3 422.5 363.6 424.7 372.9 420.7 370.5 418.6ZM370.5 418.6 372.9 420.7 382.2 416.8 379.8 414.7ZM379.8 414.7 382.2 416.8 391.5 413.0 388.9 410.9ZM409.8 405.5 412.5 407.6 421.7 403.9 419.0 401.8ZM419.0 401.8 421.7 403.9 430.8 400.3 428.1 398.3ZM428.1 398.3 430.8 400.3 440.0 396.8 437.2 394.7ZM449.1 393.3 452.0 395.5 461.1 392.0 458.1 389.9ZM458.1 389.9 461.1 392.0 470.2 388.7 467.2 386.6ZM488.2 382.3 491.4 384.5 500.4 381.4 497.2 379.2ZM518.4 375.5 521.7 377.7 530.7 374.9 527.3 372.7ZM539.6 372.2 543.1 374.5 552.1 371.9 548.6 369.6ZM548.6 369.6 552.1 371.9 561.0 369.3 557.4 367.1ZM569.9 366.9 573.6 369.3 582.5 367.0 578.7 364.6ZM591.3 364.8 595.2 367.2 604.0 365.1 600.1 362.7ZM612.8 363.1 616.8 365.6 625.6 363.7 621.6 361.2ZM621.6 361.2 625.6 363.7 634.4 361.9 630.3 359.4ZM643.1 360.2 647.3 362.9 656.0 361.3 651.8 358.7ZM664.7 359.8 669.0 362.6 677.7 361.2 673.4 358.4ZM686.4 359.9 690.8 362.7 699.5 361.5 695.0 358.7ZM708.0 360.5 712.6 363.4 721.2 362.4 716.6 359.5ZM738.2 360.7 743.0 363.8 751.5 363.1 746.7 360.0ZM759.9 362.4 764.8 365.6 773.2 365.1 768.3 361.9ZM781.5 364.6 786.6 367.9 794.9 367.5 789.9 364.2ZM789.9 364.2 794.9 367.5 803.2 367.2 798.1 363.9ZM811.4 366.9 816.6 370.3 824.8 370.1 819.6 366.8ZM819.6 366.8 824.8 370.1 833.0 370.0 827.8 366.7ZM841.1 370.0 846.5 373.5 854.6 373.4 849.2 370.0ZM849.2 370.0 854.6 373.4 862.6 373.5 857.2 370.0ZM878.6 373.7 884.1 377.3 892.0 377.5 886.5 373.9ZM886.5 373.9 892.0 377.5 899.9 377.7 894.3 374.1ZM894.3 374.1 899.9 377.7 907.7 377.9 902.1 374.3ZM902.1 374.3 907.7 377.9 915.4 378.1 909.8 374.6Z"/>
<path fill="#4e4e4e" stroke="#4e4e4e" d="M314.5 442.5 316.5 444.9 326.0 440.8 323.9 438.5ZM323.9 438.5 326.0 440.8 335.5 436.7 333.3 434.4ZM333.3 434.4 335.5 436.7 344.9 432.7 342.7 430.4ZM382.2 416.8 384.7 419.1 394.0 415.2 391.5 413.0ZM391.5 413.0 394.0 415.2 403.3 411.4 400.7 409.2ZM400.7 409.2 403.3 411.4 412.5 407.6 409.8 405.5ZM430.8 400.3 433.7 402.5 442.8 399.0 440.0 396.8ZM440.0 396.8 442.8 399.0 452.0 395.5 449.1 393.3ZM470.2 388.7 473.2 390.9 482.3 387.6 479.2 385.5ZM479.2 385.5 482.3 387.6 491.4 384.5 488.2 382.3ZM500.4 381.4 503.7 383.6 512.7 380.6 509.4 378.4ZM509.4 378.4 512.7 380.6 521.7 377.7 518.4 375.5ZM530.7 374.9 534.2 377.2 543.1 374.5 539.6 372.2ZM552.1 371.9 555.7 374.3 564.7 371.7 561.0 369.3ZM561.0 369.3 564.7 371.7 573.6 369.3 569.9 366.9ZM582.5 367.0 586.3 369.4 595.2 367.2 591.3 364.8ZM604.0 365.1 608.0 367.7 616.8 365.6 612.8 363.1ZM625.6 363.7 629.7 366.4 638.5 364.6 634.4 361.9ZM634.4 361.9 638.5 364.6 647.3 362.9 643.1 360.2ZM656.0 361.3 660.3 364.0 669.0 362.6 664.7 359.8ZM677.7 361.2 682.1 364.0 690.8 362.7 686.4 359.9ZM699.5 361.5 704.0 364.5 712.6 363.4 708.0 360.5ZM721.2 362.4 725.9 365.5 734.5 364.6 729.7 361.5ZM729.7 361.5 734.5 364.6 743.0 363.8 738.2 360.7ZM751.5 363.1 756.3 366.2 764.8 365.6 759.9 362.4ZM773.2 365.1 778.2 368.3 786.6 367.9 781.5 364.6ZM803.2 367.2 808.3 370.6 816.6 370.3 811.4 366.9ZM824.8 370.1 830.1 373.6 838.3 373.5 833.0 370.0ZM833.0 370.0 838.3 373.5 846.5 373.5 841.1 370.0ZM862.6 373.5 868.0 377.1 876.1 377.2 870.6 373.6ZM870.6 373.6 876.1 377.2 884.1 377.3 878.6 373.7ZM899.9 377.7 905.5 381.3 913.3 381.6 907.7 377.9ZM907.7 377.9 913.3 381.6 921.1 381.8 915.4 378.1ZM915.4 378.1 921.1 381.8 928.9 382.1 923.2 378.4ZM923.2 378.4 928.9 382.1 936.6 382.3 930.8 378.7ZM930.8 378.7 936.6 382.3 944.2 382.6 938.5 379.0ZM938.5 379.0 944.2 382.6 951.8 382.9 946.0 379.3Z"/>
<path fill="#4f4f4f" stroke="#4f4f4f" d="M316.5 444.9 318.7 447.3 328.2 443.2 326.0 440.8ZM326.0 440.8 328.2 443.2 337.7 439.1 335.5 436.7ZM335.5 436.7 337.7 439.1 347.2 435.0 344.9 432.7ZM344.9 432.7 347.2 435.0 356.6 430.9 354.3 428.6ZM354.3 428.6 356.6 430.9 366.0 426.9 363.6 424.7ZM363.6 424.7 366.0 426.9 375.4 423.0 372.9 420.7ZM372.9 420.7 375.4 423.0 384.7 419.1 382.2 416.8ZM412.5 407.6 415.2 409.9 424.4 406.2 421.7 403.9ZM421.7 403.9 424.4 406.2 433.7 402.5 430.8 400.3ZM452.0 395.5 454.9 397.7 464.1 394.3 461.1 392.0ZM461.1 392.0 464.1 394.3 473.2 390.9 470.2 388.7ZM482.3 387.6 485.5 390.0 494.6 386.8 491.4 384.5ZM491.4 384.5 494.6 386.8 503.7 383.6 500.4 381.4ZM512.7 380.6 516.1 383.0 525.1 380.1 521.7 377.7ZM521.7 377.7 525.1 380.1 534.2 377.2 530.7 374.9ZM543.1 374.5 546.7 376.9 555.7 374.3 552.1 371.9ZM573.6 369.3 577.3 371.8 586.3 369.4 582.5 367.0ZM595.2 367.2 599.1 369.8 608.0 367.7 604.0 365.1ZM616.8 365.6 620.8 368.3 629.7 366.4 625.6 363.7ZM647.3 362.9 651.5 365.7 660.3 364.0 656.0 361.3ZM669.0 362.6 673.4 365.4 682.1 364.0 677.7 361.2ZM690.8 362.7 695.3 365.7 704.0 364.5 699.5 361.5ZM712.6 363.4 717.3 366.5 725.9 365.5 721.2 362.4ZM734.5 364.6 739.2 367.8 747.8 367.0 743.0 363.8ZM743.0 363.8 747.8 367.0 756.3 366.2 751.5 363.1ZM764.8 365.6 769.7 368.9 778.2 368.3 773.2 365.1ZM786.6 367.9 791.6 371.3 800.0 370.9 794.9 367.5ZM794.9 367.5 800.0 370.9 808.3 370.6 803.2 367.2ZM816.6 370.3 821.8 373.8 830.1 373.6 824.8 370.1ZM846.5 373.5 851.8 377.1 860.0 377.1 854.6 373.4ZM854.6 373.4 860.0 377.1 868.0 377.1 862.6 373.5ZM876.1 377.2 881.6 380.9 889.6 381.0 884.1 377.3ZM884.1 377.3 889.6 381.0 897.6 381.2 892.0 377.5ZM892.0 377.5 897.6 381.2 905.5 381.3 899.9 377.7ZM928.9 382.1 934.6 385.8 942.3 386.1 936.6 382.3ZM936.6 382.3 942.3 386.1 950.0 386.4 944.2 382.6ZM944.2 382.6 950.0 386.4 957.6 386.6 951.8 382.9Z"/>
<path fill="#505050" stroke="#505050" d="M375.4 423.0 377.9 425.4 387.3 421.4 384.7 419.1ZM384.7 419.1 387.3 421.4 396.6 417.5 394.0 415.2ZM394.0 415.2 396.6 417.5 405.9 413.7 403.3 411.4ZM403.3 411.4 405.9 413.7 415.2 409.9 412.5 407.6ZM433.7 402.5 436.5 404.9 445.7 401.2 442.8 399.0ZM442.8 399.0 445.7 401.2 454.9 397.7 452.0 395.5ZM473.2 390.9 476.3 393.3 485.5 390.0 482.3 387.6ZM503.7 383.6 507.0 386.0 516.1 383.0 512.7 380.6ZM534.2 377.2 537.7 379.7 546.7 376.9 543.1 374.5ZM555.7 374.3 559.4 376.8 568.4 374.2 564.7 371.7ZM564.7 371.7 568.4 374.2 577.3 371.8 573.6 369.3ZM586.3 369.4 590.1 372.1 599.1 369.8 595.2 367.2ZM608.0 367.7 611.9 370.4 620.8 368.3 616.8 365.6ZM629.7 366.4 633.8 369.2 642.7 367.4 638.5 364.6ZM638.5 364.6 642.7 367.4 651.5 365.7 647.3 362.9ZM660.3 364.0 664.6 366.9 673.4 365.4 669.0 362.6ZM682.1 364.0 686.6 367.0 695.3 365.7 690.8 362.7ZM704.0 364.5 708.6 367.6 717.3 366.5 712.6 363.4ZM725.9 365.5 730.6 368.7 739.2 367.8 734.5 364.6ZM747.8 367.0 752.7 370.3 761.2 369.6 756.3 366.2ZM756.3 366.2 761.2 369.6 769.7 368.9 764.8 365.6ZM778.2 368.3 783.2 371.8 791.6 371.3 786.6 367.9ZM800.0 370.9 805.2 374.4 813.5 374.1 808.3 370.6ZM808.3 370.6 813.5 374.1 821.8 373.8 816.6 370.3ZM830.1 373.6 835.4 377.3 843.6 377.1 838.3 373.5ZM838.3 373.5 843.6 377.1 851.8 377.1 846.5 373.5ZM860.0 377.1 865.4 380.8 873.5 380.8 868.0 377.1ZM868.0 377.1 873.5 380.8 881.6 380.9 876.1 377.2ZM897.6 381.2 903.2 385.0 911.1 385.2 905.5 381.3ZM905.5 381.3 911.1 385.2 919.0 385.4 913.3 381.6ZM913.3 381.6 919.0 385.4 926.8 385.6 921.1 381.8ZM921.1 381.8 926.8 385.6 934.6 385.8 928.9 382.1Z"/>
<path fill="#515151" stroke="#515151" d="M318.7 447.3 320.8 449.8 330.4 445.7 328.2 443.2ZM328.2 443.2 330.4 445.7 340.0 441.6 337.7 439.1ZM337.7 439.1 340.0 441.6 349.5 437.5 347.2 435.0ZM347.2 435.0 349.5 437.5 359.0 433.4 356.6 430.9ZM356.6 430.9 359.0 433.4 368.5 429.3 366.0 426.9ZM366.0 426.9 368.5 429.3 377.9 425.4 375.4 423.0ZM405.9 413.7 408.6 416.1 417.9 412.3 415.2 409.9ZM415.2 409.9 417.9 412.3 427.2 408.5 424.4 406.2ZM424.4 406.2 427.2 408.5 436.5 404.9 433.7 402.5ZM454.9 397.7 457.9 400.1 467.2 396.6 464.1 394.3ZM464.1 394.3 467.2 396.6 476.3 393.3 473.2 390.9ZM485.5 390.0 488.7 392.4 497.9 389.2 494.6 386.8ZM494.6 386.8 497.9 389.2 507.0 386.0 503.7 383.6ZM516.1 383.0 519.5 385.5 528.6 382.5 525.1 380.1ZM525.1 380.1 528.6 382.5 537.7 379.7 534.2 377.2ZM546.7 376.9 550.3 379.5 559.4 376.8 555.7 374.3ZM577.3 371.8 581.1 374.4 590.1 372.1 586.3 369.4ZM599.1 369.8 603.0 372.5 611.9 370.4 608.0 367.7ZM620.8 368.3 624.9 371.2 633.8 369.2 629.7 366.4ZM642.7 367.4 646.9 370.3 655.8 368.6 651.5 365.7ZM651.5 365.7 655.8 368.6 664.6 366.9 660.3 364.0ZM673.4 365.4 677.8 368.4 686.6 367.0 682.1 364.0ZM695.3 365.7 699.9 368.8 708.6 367.6 704.0 364.5ZM717.3 366.5 721.9 369.7 730.6 368.7 725.9 365.5ZM739.2 367.8 744.0 371.1 752.7 370.3 747.8 367.0ZM761.2 369.6 766.2 373.0 774.7 372.3 769.7 368.9ZM769.7 368.9 774.7 372.3 783.2 371.8 778.2 368.3ZM791.6 371.3 796.7 374.8 805.2 374.4 800.0 370.9ZM813.5 374.1 818.8 377.8 827.1 377.5 821.8 373.8ZM821.8 373.8 827.1 377.5 835.4 377.3 830.1 373.6ZM843.6 377.1 849.1 380.9 857.3 380.8 851.8 377.1ZM851.8 377.1 857.3 380.8 865.4 380.8 860.0 377.1ZM873.5 380.8 879.1 384.7 887.2 384.7 881.6 380.9ZM881.6 380.9 887.2 384.7 895.2 384.8 889.6 381.0ZM889.6 381.0 895.2 384.8 903.2 385.0 897.6 381.2ZM919.0 385.4 924.8 389.3 932.6 389.5 926.8 385.6ZM926.8 385.6 932.6 389.5 940.4 389.7 934.6 385.8ZM934.6 385.8 940.4 389.7 948.2 390.0 942.3 386.1ZM942.3 386.1 948.2 390.0 955.9 390.2 950.0 386.4ZM950.0 386.4 955.9 390.2 963.5 390.5 957.6 386.6Z"/>
<path fill="#525252" stroke="#525252" d="M368.5 429.3 370.9 431.9 380.4 427.9 377.9 425.4ZM377.9 425.4 380.4 427.9 389.8 423.9 387.3 421.4ZM387.3 421.4 389.8 423.9 399.2 419.9 396.6 417.5ZM396.6 417.5 399.2 419.9 408.6 416.1 405.9 413.7ZM427.2 408.5 430.1 411.0 439.4 407.3 436.5 404.9ZM436.5 404.9 439.4 407.3 448.7 403.7 445.7 401.2ZM445.7 401.2 448.7 403.7 457.9 400.1 454.9 397.7ZM467.2 396.6 470.3 399.1 479.5 395.7 476.3 393.3ZM476.3 393.3 479.5 395.7 488.7 392.4 485.5 390.0ZM507.0 386.0 510.3 388.6 519.5 385.5 516.1 383.0ZM537.7 379.7 541.2 382.3 550.3 379.5 546.7 376.9ZM559.4 376.8 563.1 379.5 572.1 376.9 568.4 374.2ZM568.4 374.2 572.1 376.9 581.1 374.4 577.3 371.8ZM590.1 372.1 594.0 374.8 603.0 372.5 599.1 369.8ZM611.9 370.4 616.0 373.2 624.9 371.2 620.8 368.3ZM633.8 369.2 638.0 372.2 646.9 370.3 642.7 367.4ZM655.8 368.6 660.1 371.6 669.0 370.0 664.6 366.9ZM664.6 366.9 669.0 370.0 677.8 368.4 673.4 365.4ZM686.6 367.0 691.1 370.2 699.9 368.8 695.3 365.7ZM708.6 367.6 713.2 370.9 721.9 369.7 717.3 366.5ZM730.6 368.7 735.4 372.1 744.0 371.1 739.2 367.8ZM752.7 370.3 757.6 373.8 766.2 373.0 761.2 369.6ZM774.7 372.3 779.8 375.9 788.3 375.3 783.2 371.8ZM783.2 371.8 788.3 375.3 796.7 374.8 791.6 371.3ZM805.2 374.4 810.4 378.1 818.8 377.8 813.5 374.1ZM827.1 377.5 832.5 381.3 840.8 381.0 835.4 377.3ZM835.4 377.3 840.8 381.0 849.1 380.9 843.6 377.1ZM857.3 380.8 862.8 384.7 871.0 384.7 865.4 380.8ZM865.4 380.8 871.0 384.7 879.1 384.7 873.5 380.8ZM895.2 384.8 900.9 388.8 908.9 388.9 903.2 385.0ZM903.2 385.0 908.9 388.9 916.9 389.1 911.1 385.2ZM911.1 385.2 916.9 389.1 924.8 389.3 919.0 385.4ZM948.2 390.0 954.1 394.0 961.8 394.3 955.9 390.2ZM955.9 390.2 961.8 394.3 969.5 394.5 963.5 390.5Z"/>
<path fill="#535353" stroke="#535353" d="M320.8 449.8 323.0 452.5 332.7 448.4 330.4 445.7ZM330.4 445.7 332.7 448.4 342.3 444.2 340.0 441.6ZM340.0 441.6 342.3 444.2 351.9 440.1 349.5 437.5ZM349.5 437.5 351.9 440.1 361.4 435.9 359.0 433.4ZM359.0 433.4 361.4 435.9 370.9 431.9 368.5 429.3ZM408.6 416.1 411.4 418.6 420.7 414.8 417.9 412.3ZM417.9 412.3 420.7 414.8 430.1 411.0 427.2 408.5ZM448.7 403.7 451.7 406.2 461.0 402.6 457.9 400.1ZM457.9 400.1 461.0 402.6 470.3 399.1 467.2 396.6ZM488.7 392.4 492.0 395.0 501.2 391.7 497.9 389.2ZM497.9 389.2 501.2 391.7 510.3 388.6 507.0 386.0ZM519.5 385.5 523.0 388.1 532.1 385.2 528.6 382.5ZM528.6 382.5 532.1 385.2 541.2 382.3 537.7 379.7ZM550.3 379.5 554.0 382.2 563.1 379.5 559.4 376.8ZM572.1 376.9 575.9 379.7 585.0 377.2 581.1 374.4ZM581.1 374.4 585.0 377.2 594.0 374.8 590.1 372.1ZM603.0 372.5 607.0 375.4 616.0 373.2 611.9 370.4ZM624.9 371.2 629.1 374.1 638.0 372.2 633.8 369.2ZM646.9 370.3 651.2 373.4 660.1 371.6 655.8 368.6ZM677.8 368.4 682.3 371.6 691.1 370.2 686.6 367.0ZM699.9 368.8 704.5 372.1 713.2 370.9 708.6 367.6ZM721.9 369.7 726.7 373.1 735.4 372.1 730.6 368.7ZM744.0 371.1 748.9 374.6 757.6 373.8 752.7 370.3ZM766.2 373.0 771.2 376.6 779.8 375.9 774.7 372.3ZM788.3 375.3 793.4 379.0 801.9 378.5 796.7 374.8ZM796.7 374.8 801.9 378.5 810.4 378.1 805.2 374.4ZM818.8 377.8 824.1 381.6 832.5 381.3 827.1 377.5ZM840.8 381.0 846.2 385.0 854.5 384.8 849.1 380.9ZM849.1 380.9 854.5 384.8 862.8 384.7 857.3 380.8ZM871.0 384.7 876.6 388.7 884.7 388.7 879.1 384.7ZM879.1 384.7 884.7 388.7 892.9 388.7 887.2 384.7ZM887.2 384.7 892.9 388.7 900.9 388.8 895.2 384.8ZM908.9 388.9 914.7 393.0 922.7 393.2 916.9 389.1ZM916.9 389.1 922.7 393.2 930.6 393.4 924.8 389.3ZM924.8 389.3 930.6 393.4 938.5 393.6 932.6 389.5ZM932.6 389.5 938.5 393.6 946.3 393.8 940.4 389.7ZM940.4 389.7 946.3 393.8 954.1 394.0 948.2 390.0Z"/>
<path fill="#545454" stroke="#545454" d="M361.4 435.9 363.9 438.6 373.5 434.5 370.9 431.9ZM370.9 431.9 373.5 434.5 383.0 430.5 380.4 427.9ZM380.4 427.9 383.0 430.5 392.5 426.5 389.8 423.9ZM389.8 423.9 392.5 426.5 401.9 422.5 399.2 419.9ZM399.2 419.9 401.9 422.5 411.4 418.6 408.6 416.1ZM430.1 411.0 433.0 413.6 442.4 409.9 439.4 407.3ZM439.4 407.3 442.4 409.9 451.7 406.2 448.7 403.7ZM470.3 399.1 473.4 401.8 482.7 398.3 479.5 395.7ZM479.5 395.7 482.7 398.3 492.0 395.0 488.7 392.4ZM510.3 388.6 513.8 391.2 523.0 388.1 519.5 385.5ZM532.1 385.2 535.7 387.9 544.8 385.0 541.2 382.3ZM541.2 382.3 544.8 385.0 554.0 382.2 550.3 379.5ZM563.1 379.5 566.8 382.3 575.9 379.7 572.1 376.9ZM594.0 374.8 598.0 377.7 607.0 375.4 603.0 372.5ZM616.0 373.2 620.1 376.2 629.1 374.1 624.9 371.2ZM638.0 372.2 642.3 375.3 651.2 373.4 646.9 370.3ZM660.1 371.6 664.5 374.8 673.4 373.2 669.0 370.0ZM669.0 370.0 673.4 373.2 682.3 371.6 677.8 368.4ZM682.3 371.6 686.8 374.9 695.7 373.4 691.1 370.2ZM691.1 370.2 695.7 373.4 704.5 372.1 699.9 368.8ZM713.2 370.9 717.9 374.3 726.7 373.1 721.9 369.7ZM735.4 372.1 740.2 375.6 748.9 374.6 744.0 371.1ZM757.6 373.8 762.6 377.4 771.2 376.6 766.2 373.0ZM779.8 375.9 784.9 379.6 793.4 379.0 788.3 375.3ZM801.9 378.5 807.2 382.4 815.7 381.9 810.4 378.1ZM810.4 378.1 815.7 381.9 824.1 381.6 818.8 377.8ZM832.5 381.3 837.9 385.2 846.2 385.0 840.8 381.0ZM854.5 384.8 860.1 388.8 868.3 388.7 862.8 384.7ZM862.8 384.7 868.3 388.7 876.6 388.7 871.0 384.7ZM884.7 388.7 890.4 392.8 898.6 392.8 892.9 388.7ZM892.9 388.7 898.6 392.8 906.7 392.9 900.9 388.8ZM900.9 388.8 906.7 392.9 914.7 393.0 908.9 388.9ZM930.6 393.4 936.5 397.5 944.4 397.7 938.5 393.6ZM938.5 393.6 944.4 397.7 952.2 398.0 946.3 393.8ZM946.3 393.8 952.2 398.0 960.0 398.2 954.1 394.0ZM954.1 394.0 960.0 398.2 967.8 398.4 961.8 394.3ZM961.8 394.3 967.8 398.4 975.5 398.6 969.5 394.5Z"/>
<path fill="#555555" stroke="#555555" d="M323.0 452.5 325.2 455.4 335.0 451.1 332.7 448.4ZM332.7 448.4 335.0 451.1 344.6 446.9 342.3 444.2ZM342.3 444.2 344.6 446.9 354.3 442.8 351.9 440.1ZM351.9 440.1 354.3 442.8 363.9 438.6 361.4 435.9ZM401.9 422.5 404.7 425.2 414.1 421.3 411.4 418.6ZM411.4 418.6 414.1 421.3 423.6 417.4 420.7 414.8ZM420.7 414.8 423.6 417.4 433.0 413.6 430.1 411.0ZM451.7 406.2 454.7 408.9 464.1 405.3 461.0 402.6ZM461.0 402.6 464.1 405.3 473.4 401.8 470.3 399.1ZM492.0 395.0 495.3 397.7 504.5 394.4 501.2 391.7ZM501.2 391.7 504.5 394.4 513.8 391.2 510.3 388.6ZM523.0 388.1 526.5 390.9 535.7 387.9 532.1 385.2ZM554.0 382.2 557.7 385.0 566.8 382.3 563.1 379.5ZM575.9 379.7 579.8 382.6 588.9 380.1 585.0 377.2ZM585.0 377.2 588.9 380.1 598.0 377.7 594.0 374.8ZM607.0 375.4 611.1 378.4 620.1 376.2 616.0 373.2ZM629.1 374.1 633.3 377.2 642.3 375.3 638.0 372.2ZM651.2 373.4 655.6 376.6 664.5 374.8 660.1 371.6ZM673.4 373.2 677.9 376.5 686.8 374.9 682.3 371.6ZM695.7 373.4 700.3 376.9 709.2 375.5 704.5 372.1ZM704.5 372.1 709.2 375.5 717.9 374.3 713.2 370.9ZM726.7 373.1 731.5 376.6 740.2 375.6 735.4 372.1ZM748.9 374.6 753.9 378.2 762.6 377.4 757.6 373.8ZM771.2 376.6 776.3 380.3 784.9 379.6 779.8 375.9ZM793.4 379.0 798.6 382.9 807.2 382.4 801.9 378.5ZM815.7 381.9 821.0 385.9 829.5 385.5 824.1 381.6ZM824.1 381.6 829.5 385.5 837.9 385.2 832.5 381.3ZM846.2 385.0 851.7 389.0 860.1 388.8 854.5 384.8ZM868.3 388.7 874.0 392.9 882.2 392.8 876.6 388.7ZM876.6 388.7 882.2 392.8 890.4 392.8 884.7 388.7ZM906.7 392.9 912.5 397.1 920.5 397.2 914.7 393.0ZM914.7 393.0 920.5 397.2 928.5 397.4 922.7 393.2ZM922.7 393.2 928.5 397.4 936.5 397.5 930.6 393.4ZM952.2 398.0 958.3 402.2 966.1 402.5 960.0 398.2ZM960.0 398.2 966.1 402.5 973.8 402.7 967.8 398.4ZM967.8 398.4 973.8 402.7 981.6 402.9 975.5 398.6Z"/>
<path fill="#565656" stroke="#565656" d="M354.3 442.8 356.7 445.6 366.4 441.5 363.9 438.6ZM363.9 438.6 366.4 441.5 376.0 437.3 373.5 434.5ZM373.5 434.5 376.0 437.3 385.6 433.3 383.0 430.5ZM383.0 430.5 385.6 433.3 395.2 429.2 392.5 426.5ZM392.5 426.5 395.2 429.2 404.7 425.2 401.9 422.5ZM433.0 413.6 435.9 416.4 445.4 412.6 442.4 409.9ZM442.4 409.9 445.4 412.6 454.7 408.9 451.7 406.2ZM473.4 401.8 476.6 404.6 486.0 401.1 482.7 398.3ZM482.7 398.3 486.0 401.1 495.3 397.7 492.0 395.0ZM504.5 394.4 507.9 397.3 517.2 394.0 513.8 391.2ZM513.8 391.2 517.2 394.0 526.5 390.9 523.0 388.1ZM535.7 387.9 539.3 390.8 548.5 387.9 544.8 385.0ZM544.8 385.0 548.5 387.9 557.7 385.0 554.0 382.2ZM566.8 382.3 570.6 385.3 579.8 382.6 575.9 379.7ZM598.0 377.7 602.0 380.7 611.1 378.4 607.0 375.4ZM620.1 376.2 624.2 379.4 633.3 377.2 629.1 374.1ZM642.3 375.3 646.6 378.5 655.6 376.6 651.2 373.4ZM664.5 374.8 669.0 378.2 677.9 376.5 673.4 373.2ZM686.8 374.9 691.4 378.3 700.3 376.9 695.7 373.4ZM709.2 375.5 713.9 379.1 722.7 377.8 717.9 374.3ZM717.9 374.3 722.7 377.8 731.5 376.6 726.7 373.1ZM731.5 376.6 736.4 380.3 745.2 379.2 740.2 375.6ZM740.2 375.6 745.2 379.2 753.9 378.2 748.9 374.6ZM762.6 377.4 767.6 381.1 776.3 380.3 771.2 376.6ZM784.9 379.6 790.0 383.5 798.6 382.9 793.4 379.0ZM807.2 382.4 812.5 386.3 821.0 385.9 815.7 381.9ZM829.5 385.5 834.9 389.6 843.3 389.3 837.9 385.2ZM837.9 385.2 843.3 389.3 851.7 389.0 846.2 385.0ZM851.7 389.0 857.3 393.2 865.7 393.0 860.1 388.8ZM860.1 388.8 865.7 393.0 874.0 392.9 868.3 388.7ZM882.2 392.8 887.9 397.1 896.2 397.1 890.4 392.8ZM890.4 392.8 896.2 397.1 904.3 397.1 898.6 392.8ZM898.6 392.8 904.3 397.1 912.5 397.1 906.7 392.9ZM920.5 397.2 926.4 401.6 934.5 401.7 928.5 397.4ZM928.5 397.4 934.5 401.7 942.4 401.9 936.5 397.5ZM936.5 397.5 942.4 401.9 950.4 402.0 944.4 397.7ZM944.4 397.7 950.4 402.0 958.3 402.2 952.2 398.0Z"/>
<path fill="#575757" stroke="#575757" d="M325.2 455.4 327.5 458.3 337.3 454.1 335.0 451.1ZM335.0 451.1 337.3 454.1 347.0 449.9 344.6 446.9ZM344.6 446.9 347.0 449.9 356.7 445.6 354.3 442.8ZM404.7 425.2 407.4 428.1 417.0 424.1 414.1 421.3ZM414.1 421.3 417.0 424.1 426.5 420.2 423.6 417.4ZM423.6 417.4 426.5 420.2 435.9 416.4 433.0 413.6ZM454.7 408.9 457.9 411.8 467.3 408.1 464.1 405.3ZM464.1 405.3 467.3 408.1 476.6 404.6 473.4 401.8ZM495.3 397.7 498.6 400.6 507.9 397.3 504.5 394.4ZM526.5 390.9 530.0 393.8 539.3 390.8 535.7 387.9ZM557.7 385.0 561.4 388.0 570.6 385.3 566.8 382.3ZM579.8 382.6 583.7 385.7 592.9 383.2 588.9 380.1ZM588.9 380.1 592.9 383.2 602.0 380.7 598.0 377.7ZM611.1 378.4 615.2 381.6 624.2 379.4 620.1 376.2ZM633.3 377.2 637.5 380.5 646.6 378.5 642.3 375.3ZM655.6 376.6 660.0 380.0 669.0 378.2 664.5 374.8ZM677.9 376.5 682.5 379.9 691.4 378.3 686.8 374.9ZM700.3 376.9 705.0 380.4 713.9 379.1 709.2 375.5ZM722.7 377.8 727.6 381.5 736.4 380.3 731.5 376.6ZM745.2 379.2 750.1 383.0 758.9 382.0 753.9 378.2ZM753.9 378.2 758.9 382.0 767.6 381.1 762.6 377.4ZM767.6 381.1 772.7 385.0 781.4 384.2 776.3 380.3ZM776.3 380.3 781.4 384.2 790.0 383.5 784.9 379.6ZM790.0 383.5 795.3 387.5 803.9 386.9 798.6 382.9ZM798.6 382.9 803.9 386.9 812.5 386.3 807.2 382.4ZM821.0 385.9 826.4 390.0 834.9 389.6 829.5 385.5ZM843.3 389.3 848.9 393.4 857.3 393.2 851.7 389.0ZM865.7 393.0 871.3 397.3 879.7 397.2 874.0 392.9ZM874.0 392.9 879.7 397.2 887.9 397.1 882.2 392.8ZM896.2 397.1 902.0 401.4 910.2 401.4 904.3 397.1ZM904.3 397.1 910.2 401.4 918.3 401.5 912.5 397.1ZM912.5 397.1 918.3 401.5 926.4 401.6 920.5 397.2ZM934.5 401.7 940.5 406.2 948.5 406.3 942.4 401.9ZM942.4 401.9 948.5 406.3 956.4 406.5 950.4 402.0ZM950.4 402.0 956.4 406.5 964.3 406.7 958.3 402.2ZM958.3 402.2 964.3 406.7 972.2 406.9 966.1 402.5ZM966.1 402.5 972.2 406.9 980.0 407.1 973.8 402.7ZM973.8 402.7 980.0 407.1 987.7 407.3 981.6 402.9Z"/>
<path fill="#585858" stroke="#585858" d="M347.0 449.9 349.5 452.9 359.2 448.7 356.7 445.6ZM356.7 445.6 359.2 448.7 368.9 444.5 366.4 441.5ZM366.4 441.5 368.9 444.5 378.6 440.3 376.0 437.3ZM376.0 437.3 378.6 440.3 388.3 436.2 385.6 433.3ZM385.6 433.3 388.3 436.2 397.9 432.1 395.2 429.2ZM395.2 429.2 397.9 432.1 407.4 428.1 404.7 425.2ZM435.9 416.4 438.9 419.3 448.4 415.5 445.4 412.6ZM445.4 412.6 448.4 415.5 457.9 411.8 454.7 408.9ZM476.6 404.6 479.9 407.5 489.3 404.0 486.0 401.1ZM486.0 401.1 489.3 404.0 498.6 400.6 495.3 397.7ZM507.9 397.3 511.4 400.2 520.7 397.0 517.2 394.0ZM517.2 394.0 520.7 397.0 530.0 393.8 526.5 390.9ZM539.3 390.8 543.0 393.8 552.2 390.9 548.5 387.9ZM548.5 387.9 552.2 390.9 561.4 388.0 557.7 385.0ZM570.6 385.3 574.5 388.4 583.7 385.7 579.8 382.6ZM592.9 383.2 596.9 386.4 606.0 383.9 602.0 380.7ZM602.0 380.7 606.0 383.9 615.2 381.6 611.1 378.4ZM624.2 379.4 628.5 382.6 637.5 380.5 633.3 377.2ZM646.6 378.5 650.9 381.9 660.0 380.0 655.6 376.6ZM669.0 378.2 673.5 381.6 682.5 379.9 677.9 376.5ZM691.4 378.3 696.1 381.9 705.0 380.4 700.3 376.9ZM713.9 379.1 718.7 382.8 727.6 381.5 722.7 377.8ZM736.4 380.3 741.3 384.1 750.1 383.0 745.2 379.2ZM758.9 382.0 764.0 385.9 772.7 385.0 767.6 381.1ZM781.4 384.2 786.6 388.2 795.3 387.5 790.0 383.5ZM803.9 386.9 809.3 391.0 817.9 390.4 812.5 386.3ZM812.5 386.3 817.9 390.4 826.4 390.0 821.0 385.9ZM826.4 390.0 831.9 394.2 840.4 393.8 834.9 389.6ZM834.9 389.6 840.4 393.8 848.9 393.4 843.3 389.3ZM857.3 393.2 862.9 397.5 871.3 397.3 865.7 393.0ZM879.7 397.2 885.4 401.6 893.7 401.5 887.9 397.1ZM887.9 397.1 893.7 401.5 902.0 401.4 896.2 397.1ZM910.2 401.4 916.1 406.0 924.3 406.0 918.3 401.5ZM918.3 401.5 924.3 406.0 932.4 406.1 926.4 401.6ZM926.4 401.6 932.4 406.1 940.5 406.2 934.5 401.7ZM940.5 406.2 946.5 410.8 954.6 410.9 948.5 406.3ZM948.5 406.3 954.6 410.9 962.5 411.0 956.4 406.5ZM956.4 406.5 962.5 411.0 970.5 411.2 964.3 406.7ZM964.3 406.7 970.5 411.2 978.3 411.4 972.2 406.9ZM972.2 406.9 978.3 411.4 986.2 411.6 980.0 407.1ZM980.0 407.1 986.2 411.6 993.9 411.8 987.7 407.3Z"/>
<path fill="#595959" stroke="#595959" d="M327.5 458.3 329.8 461.4 339.7 457.2 337.3 454.1ZM337.3 454.1 339.7 457.2 349.5 452.9 347.0 449.9ZM397.9 432.1 400.7 435.1 410.3 431.1 407.4 428.1ZM407.4 428.1 410.3 431.1 419.9 427.1 417.0 424.1ZM417.0 424.1 419.9 427.1 429.4 423.1 426.5 420.2ZM426.5 420.2 429.4 423.1 438.9 419.3 435.9 416.4ZM457.9 411.8 461.0 414.7 470.5 411.1 467.3 408.1ZM467.3 408.1 470.5 411.1 479.9 407.5 476.6 404.6ZM498.6 400.6 502.0 403.6 511.4 400.2 507.9 397.3ZM530.0 393.8 533.6 396.9 543.0 393.8 539.3 390.8ZM561.4 388.0 565.3 391.1 574.5 388.4 570.6 385.3ZM583.7 385.7 587.7 388.9 596.9 386.4 592.9 383.2ZM606.0 383.9 610.2 387.2 619.3 384.9 615.2 381.6ZM615.2 381.6 619.3 384.9 628.5 382.6 624.2 379.4ZM637.5 380.5 641.9 383.9 650.9 381.9 646.6 378.5ZM660.0 380.0 664.4 383.5 673.5 381.6 669.0 378.2ZM682.5 379.9 687.1 383.5 696.1 381.9 691.4 378.3ZM705.0 380.4 709.7 384.2 718.7 382.8 713.9 379.1ZM727.6 381.5 732.4 385.3 741.3 384.1 736.4 380.3ZM750.1 383.0 755.2 386.9 764.0 385.9 758.9 382.0ZM772.7 385.0 777.9 389.0 786.6 388.2 781.4 384.2ZM795.3 387.5 800.6 391.6 809.3 391.0 803.9 386.9ZM817.9 390.4 823.3 394.7 831.9 394.2 826.4 390.0ZM840.4 393.8 846.0 398.1 854.5 397.8 848.9 393.4ZM848.9 393.4 854.5 397.8 862.9 397.5 857.3 393.2ZM862.9 397.5 868.6 402.0 877.1 401.7 871.3 397.3ZM871.3 397.3 877.1 401.7 885.4 401.6 879.7 397.2ZM893.7 401.5 899.6 406.0 907.9 406.0 902.0 401.4ZM902.0 401.4 907.9 406.0 916.1 406.0 910.2 401.4ZM916.1 406.0 922.1 410.6 930.3 410.6 924.3 406.0ZM924.3 406.0 930.3 410.6 938.4 410.7 932.4 406.1ZM932.4 406.1 938.4 410.7 946.5 410.8 940.5 406.2ZM954.6 410.9 960.7 415.6 968.7 415.7 962.5 411.0ZM962.5 411.0 968.7 415.7 976.7 415.9 970.5 411.2ZM970.5 411.2 976.7 415.9 984.6 416.1 978.3 411.4ZM978.3 411.4 984.6 416.1 992.4 416.2 986.2 411.6ZM986.2 411.6 992.4 416.2 1000.2 416.4 993.9 411.8Z"/>
<path fill="#5a5a5a" stroke="#5a5a5a" d="M329.8 461.4 332.2 464.7 342.1 460.4 339.7 457.2ZM339.7 457.2 342.1 460.4 352.0 456.1 349.5 452.9ZM349.5 452.9 352.0 456.1 361.8 451.8 359.2 448.7ZM359.2 448.7 361.8 451.8 371.5 447.6 368.9 444.5ZM368.9 444.5 371.5 447.6 381.3 443.4 378.6 440.3ZM378.6 440.3 381.3 443.4 391.0 439.2 388.3 436.2ZM388.3 436.2 391.0 439.2 400.7 435.1 397.9 432.1ZM429.4 423.1 432.4 426.2 442.0 422.3 438.9 419.3ZM438.9 419.3 442.0 422.3 451.5 418.5 448.4 415.5ZM448.4 415.5 451.5 418.5 461.0 414.7 457.9 411.8ZM479.9 407.5 483.2 410.5 492.6 407.0 489.3 404.0ZM489.3 404.0 492.6 407.0 502.0 403.6 498.6 400.6ZM511.4 400.2 514.9 403.3 524.3 400.1 520.7 397.0ZM520.7 397.0 524.3 400.1 533.6 396.9 530.0 393.8ZM543.0 393.8 546.7 397.0 556.0 394.0 552.2 390.9ZM552.2 390.9 556.0 394.0 565.3 391.1 561.4 388.0ZM574.5 388.4 578.4 391.6 587.7 388.9 583.7 385.7ZM596.9 386.4 601.0 389.7 610.2 387.2 606.0 383.9ZM628.5 382.6 632.7 386.1 641.9 383.9 637.5 380.5ZM650.9 381.9 655.4 385.4 664.4 383.5 660.0 380.0ZM673.5 381.6 678.0 385.3 687.1 383.5 682.5 379.9ZM696.1 381.9 700.8 385.7 709.7 384.2 705.0 380.4ZM718.7 382.8 723.5 386.6 732.4 385.3 727.6 381.5ZM741.3 384.1 746.3 388.0 755.2 386.9 750.1 383.0ZM764.0 385.9 769.1 390.0 777.9 389.0 772.7 385.0ZM786.6 388.2 791.9 392.4 800.6 391.6 795.3 387.5ZM809.3 391.0 814.7 395.3 823.3 394.7 817.9 390.4ZM831.9 394.2 837.4 398.6 846.0 398.1 840.4 393.8ZM854.5 397.8 860.1 402.2 868.6 402.0 862.9 397.5ZM877.1 401.7 882.8 406.3 891.2 406.1 885.4 401.6ZM885.4 401.6 891.2 406.1 899.6 406.0 893.7 401.5ZM899.6 406.0 905.5 410.7 913.8 410.6 907.9 406.0ZM907.9 406.0 913.8 410.6 922.1 410.6 916.1 406.0ZM930.3 410.6 936.4 415.4 944.5 415.4 938.4 410.7ZM938.4 410.7 944.5 415.4 952.6 415.5 946.5 410.8ZM946.5 410.8 952.6 415.5 960.7 415.6 954.6 410.9ZM968.7 415.7 975.0 420.5 982.9 420.7 976.7 415.9ZM976.7 415.9 982.9 420.7 990.9 420.8 984.6 416.1ZM984.6 416.1 990.9 420.8 998.7 421.0 992.4 416.2ZM992.4 416.2 998.7 421.0 1006.5 421.2 1000.2 416.4Z"/>
<path fill="#5b5b5b" stroke="#5b5b5b" d="M400.7 435.1 403.5 438.3 413.2 434.2 410.3 431.1ZM410.3 431.1 413.2 434.2 422.8 430.2 419.9 427.1ZM419.9 427.1 422.8 430.2 432.4 426.2 429.4 423.1ZM461.0 414.7 464.2 417.8 473.7 414.1 470.5 411.1ZM470.5 411.1 473.7 414.1 483.2 410.5 479.9 407.5ZM492.6 407.0 496.1 410.2 505.5 406.7 502.0 403.6ZM502.0 403.6 505.5 406.7 514.9 403.3 511.4 400.2ZM533.6 396.9 537.3 400.1 546.7 397.0 543.0 393.8ZM556.0 394.0 559.8 397.3 569.1 394.4 565.3 391.1ZM565.3 391.1 569.1 394.4 578.4 391.6 574.5 388.4ZM587.7 388.9 591.7 392.3 601.0 389.7 596.9 386.4ZM610.2 387.2 614.3 390.7 623.6 388.3 619.3 384.9ZM619.3 384.9 623.6 388.3 632.7 386.1 628.5 382.6ZM641.9 383.9 646.2 387.5 655.4 385.4 650.9 381.9ZM664.4 383.5 669.0 387.1 678.0 385.3 673.5 381.6ZM687.1 383.5 691.7 387.3 700.8 385.7 696.1 381.9ZM709.7 384.2 714.6 388.0 723.5 386.6 718.7 382.8ZM732.4 385.3 737.4 389.2 746.3 388.0 741.3 384.1ZM746.3 388.0 751.4 392.1 760.2 391.0 755.2 386.9ZM755.2 386.9 760.2 391.0 769.1 390.0 764.0 385.9ZM769.1 390.0 774.3 394.2 783.1 393.2 777.9 389.0ZM777.9 389.0 783.1 393.2 791.9 392.4 786.6 388.2ZM791.9 392.4 797.2 396.7 806.0 395.9 800.6 391.6ZM800.6 391.6 806.0 395.9 814.7 395.3 809.3 391.0ZM814.7 395.3 820.1 399.7 828.8 399.1 823.3 394.7ZM823.3 394.7 828.8 399.1 837.4 398.6 831.9 394.2ZM837.4 398.6 843.0 403.1 851.6 402.6 846.0 398.1ZM846.0 398.1 851.6 402.6 860.1 402.2 854.5 397.8ZM860.1 402.2 865.9 406.8 874.4 406.5 868.6 402.0ZM868.6 402.0 874.4 406.5 882.8 406.3 877.1 401.7ZM882.8 406.3 888.7 411.0 897.1 410.8 891.2 406.1ZM891.2 406.1 897.1 410.8 905.5 410.7 899.6 406.0ZM913.8 410.6 919.8 415.4 928.1 415.3 922.1 410.6ZM922.1 410.6 928.1 415.3 936.4 415.4 930.3 410.6ZM936.4 415.4 942.5 420.2 950.7 420.2 944.5 415.4ZM944.5 415.4 950.7 420.2 958.8 420.3 952.6 415.5ZM952.6 415.5 958.8 420.3 966.9 420.4 960.7 415.6ZM960.7 415.6 966.9 420.4 975.0 420.5 968.7 415.7ZM975.0 420.5 981.3 425.5 989.3 425.6 982.9 420.7ZM982.9 420.7 989.3 425.6 997.2 425.7 990.9 420.8ZM990.9 420.8 997.2 425.7 1005.1 425.9 998.7 421.0ZM998.7 421.0 1005.1 425.9 1012.9 426.0 1006.5 421.2Z"/>
<path fill="#5c5c5c" stroke="#5c5c5c" d="M332.2 464.7 334.6 468.1 344.6 463.8 342.1 460.4ZM342.1 460.4 344.6 463.8 354.5 459.4 352.0 456.1ZM352.0 456.1 354.5 459.4 364.4 455.1 361.8 451.8ZM361.8 451.8 364.4 455.1 374.2 450.8 371.5 447.6ZM371.5 447.6 374.2 450.8 384.0 446.6 381.3 443.4ZM381.3 443.4 384.0 446.6 393.8 442.4 391.0 439.2ZM391.0 439.2 393.8 442.4 403.5 438.3 400.7 435.1ZM432.4 426.2 435.4 429.4 445.1 425.5 442.0 422.3ZM442.0 422.3 445.1 425.5 454.7 421.6 451.5 418.5ZM451.5 418.5 454.7 421.6 464.2 417.8 461.0 414.7ZM483.2 410.5 486.6 413.7 496.1 410.2 492.6 407.0ZM514.9 403.3 518.5 406.6 527.9 403.3 524.3 400.1ZM524.3 400.1 527.9 403.3 537.3 400.1 533.6 396.9ZM546.7 397.0 550.5 400.3 559.8 397.3 556.0 394.0ZM578.4 391.6 582.4 395.0 591.7 392.3 587.7 388.9ZM601.0 389.7 605.1 393.2 614.3 390.7 610.2 387.2ZM623.6 388.3 627.8 391.9 637.1 389.6 632.7 386.1ZM632.7 386.1 637.1 389.6 646.2 387.5 641.9 383.9ZM646.2 387.5 650.7 391.1 659.8 389.1 655.4 385.4ZM655.4 385.4 659.8 389.1 669.0 387.1 664.4 383.5ZM678.0 385.3 682.7 389.0 691.7 387.3 687.1 383.5ZM700.8 385.7 705.5 389.5 714.6 388.0 709.7 384.2ZM714.6 388.0 719.4 392.0 728.4 390.6 723.5 386.6ZM723.5 386.6 728.4 390.6 737.4 389.2 732.4 385.3ZM737.4 389.2 742.4 393.4 751.4 392.1 746.3 388.0ZM760.2 391.0 765.4 395.2 774.3 394.2 769.1 390.0ZM783.1 393.2 788.4 397.5 797.2 396.7 791.9 392.4ZM806.0 395.9 811.4 400.3 820.1 399.7 814.7 395.3ZM828.8 399.1 834.4 403.6 843.0 403.1 837.4 398.6ZM851.6 402.6 857.3 407.2 865.9 406.8 860.1 402.2ZM865.9 406.8 871.7 411.6 880.2 411.3 874.4 406.5ZM874.4 406.5 880.2 411.3 888.7 411.0 882.8 406.3ZM897.1 410.8 903.1 415.6 911.5 415.5 905.5 410.7ZM905.5 410.7 911.5 415.5 919.8 415.4 913.8 410.6ZM919.8 415.4 925.9 420.3 934.2 420.2 928.1 415.3ZM928.1 415.3 934.2 420.2 942.5 420.2 936.4 415.4ZM942.5 420.2 948.7 425.2 956.9 425.2 950.7 420.2ZM950.7 420.2 956.9 425.2 965.1 425.3 958.8 420.3ZM958.8 420.3 965.1 425.3 973.2 425.3 966.9 420.4ZM966.9 420.4 973.2 425.3 981.3 425.5 975.0 420.5ZM981.3 425.5 987.7 430.5 995.7 430.6 989.3 425.6ZM989.3 425.6 995.7 430.6 1003.6 430.7 997.2 425.7ZM997.2 425.7 1003.6 430.7 1011.6 430.9 1005.1 425.9ZM1005.1 425.9 1011.6 430.9 1019.4 431.0 1012.9 426.0Z"/>
<path fill="#5d5d5d" stroke="#5d5d5d" d="M393.8 442.4 396.6 445.8 406.3 441.6 403.5 438.3ZM403.5 438.3 406.3 441.6 416.1 437.5 413.2 434.2ZM413.2 434.2 416.1 437.5 425.8 433.4 422.8 430.2ZM422.8 430.2 425.8 433.4 435.4 429.4 432.4 426.2ZM454.7 421.6 457.9 424.9 467.5 421.1 464.2 417.8ZM464.2 417.8 467.5 421.1 477.0 417.4 473.7 414.1ZM473.7 414.1 477.0 417.4 486.6 413.7 483.2 410.5ZM496.1 410.2 499.5 413.5 509.0 410.0 505.5 406.7ZM505.5 406.7 509.0 410.0 518.5 406.6 514.9 403.3ZM527.9 403.3 531.6 406.7 541.0 403.5 537.3 400.1ZM537.3 400.1 541.0 403.5 550.5 400.3 546.7 397.0ZM559.8 397.3 563.7 400.8 573.1 397.8 569.1 394.4ZM569.1 394.4 573.1 397.8 582.4 395.0 578.4 391.6ZM591.7 392.3 595.8 395.8 605.1 393.2 601.0 389.7ZM614.3 390.7 618.6 394.3 627.8 391.9 623.6 388.3ZM637.1 389.6 641.5 393.3 650.7 391.1 646.2 387.5ZM659.8 389.1 664.4 392.9 673.5 390.9 669.0 387.1ZM669.0 387.1 673.5 390.9 682.7 389.0 678.0 385.3ZM682.7 389.0 687.4 393.0 696.5 391.2 691.7 387.3ZM691.7 387.3 696.5 391.2 705.5 389.5 700.8 385.7ZM705.5 389.5 710.4 393.6 719.4 392.0 714.6 388.0ZM728.4 390.6 733.4 394.7 742.4 393.4 737.4 389.2ZM751.4 392.1 756.5 396.4 765.4 395.2 760.2 391.0ZM774.3 394.2 779.5 398.5 788.4 397.5 783.1 393.2ZM797.2 396.7 802.6 401.1 811.4 400.3 806.0 395.9ZM811.4 400.3 816.9 404.9 825.6 404.2 820.1 399.7ZM820.1 399.7 825.6 404.2 834.4 403.6 828.8 399.1ZM834.4 403.6 840.0 408.2 848.7 407.7 843.0 403.1ZM843.0 403.1 848.7 407.7 857.3 407.2 851.6 402.6ZM857.3 407.2 863.1 412.0 871.7 411.6 865.9 406.8ZM880.2 411.3 886.1 416.1 894.6 415.8 888.7 411.0ZM888.7 411.0 894.6 415.8 903.1 415.6 897.1 410.8ZM903.1 415.6 909.1 420.6 917.6 420.4 911.5 415.5ZM911.5 415.5 917.6 420.4 925.9 420.3 919.8 415.4ZM925.9 420.3 932.1 425.3 940.4 425.2 934.2 420.2ZM934.2 420.2 940.4 425.2 948.7 425.2 942.5 420.2ZM948.7 425.2 955.0 430.3 963.2 430.3 956.9 425.2ZM956.9 425.2 963.2 430.3 971.4 430.3 965.1 425.3ZM965.1 425.3 971.4 430.3 979.6 430.4 973.2 425.3ZM973.2 425.3 979.6 430.4 987.7 430.5 981.3 425.5ZM979.6 430.4 986.0 435.6 994.1 435.6 987.7 430.5ZM987.7 430.5 994.1 435.6 1002.2 435.7 995.7 430.6ZM995.7 430.6 1002.2 435.7 1010.2 435.8 1003.6 430.7ZM1003.6 430.7 1010.2 435.8 1018.1 436.0 1011.6 430.9ZM1011.6 430.9 1018.1 436.0 1026.0 436.1 1019.4 431.0Z"/>
<path fill="#5e5e5e" stroke="#5e5e5e" d="M334.6 468.1 337.1 471.7 347.1 467.3 344.6 463.8ZM344.6 463.8 347.1 467.3 357.1 462.9 354.5 459.4ZM354.5 459.4 357.1 462.9 367.0 458.6 364.4 455.1ZM364.4 455.1 367.0 458.6 376.9 454.3 374.2 450.8ZM374.2 450.8 376.9 454.3 386.8 450.0 384.0 446.6ZM384.0 446.6 386.8 450.0 396.6 445.8 393.8 442.4ZM435.4 429.4 438.5 432.8 448.2 428.8 445.1 425.5ZM445.1 425.5 448.2 428.8 457.9 424.9 454.7 421.6ZM477.0 417.4 480.4 420.8 490.0 417.1 486.6 413.7ZM486.6 413.7 490.0 417.1 499.5 413.5 496.1 410.2ZM518.5 406.6 522.1 410.0 531.6 406.7 527.9 403.3ZM550.5 400.3 554.3 403.8 563.7 400.8 559.8 397.3ZM573.1 397.8 577.1 401.4 586.4 398.6 582.4 395.0ZM582.4 395.0 586.4 398.6 595.8 395.8 591.7 392.3ZM605.1 393.2 609.3 396.9 618.6 394.3 614.3 390.7ZM627.8 391.9 632.2 395.7 641.5 393.3 637.1 389.6ZM650.7 391.1 655.2 395.0 664.4 392.9 659.8 389.1ZM673.5 390.9 678.2 394.9 687.4 393.0 682.7 389.0ZM696.5 391.2 701.3 395.2 710.4 393.6 705.5 389.5ZM719.4 392.0 724.4 396.2 733.4 394.7 728.4 390.6ZM742.4 393.4 747.5 397.6 756.5 396.4 751.4 392.1ZM765.4 395.2 770.6 399.6 779.5 398.5 774.3 394.2ZM779.5 398.5 784.9 403.0 793.8 402.0 788.4 397.5ZM788.4 397.5 793.8 402.0 802.6 401.1 797.2 396.7ZM802.6 401.1 808.1 405.7 816.9 404.9 811.4 400.3ZM825.6 404.2 831.2 408.9 840.0 408.2 834.4 403.6ZM840.0 408.2 845.7 413.0 854.4 412.5 848.7 407.7ZM848.7 407.7 854.4 412.5 863.1 412.0 857.3 407.2ZM863.1 412.0 868.9 416.9 877.5 416.4 871.7 411.6ZM871.7 411.6 877.5 416.4 886.1 416.1 880.2 411.3ZM886.1 416.1 892.1 421.1 900.6 420.8 894.6 415.8ZM894.6 415.8 900.6 420.8 909.1 420.6 903.1 415.6ZM909.1 420.6 915.2 425.6 923.7 425.4 917.6 420.4ZM917.6 420.4 923.7 425.4 932.1 425.3 925.9 420.3ZM932.1 425.3 938.3 430.4 946.7 430.4 940.4 425.2ZM940.4 425.2 946.7 430.4 955.0 430.3 948.7 425.2ZM955.0 430.3 961.3 435.5 969.6 435.5 963.2 430.3ZM963.2 430.3 969.6 435.5 977.8 435.5 971.4 430.3ZM971.4 430.3 977.8 435.5 986.0 435.6 979.6 430.4ZM986.0 435.6 992.5 440.8 1000.6 440.9 994.1 435.6ZM994.1 435.6 1000.6 440.9 1008.7 441.0 1002.2 435.7ZM1002.2 435.7 1008.7 441.0 1016.7 441.1 1010.2 435.8ZM1010.2 435.8 1016.7 441.1 1024.7 441.2 1018.1 436.0ZM1018.1 436.0 1024.7 441.2 1032.6 441.3 1026.0 436.1Z"/>
<path fill="#5f5f5f" stroke="#5f5f5f" d="M396.6 445.8 399.4 449.3 409.3 445.1 406.3 441.6ZM406.3 441.6 409.3 445.1 419.1 440.9 416.1 437.5ZM416.1 437.5 419.1 440.9 428.8 436.8 425.8 433.4ZM425.8 433.4 428.8 436.8 438.5 432.8 435.4 429.4ZM457.9 424.9 461.1 428.4 470.8 424.5 467.5 421.1ZM467.5 421.1 470.8 424.5 480.4 420.8 477.0 417.4ZM499.5 413.5 503.0 417.0 512.6 413.5 509.0 410.0ZM509.0 410.0 512.6 413.5 522.1 410.0 518.5 406.6ZM531.6 406.7 535.3 410.2 544.8 407.0 541.0 403.5ZM541.0 403.5 544.8 407.0 554.3 403.8 550.5 400.3ZM563.7 400.8 567.6 404.4 577.1 401.4 573.1 397.8ZM595.8 395.8 599.9 399.5 609.3 396.9 605.1 393.2ZM618.6 394.3 622.9 398.1 632.2 395.7 627.8 391.9ZM641.5 393.3 645.9 397.2 655.2 395.0 650.7 391.1ZM664.4 392.9 669.0 396.9 678.2 394.9 673.5 390.9ZM687.4 393.0 692.1 397.0 701.3 395.2 696.5 391.2ZM710.4 393.6 715.3 397.7 724.4 396.2 719.4 392.0ZM733.4 394.7 738.4 399.0 747.5 397.6 742.4 393.4ZM747.5 397.6 752.6 402.0 761.7 400.7 756.5 396.4ZM756.5 396.4 761.7 400.7 770.6 399.6 765.4 395.2ZM770.6 399.6 775.9 404.1 784.9 403.0 779.5 398.5ZM793.8 402.0 799.2 406.6 808.1 405.7 802.6 401.1ZM808.1 405.7 813.6 410.4 822.4 409.6 816.9 404.9ZM816.9 404.9 822.4 409.6 831.2 408.9 825.6 404.2ZM831.2 408.9 836.9 413.7 845.7 413.0 840.0 408.2ZM854.4 412.5 860.2 417.4 868.9 416.9 863.1 412.0ZM868.9 416.9 874.8 421.9 883.5 421.4 877.5 416.4ZM877.5 416.4 883.5 421.4 892.1 421.1 886.1 416.1ZM892.1 421.1 898.1 426.2 906.7 425.9 900.6 420.8ZM900.6 420.8 906.7 425.9 915.2 425.6 909.1 420.6ZM915.2 425.6 921.4 430.8 929.9 430.6 923.7 425.4ZM923.7 425.4 929.9 430.6 938.3 430.4 932.1 425.3ZM938.3 430.4 944.6 435.7 953.0 435.6 946.7 430.4ZM946.7 430.4 953.0 435.6 961.3 435.5 955.0 430.3ZM953.0 435.6 959.4 440.9 967.8 440.9 961.3 435.5ZM961.3 435.5 967.8 440.9 976.1 440.8 969.6 435.5ZM969.6 435.5 976.1 440.8 984.3 440.8 977.8 435.5ZM977.8 435.5 984.3 440.8 992.5 440.8 986.0 435.6ZM984.3 440.8 990.9 446.2 999.1 446.2 992.5 440.8ZM992.5 440.8 999.1 446.2 1007.2 446.3 1000.6 440.9ZM1000.6 440.9 1007.2 446.3 1015.3 446.3 1008.7 441.0ZM1008.7 441.0 1015.3 446.3 1023.4 446.4 1016.7 441.1ZM1016.7 441.1 1023.4 446.4 1031.4 446.5 1024.7 441.2ZM1024.7 441.2 1031.4 446.5 1039.3 446.6 1032.6 441.3ZM1007.2 446.3 1013.9 451.7 1022.0 451.8 1015.3 446.3ZM1015.3 446.3 1022.0 451.8 1030.1 451.8 1023.4 446.4ZM1023.4 446.4 1030.1 451.8 1038.1 451.9 1031.4 446.5ZM1031.4 446.5 1038.1 451.9 1046.1 452.0 1039.3 446.6Z"/>
<path fill="#606060" stroke="#606060" d="M337.1 471.7 339.6 475.4 349.7 471.0 347.1 467.3ZM347.1 467.3 349.7 471.0 359.7 466.6 357.1 462.9ZM357.1 462.9 359.7 466.6 369.7 462.2 367.0 458.6ZM367.0 458.6 369.7 462.2 379.6 457.8 376.9 454.3ZM376.9 454.3 379.6 457.8 389.6 453.5 386.8 450.0ZM386.8 450.0 389.6 453.5 399.4 449.3 396.6 445.8ZM428.8 436.8 431.9 440.4 441.7 436.3 438.5 432.8ZM438.5 432.8 441.7 436.3 451.4 432.3 448.2 428.8ZM448.2 428.8 451.4 432.3 461.1 428.4 457.9 424.9ZM480.4 420.8 483.8 424.3 493.4 420.6 490.0 417.1ZM490.0 417.1 493.4 420.6 503.0 417.0 499.5 413.5ZM522.1 410.0 525.8 413.6 535.3 410.2 531.6 406.7ZM554.3 403.8 558.2 407.4 567.6 404.4 563.7 400.8ZM577.1 401.4 581.1 405.1 590.5 402.3 586.4 398.6ZM586.4 398.6 590.5 402.3 599.9 399.5 595.8 395.8ZM609.3 396.9 613.5 400.7 622.9 398.1 618.6 394.3ZM632.2 395.7 636.6 399.6 645.9 397.2 641.5 393.3ZM655.2 395.0 659.7 399.0 669.0 396.9 664.4 392.9ZM678.2 394.9 682.9 398.9 692.1 397.0 687.4 393.0ZM701.3 395.2 706.1 399.4 715.3 397.7 710.4 393.6ZM724.4 396.2 729.4 400.5 738.4 399.0 733.4 394.7ZM738.4 399.0 743.5 403.4 752.6 402.0 747.5 397.6ZM761.7 400.7 766.9 405.2 775.9 404.1 770.6 399.6ZM784.9 403.0 790.2 407.6 799.2 406.6 793.8 402.0ZM799.2 406.6 804.7 411.3 813.6 410.4 808.1 405.7ZM822.4 409.6 828.1 414.4 836.9 413.7 831.2 408.9ZM836.9 413.7 842.6 418.6 851.5 417.9 845.7 413.0ZM845.7 413.0 851.5 417.9 860.2 417.4 854.4 412.5ZM860.2 417.4 866.1 422.4 874.8 421.9 868.9 416.9ZM874.8 421.9 880.8 427.0 889.5 426.5 883.5 421.4ZM883.5 421.4 889.5 426.5 898.1 426.2 892.1 421.1ZM898.1 426.2 904.2 431.4 912.8 431.0 906.7 425.9ZM906.7 425.9 912.8 431.0 921.4 430.8 915.2 425.6ZM921.4 430.8 927.6 436.1 936.1 435.9 929.9 430.6ZM929.9 430.6 936.1 435.9 944.6 435.7 938.3 430.4ZM936.1 435.9 942.5 441.3 951.0 441.1 944.6 435.7ZM944.6 435.7 951.0 441.1 959.4 440.9 953.0 435.6ZM959.4 440.9 965.9 446.4 974.3 446.3 967.8 440.9ZM967.8 440.9 974.3 446.3 982.6 446.2 976.1 440.8ZM976.1 440.8 982.6 446.2 990.9 446.2 984.3 440.8ZM974.3 446.3 980.8 451.9 989.2 451.8 982.6 446.2ZM982.6 446.2 989.2 451.8 997.5 451.7 990.9 446.2ZM990.9 446.2 997.5 451.7 1005.7 451.7 999.1 446.2ZM999.1 446.2 1005.7 451.7 1013.9 451.7 1007.2 446.3ZM997.5 451.7 1004.2 457.4 1012.5 457.3 1005.7 451.7ZM1005.7 451.7 1012.5 457.3 1020.7 457.3 1013.9 451.7ZM1013.9 451.7 1020.7 457.3 1028.8 457.3 1022.0 451.8ZM1022.0 451.8 1028.8 457.3 1036.9 457.4 1030.1 451.8ZM1030.1 451.8 1036.9 457.4 1044.9 457.4 1038.1 451.9ZM1038.1 451.9 1044.9 457.4 1052.9 457.5 1046.1 452.0ZM1028.8 457.3 1035.7 463.0 1043.8 463.0 1036.9 457.4ZM1036.9 457.4 1043.8 463.0 1051.8 463.0 1044.9 457.4ZM1044.9 457.4 1051.8 463.0 1059.8 463.1 1052.9 457.5Z"/>
<path fill="#616161" stroke="#616161" d="M389.6 453.5 392.4 457.2 402.3 452.9 399.4 449.3ZM399.4 449.3 402.3 452.9 412.2 448.7 409.3 445.1ZM409.3 445.1 412.2 448.7 422.1 444.5 419.1 440.9ZM419.1 440.9 422.1 444.5 431.9 440.4 428.8 436.8ZM461.1 428.4 464.4 432.0 474.1 428.1 470.8 424.5ZM470.8 424.5 474.1 428.1 483.8 424.3 480.4 420.8ZM503.0 417.0 506.6 420.6 516.2 417.0 512.6 413.5ZM512.6 413.5 516.2 417.0 525.8 413.6 522.1 410.0ZM535.3 410.2 539.1 413.9 548.7 410.6 544.8 407.0ZM544.8 407.0 548.7 410.6 558.2 407.4 554.3 403.8ZM567.6 404.4 571.6 408.1 581.1 405.1 577.1 401.4ZM590.5 402.3 594.7 406.1 604.1 403.3 599.9 399.5ZM599.9 399.5 604.1 403.3 613.5 400.7 609.3 396.9ZM622.9 398.1 627.2 402.0 636.6 399.6 632.2 395.7ZM645.9 397.2 650.4 401.2 659.7 399.0 655.2 395.0ZM669.0 396.9 673.6 401.0 682.9 398.9 678.2 394.9ZM692.1 397.0 696.9 401.3 706.1 399.4 701.3 395.2ZM706.1 399.4 711.0 403.8 720.2 402.1 715.3 397.7ZM715.3 397.7 720.2 402.1 729.4 400.5 724.4 396.2ZM729.4 400.5 734.4 404.9 743.5 403.4 738.4 399.0ZM752.6 402.0 757.8 406.5 766.9 405.2 761.7 400.7ZM766.9 405.2 772.2 409.9 781.3 408.7 775.9 404.1ZM775.9 404.1 781.3 408.7 790.2 407.6 784.9 403.0ZM790.2 407.6 795.7 412.3 804.7 411.3 799.2 406.6ZM813.6 410.4 819.2 415.2 828.1 414.4 822.4 409.6ZM828.1 414.4 833.8 419.4 842.6 418.6 836.9 413.7ZM851.5 417.9 857.3 423.0 866.1 422.4 860.2 417.4ZM866.1 422.4 872.0 427.5 880.8 427.0 874.8 421.9ZM880.8 427.0 886.8 432.3 895.5 431.8 889.5 426.5ZM889.5 426.5 895.5 431.8 904.2 431.4 898.1 426.2ZM904.2 431.4 910.4 436.7 919.0 436.4 912.8 431.0ZM912.8 431.0 919.0 436.4 927.6 436.1 921.4 430.8ZM919.0 436.4 925.3 441.8 933.9 441.5 927.6 436.1ZM927.6 436.1 933.9 441.5 942.5 441.3 936.1 435.9ZM942.5 441.3 948.9 446.8 957.4 446.6 951.0 441.1ZM951.0 441.1 957.4 446.6 965.9 446.4 959.4 440.9ZM957.4 446.6 963.9 452.1 972.4 452.0 965.9 446.4ZM965.9 446.4 972.4 452.0 980.8 451.9 974.3 446.3ZM972.4 452.0 979.0 457.7 987.5 457.5 980.8 451.9ZM980.8 451.9 987.5 457.5 995.9 457.4 989.2 451.8ZM989.2 451.8 995.9 457.4 1004.2 457.4 997.5 451.7ZM995.9 457.4 1002.6 463.1 1011.0 463.1 1004.2 457.4ZM1004.2 457.4 1011.0 463.1 1019.3 463.0 1012.5 457.3ZM1012.5 457.3 1019.3 463.0 1027.5 463.0 1020.7 457.3ZM1020.7 457.3 1027.5 463.0 1035.7 463.0 1028.8 457.3ZM1011.0 463.1 1017.8 468.9 1026.2 468.8 1019.3 463.0ZM1019.3 463.0 1026.2 468.8 1034.4 468.8 1027.5 463.0ZM1027.5 463.0 1034.4 468.8 1042.6 468.7 1035.7 463.0ZM1035.7 463.0 1042.6 468.7 1050.7 468.7 1043.8 463.0ZM1043.8 463.0 1050.7 468.7 1058.8 468.7 1051.8 463.0ZM1051.8 463.0 1058.8 468.7 1066.8 468.7 1059.8 463.1ZM1026.2 468.8 1033.1 474.7 1041.4 474.6 1034.4 468.8ZM1034.4 468.8 1041.4 474.6 1049.6 474.6 1042.6 468.7ZM1042.6 468.7 1049.6 474.6 1057.8 474.5 1050.7 468.7ZM1050.7 468.7 1057.8 474.5 1065.9 474.5 1058.8 468.7ZM1058.8 468.7 1065.9 474.5 1073.9 474.5 1066.8 468.7ZM1049.6 474.6 1056.7 480.5 1064.9 480.5 1057.8 474.5ZM1057.8 474.5 1064.9 480.5 1073.0 480.4 1065.9 474.5ZM1065.9 474.5 1073.0 480.4 1081.1 480.4 1073.9 474.5ZM1064.9 480.5 1072.1 486.4 1080.3 486.4 1073.0 480.4ZM1073.0 480.4 1080.3 486.4 1088.4 486.3 1081.1 480.4ZM1080.3 486.4 1087.6 492.4 1095.7 492.3 1088.4 486.3Z"/>
<path fill="#626262" stroke="#626262" d="M339.6 475.4 342.1 479.3 352.3 474.8 349.7 471.0ZM349.7 471.0 352.3 474.8 362.4 470.4 359.7 466.6ZM359.7 466.6 362.4 470.4 372.4 465.9 369.7 462.2ZM369.7 462.2 372.4 465.9 382.4 461.6 379.6 457.8ZM379.6 457.8 382.4 461.6 392.4 457.2 389.6 453.5ZM431.9 440.4 435.0 444.1 444.9 440.0 441.7 436.3ZM441.7 436.3 444.9 440.0 454.7 435.9 451.4 432.3ZM451.4 432.3 454.7 435.9 464.4 432.0 461.1 428.4ZM483.8 424.3 487.3 428.0 497.0 424.3 493.4 420.6ZM493.4 420.6 497.0 424.3 506.6 420.6 503.0 417.0ZM516.2 417.0 519.9 420.8 529.5 417.3 525.8 413.6ZM525.8 413.6 529.5 417.3 539.1 413.9 535.3 410.2ZM548.7 410.6 552.6 414.4 562.1 411.2 558.2 407.4ZM558.2 407.4 562.1 411.2 571.6 408.1 567.6 404.4ZM581.1 405.1 585.2 409.0 594.7 406.1 590.5 402.3ZM604.1 403.3 608.4 407.3 617.8 404.6 613.5 400.7ZM613.5 400.7 617.8 404.6 627.2 402.0 622.9 398.1ZM627.2 402.0 631.7 406.1 641.1 403.6 636.6 399.6ZM636.6 399.6 641.1 403.6 650.4 401.2 645.9 397.2ZM650.4 401.2 655.0 405.4 664.3 403.1 659.7 399.0ZM659.7 399.0 664.3 403.1 673.6 401.0 669.0 396.9ZM673.6 401.0 678.4 405.2 687.7 403.2 682.9 398.9ZM682.9 398.9 687.7 403.2 696.9 401.3 692.1 397.0ZM696.9 401.3 701.8 405.6 711.0 403.8 706.1 399.4ZM720.2 402.1 725.2 406.5 734.4 404.9 729.4 400.5ZM743.5 403.4 748.7 408.0 757.8 406.5 752.6 402.0ZM757.8 406.5 763.1 411.2 772.2 409.9 766.9 405.2ZM781.3 408.7 786.7 413.5 795.7 412.3 790.2 407.6ZM795.7 412.3 801.2 417.2 810.2 416.2 804.7 411.3ZM804.7 411.3 810.2 416.2 819.2 415.2 813.6 410.4ZM819.2 415.2 824.8 420.2 833.8 419.4 828.1 414.4ZM833.8 419.4 839.5 424.5 848.4 423.7 842.6 418.6ZM842.6 418.6 848.4 423.7 857.3 423.0 851.5 417.9ZM857.3 423.0 863.2 428.2 872.0 427.5 866.1 422.4ZM872.0 427.5 878.0 432.8 886.8 432.3 880.8 427.0ZM886.8 432.3 892.9 437.6 901.7 437.1 895.5 431.8ZM895.5 431.8 901.7 437.1 910.4 436.7 904.2 431.4ZM910.4 436.7 916.6 442.2 925.3 441.8 919.0 436.4ZM925.3 441.8 931.7 447.3 940.3 447.0 933.9 441.5ZM933.9 441.5 940.3 447.0 948.9 446.8 942.5 441.3ZM940.3 447.0 946.8 452.7 955.4 452.4 948.9 446.8ZM948.9 446.8 955.4 452.4 963.9 452.1 957.4 446.6ZM955.4 452.4 961.9 458.1 970.5 457.8 963.9 452.1ZM963.9 452.1 970.5 457.8 979.0 457.7 972.4 452.0ZM970.5 457.8 977.2 463.6 985.7 463.4 979.0 457.7ZM979.0 457.7 985.7 463.4 994.2 463.3 987.5 457.5ZM987.5 457.5 994.2 463.3 1002.6 463.1 995.9 457.4ZM985.7 463.4 992.5 469.3 1001.0 469.1 994.2 463.3ZM994.2 463.3 1001.0 469.1 1009.5 469.0 1002.6 463.1ZM1002.6 463.1 1009.5 469.0 1017.8 468.9 1011.0 463.1ZM1001.0 469.1 1007.9 475.1 1016.4 474.9 1009.5 469.0ZM1009.5 469.0 1016.4 474.9 1024.8 474.8 1017.8 468.9ZM1017.8 468.9 1024.8 474.8 1033.1 474.7 1026.2 468.8ZM1016.4 474.9 1023.4 480.9 1031.8 480.8 1024.8 474.8ZM1024.8 474.8 1031.8 480.8 1040.2 480.6 1033.1 474.7ZM1033.1 474.7 1040.2 480.6 1048.5 480.6 1041.4 474.6ZM1041.4 474.6 1048.5 480.6 1056.7 480.5 1049.6 474.6ZM1023.4 480.9 1030.5 487.0 1038.9 486.8 1031.8 480.8ZM1031.8 480.8 1038.9 486.8 1047.3 486.7 1040.2 480.6ZM1040.2 480.6 1047.3 486.7 1055.6 486.6 1048.5 480.6ZM1048.5 480.6 1055.6 486.6 1063.9 486.5 1056.7 480.5ZM1056.7 480.5 1063.9 486.5 1072.1 486.4 1064.9 480.5ZM1030.5 487.0 1037.6 493.2 1046.1 493.0 1038.9 486.8ZM1038.9 486.8 1046.1 493.0 1054.5 492.8 1047.3 486.7ZM1047.3 486.7 1054.5 492.8 1062.9 492.7 1055.6 486.6ZM1055.6 486.6 1062.9 492.7 1071.2 492.6 1063.9 486.5ZM1063.9 486.5 1071.2 492.6 1079.4 492.5 1072.1 486.4ZM1072.1 486.4 1079.4 492.5 1087.6 492.4 1080.3 486.4Z"/>
<path fill="#636363" stroke="#636363" d="M382.4 461.6 385.3 465.4 395.3 461.1 392.4 457.2ZM392.4 457.2 395.3 461.1 405.3 456.7 402.3 452.9ZM402.3 452.9 405.3 456.7 415.3 452.5 412.2 448.7ZM412.2 448.7 415.3 452.5 425.2 448.2 422.1 444.5ZM422.1 444.5 425.2 448.2 435.0 444.1 431.9 440.4ZM454.7 435.9 458.0 439.7 467.8 435.7 464.4 432.0ZM464.4 432.0 467.8 435.7 477.5 431.8 474.1 428.1ZM474.1 428.1 477.5 431.8 487.3 428.0 483.8 424.3ZM497.0 424.3 500.5 428.1 510.2 424.4 506.6 420.6ZM506.6 420.6 510.2 424.4 519.9 420.8 516.2 417.0ZM539.1 413.9 543.0 417.8 552.6 414.4 548.7 410.6ZM562.1 411.2 566.1 415.2 575.7 412.0 571.6 408.1ZM571.6 408.1 575.7 412.0 585.2 409.0 581.1 405.1ZM594.7 406.1 598.9 410.1 608.4 407.3 604.1 403.3ZM617.8 404.6 622.2 408.7 631.7 406.1 627.2 402.0ZM641.1 403.6 645.6 407.8 655.0 405.4 650.4 401.2ZM664.3 403.1 669.0 407.4 678.4 405.2 673.6 401.0ZM687.7 403.2 692.5 407.6 701.8 405.6 696.9 401.3ZM711.0 403.8 716.0 408.3 725.2 406.5 720.2 402.1ZM725.2 406.5 730.3 411.1 739.5 409.5 734.4 404.9ZM734.4 404.9 739.5 409.5 748.7 408.0 743.5 403.4ZM748.7 408.0 753.9 412.7 763.1 411.2 757.8 406.5ZM772.2 409.9 777.6 414.7 786.7 413.5 781.3 408.7ZM786.7 413.5 792.1 418.4 801.2 417.2 795.7 412.3ZM810.2 416.2 815.8 421.2 824.8 420.2 819.2 415.2ZM824.8 420.2 830.6 425.3 839.5 424.5 833.8 419.4ZM839.5 424.5 845.4 429.7 854.3 428.9 848.4 423.7ZM848.4 423.7 854.3 428.9 863.2 428.2 857.3 423.0ZM863.2 428.2 869.2 433.5 878.0 432.8 872.0 427.5ZM878.0 432.8 884.1 438.2 892.9 437.6 886.8 432.3ZM892.9 437.6 899.1 443.1 907.9 442.6 901.7 437.1ZM901.7 437.1 907.9 442.6 916.6 442.2 910.4 436.7ZM907.9 442.6 914.2 448.2 923.0 447.7 916.6 442.2ZM916.6 442.2 923.0 447.7 931.7 447.3 925.3 441.8ZM923.0 447.7 929.4 453.4 938.1 453.0 931.7 447.3ZM931.7 447.3 938.1 453.0 946.8 452.7 940.3 447.0ZM938.1 453.0 944.6 458.8 953.3 458.4 946.8 452.7ZM946.8 452.7 953.3 458.4 961.9 458.1 955.4 452.4ZM953.3 458.4 959.9 464.2 968.6 463.9 961.9 458.1ZM961.9 458.1 968.6 463.9 977.2 463.6 970.5 457.8ZM968.6 463.9 975.3 469.8 983.9 469.5 977.2 463.6ZM977.2 463.6 983.9 469.5 992.5 469.3 985.7 463.4ZM983.9 469.5 990.8 475.5 999.4 475.3 992.5 469.3ZM992.5 469.3 999.4 475.3 1007.9 475.1 1001.0 469.1ZM990.8 475.5 997.7 481.6 1006.3 481.3 999.4 475.3ZM999.4 475.3 1006.3 481.3 1014.9 481.1 1007.9 475.1ZM1007.9 475.1 1014.9 481.1 1023.4 480.9 1016.4 474.9ZM1006.3 481.3 1013.3 487.5 1021.9 487.2 1014.9 481.1ZM1014.9 481.1 1021.9 487.2 1030.5 487.0 1023.4 480.9ZM1013.3 487.5 1020.5 493.7 1029.1 493.4 1021.9 487.2ZM1021.9 487.2 1029.1 493.4 1037.6 493.2 1030.5 487.0Z"/>
<path fill="#646464" stroke="#646464" d="M342.1 479.3 344.7 483.3 354.9 478.8 352.3 474.8ZM352.3 474.8 354.9 478.8 365.1 474.3 362.4 470.4ZM362.4 470.4 365.1 474.3 375.2 469.9 372.4 465.9ZM372.4 465.9 375.2 469.9 385.3 465.4 382.4 461.6ZM425.2 448.2 428.3 452.1 438.2 447.9 435.0 444.1ZM435.0 444.1 438.2 447.9 448.1 443.8 444.9 440.0ZM444.9 440.0 448.1 443.8 458.0 439.7 454.7 435.9ZM477.5 431.8 481.0 435.7 490.8 431.8 487.3 428.0ZM487.3 428.0 490.8 431.8 500.5 428.1 497.0 424.3ZM519.9 420.8 523.6 424.7 533.3 421.2 529.5 417.3ZM529.5 417.3 533.3 421.2 543.0 417.8 539.1 413.9ZM552.6 414.4 556.5 418.4 566.1 415.2 562.1 411.2ZM585.2 409.0 589.4 413.0 598.9 410.1 594.7 406.1ZM608.4 407.3 612.7 411.4 622.2 408.7 617.8 404.6ZM631.7 406.1 636.1 410.3 645.6 407.8 641.1 403.6ZM655.0 405.4 659.6 409.7 669.0 407.4 664.3 403.1ZM678.4 405.2 683.1 409.7 692.5 407.6 687.7 403.2ZM701.8 405.6 706.7 410.1 716.0 408.3 711.0 403.8ZM716.0 408.3 721.0 412.9 730.3 411.1 725.2 406.5ZM739.5 409.5 744.7 414.2 753.9 412.7 748.7 408.0ZM753.9 412.7 759.2 417.5 768.4 416.0 763.1 411.2ZM763.1 411.2 768.4 416.0 777.6 414.7 772.2 409.9ZM777.6 414.7 783.0 419.6 792.1 418.4 786.7 413.5ZM792.1 418.4 797.7 423.4 806.8 422.2 801.2 417.2ZM801.2 417.2 806.8 422.2 815.8 421.2 810.2 416.2ZM815.8 421.2 821.5 426.3 830.6 425.3 824.8 420.2ZM830.6 425.3 836.4 430.6 845.4 429.7 839.5 424.5ZM845.4 429.7 851.3 435.0 860.2 434.2 854.3 428.9ZM854.3 428.9 860.2 434.2 869.2 433.5 863.2 428.2ZM860.2 434.2 866.3 439.6 875.2 438.9 869.2 433.5ZM869.2 433.5 875.2 438.9 884.1 438.2 878.0 432.8ZM884.1 438.2 890.3 443.7 899.1 443.1 892.9 437.6ZM899.1 443.1 905.4 448.7 914.2 448.2 907.9 442.6ZM914.2 448.2 920.6 453.9 929.4 453.4 923.0 447.7ZM920.6 453.9 927.0 459.7 935.8 459.2 929.4 453.4ZM929.4 453.4 935.8 459.2 944.6 458.8 938.1 453.0ZM935.8 459.2 942.4 465.1 951.2 464.6 944.6 458.8ZM944.6 458.8 951.2 464.6 959.9 464.2 953.3 458.4ZM951.2 464.6 957.9 470.6 966.6 470.2 959.9 464.2ZM959.9 464.2 966.6 470.2 975.3 469.8 968.6 463.9ZM966.6 470.2 973.4 476.2 982.1 475.8 975.3 469.8ZM975.3 469.8 982.1 475.8 990.8 475.5 983.9 469.5ZM973.4 476.2 980.3 482.3 989.0 481.9 982.1 475.8ZM982.1 475.8 989.0 481.9 997.7 481.6 990.8 475.5ZM980.3 482.3 987.2 488.5 996.0 488.1 989.0 481.9ZM989.0 481.9 996.0 488.1 1004.7 487.8 997.7 481.6ZM997.7 481.6 1004.7 487.8 1013.3 487.5 1006.3 481.3ZM996.0 488.1 1003.0 494.4 1011.8 494.0 1004.7 487.8ZM1004.7 487.8 1011.8 494.0 1020.5 493.7 1013.3 487.5Z"/>
<path fill="#656565" stroke="#656565" d="M375.2 469.9 378.1 474.0 388.2 469.5 385.3 465.4ZM385.3 465.4 388.2 469.5 398.3 465.1 395.3 461.1ZM395.3 461.1 398.3 465.1 408.3 460.7 405.3 456.7ZM405.3 456.7 408.3 460.7 418.3 456.4 415.3 452.5ZM415.3 452.5 418.3 456.4 428.3 452.1 425.2 448.2ZM458.0 439.7 461.3 443.7 471.2 439.7 467.8 435.7ZM467.8 435.7 471.2 439.7 481.0 435.7 477.5 431.8ZM500.5 428.1 504.2 432.0 513.9 428.3 510.2 424.4ZM510.2 424.4 513.9 428.3 523.6 424.7 519.9 420.8ZM533.3 421.2 537.2 425.2 546.9 421.8 543.0 417.8ZM543.0 417.8 546.9 421.8 556.5 418.4 552.6 414.4ZM566.1 415.2 570.2 419.3 579.8 416.1 575.7 412.0ZM575.7 412.0 579.8 416.1 589.4 413.0 585.2 409.0ZM598.9 410.1 603.2 414.3 612.7 411.4 608.4 407.3ZM622.2 408.7 626.6 412.9 636.1 410.3 631.7 406.1ZM645.6 407.8 650.2 412.1 659.6 409.7 655.0 405.4ZM669.0 407.4 673.7 411.9 683.1 409.7 678.4 405.2ZM683.1 409.7 688.0 414.2 697.4 412.1 692.5 407.6ZM692.5 407.6 697.4 412.1 706.7 410.1 701.8 405.6ZM706.7 410.1 711.7 414.8 721.0 412.9 716.0 408.3ZM730.3 411.1 735.5 415.9 744.7 414.2 739.5 409.5ZM744.7 414.2 750.0 419.1 759.2 417.5 753.9 412.7ZM768.4 416.0 773.8 421.0 783.0 419.6 777.6 414.7ZM783.0 419.6 788.5 424.7 797.7 423.4 792.1 418.4ZM797.7 423.4 803.3 428.6 812.5 427.4 806.8 422.2ZM806.8 422.2 812.5 427.4 821.5 426.3 815.8 421.2ZM821.5 426.3 827.3 431.6 836.4 430.6 830.6 425.3ZM836.4 430.6 842.2 435.9 851.3 435.0 845.4 429.7ZM851.3 435.0 857.2 440.5 866.3 439.6 860.2 434.2ZM866.3 439.6 872.3 445.2 881.3 444.4 875.2 438.9ZM875.2 438.9 881.3 444.4 890.3 443.7 884.1 438.2ZM881.3 444.4 887.5 450.1 896.5 449.4 890.3 443.7ZM890.3 443.7 896.5 449.4 905.4 448.7 899.1 443.1ZM896.5 449.4 902.8 455.1 911.7 454.5 905.4 448.7ZM905.4 448.7 911.7 454.5 920.6 453.9 914.2 448.2ZM911.7 454.5 918.1 460.3 927.0 459.7 920.6 453.9ZM927.0 459.7 933.5 465.6 942.4 465.1 935.8 459.2ZM933.5 465.6 940.1 471.6 949.0 471.1 942.4 465.1ZM942.4 465.1 949.0 471.1 957.9 470.6 951.2 464.6ZM949.0 471.1 955.7 477.1 964.6 476.6 957.9 470.6ZM957.9 470.6 964.6 476.6 973.4 476.2 966.6 470.2ZM955.7 477.1 962.5 483.3 971.4 482.8 964.6 476.6ZM964.6 476.6 971.4 482.8 980.3 482.3 973.4 476.2ZM971.4 482.8 978.3 489.0 987.2 488.5 980.3 482.3ZM978.3 489.0 985.3 495.4 994.2 494.8 987.2 488.5ZM987.2 488.5 994.2 494.8 1003.0 494.4 996.0 488.1Z"/>
<path fill="#666666" stroke="#666666" d="M344.7 483.3 347.4 487.5 357.7 483.0 354.9 478.8ZM354.9 478.8 357.7 483.0 367.9 478.4 365.1 474.3ZM365.1 474.3 367.9 478.4 378.1 474.0 375.2 469.9ZM428.3 452.1 431.5 456.2 441.5 452.0 438.2 447.9ZM438.2 447.9 441.5 452.0 451.4 447.8 448.1 443.8ZM448.1 443.8 451.4 447.8 461.3 443.7 458.0 439.7ZM481.0 435.7 484.5 439.7 494.4 435.8 490.8 431.8ZM490.8 431.8 494.4 435.8 504.2 432.0 500.5 428.1ZM523.6 424.7 527.4 428.8 537.2 425.2 533.3 421.2ZM556.5 418.4 560.5 422.5 570.2 419.3 566.1 415.2ZM579.8 416.1 584.0 420.3 593.6 417.2 589.4 413.0ZM589.4 413.0 593.6 417.2 603.2 414.3 598.9 410.1ZM603.2 414.3 607.5 418.6 617.1 415.7 612.7 411.4ZM612.7 411.4 617.1 415.7 626.6 412.9 622.2 408.7ZM636.1 410.3 640.7 414.7 650.2 412.1 645.6 407.8ZM650.2 412.1 654.8 416.6 664.3 414.2 659.6 409.7ZM659.6 409.7 664.3 414.2 673.7 411.9 669.0 407.4ZM673.7 411.9 678.5 416.4 688.0 414.2 683.1 409.7ZM697.4 412.1 702.3 416.8 711.7 414.8 706.7 410.1ZM721.0 412.9 726.1 417.7 735.5 415.9 730.3 411.1ZM735.5 415.9 740.7 420.8 750.0 419.1 744.7 414.2ZM759.2 417.5 764.6 422.5 773.8 421.0 768.4 416.0ZM773.8 421.0 779.3 426.1 788.5 424.7 783.0 419.6ZM788.5 424.7 794.1 429.9 803.3 428.6 797.7 423.4ZM812.5 427.4 818.2 432.7 827.3 431.6 821.5 426.3ZM827.3 431.6 833.1 437.0 842.2 435.9 836.4 430.6ZM842.2 435.9 848.2 441.4 857.2 440.5 851.3 435.0ZM857.2 440.5 863.3 446.1 872.3 445.2 866.3 439.6ZM872.3 445.2 878.5 450.9 887.5 450.1 881.3 444.4ZM887.5 450.1 893.8 455.8 902.8 455.1 896.5 449.4ZM893.8 455.8 900.1 461.7 909.2 461.0 902.8 455.1ZM902.8 455.1 909.2 461.0 918.1 460.3 911.7 454.5ZM909.2 461.0 915.6 466.9 924.6 466.2 918.1 460.3ZM918.1 460.3 924.6 466.2 933.5 465.6 927.0 459.7ZM924.6 466.2 931.2 472.3 940.1 471.6 933.5 465.6ZM931.2 472.3 937.8 478.4 946.8 477.7 940.1 471.6ZM940.1 471.6 946.8 477.7 955.7 477.1 949.0 471.1ZM946.8 477.7 953.6 483.9 962.5 483.3 955.7 477.1ZM953.6 483.9 960.4 490.2 969.4 489.6 962.5 483.3ZM962.5 483.3 969.4 489.6 978.3 489.0 971.4 482.8ZM960.4 490.2 967.4 496.6 976.4 495.9 969.4 489.6ZM969.4 489.6 976.4 495.9 985.3 495.4 978.3 489.0Z"/>
<path fill="#676767" stroke="#676767" d="M347.4 487.5 350.1 491.9 360.4 487.3 357.7 483.0ZM357.7 483.0 360.4 487.3 370.7 482.7 367.9 478.4ZM367.9 478.4 370.7 482.7 380.9 478.2 378.1 474.0ZM378.1 474.0 380.9 478.2 391.1 473.7 388.2 469.5ZM388.2 469.5 391.1 473.7 401.3 469.2 398.3 465.1ZM398.3 465.1 401.3 469.2 411.4 464.8 408.3 460.7ZM408.3 460.7 411.4 464.8 421.5 460.5 418.3 456.4ZM418.3 456.4 421.5 460.5 431.5 456.2 428.3 452.1ZM451.4 447.8 454.8 451.9 464.7 447.8 461.3 443.7ZM461.3 443.7 464.7 447.8 474.6 443.7 471.2 439.7ZM471.2 439.7 474.6 443.7 484.5 439.7 481.0 435.7ZM504.2 432.0 507.9 436.2 517.7 432.4 513.9 428.3ZM513.9 428.3 517.7 432.4 527.4 428.8 523.6 424.7ZM537.2 425.2 541.1 429.4 550.8 425.9 546.9 421.8ZM546.9 421.8 550.8 425.9 560.5 422.5 556.5 418.4ZM570.2 419.3 574.3 423.5 584.0 420.3 579.8 416.1ZM593.6 417.2 597.9 421.6 607.5 418.6 603.2 414.3ZM617.1 415.7 621.5 420.1 631.1 417.3 626.6 412.9ZM626.6 412.9 631.1 417.3 640.7 414.7 636.1 410.3ZM640.7 414.7 645.3 419.2 654.8 416.6 650.2 412.1ZM664.3 414.2 669.0 418.8 678.5 416.4 673.7 411.9ZM688.0 414.2 692.9 418.9 702.3 416.8 697.4 412.1ZM702.3 416.8 707.3 421.6 716.8 419.6 711.7 414.8ZM711.7 414.8 716.8 419.6 726.1 417.7 721.0 412.9ZM726.1 417.7 731.3 422.6 740.7 420.8 735.5 415.9ZM740.7 420.8 746.0 425.8 755.3 424.1 750.0 419.1ZM750.0 419.1 755.3 424.1 764.6 422.5 759.2 417.5ZM764.6 422.5 770.0 427.6 779.3 426.1 773.8 421.0ZM779.3 426.1 784.8 431.3 794.1 429.9 788.5 424.7ZM794.1 429.9 799.8 435.2 809.0 433.9 803.3 428.6ZM803.3 428.6 809.0 433.9 818.2 432.7 812.5 427.4ZM818.2 432.7 824.0 438.1 833.1 437.0 827.3 431.6ZM833.1 437.0 839.0 442.5 848.2 441.4 842.2 435.9ZM848.2 441.4 854.2 447.0 863.3 446.1 857.2 440.5ZM863.3 446.1 869.4 451.8 878.5 450.9 872.3 445.2ZM869.4 451.8 875.6 457.6 884.7 456.7 878.5 450.9ZM878.5 450.9 884.7 456.7 893.8 455.8 887.5 450.1ZM884.7 456.7 891.0 462.6 900.1 461.7 893.8 455.8ZM900.1 461.7 906.6 467.7 915.6 466.9 909.2 461.0ZM906.6 467.7 913.1 473.8 922.2 473.0 915.6 466.9ZM915.6 466.9 922.2 473.0 931.2 472.3 924.6 466.2ZM922.2 473.0 928.8 479.1 937.8 478.4 931.2 472.3ZM928.8 479.1 935.5 485.4 944.6 484.6 937.8 478.4ZM937.8 478.4 944.6 484.6 953.6 483.9 946.8 477.7ZM935.5 485.4 942.3 491.7 951.4 490.9 944.6 484.6ZM944.6 484.6 951.4 490.9 960.4 490.2 953.6 483.9ZM951.4 490.9 958.3 497.3 967.4 496.6 960.4 490.2Z"/>
<path fill="#686868" stroke="#686868" d="M421.5 460.5 424.6 464.7 434.7 460.4 431.5 456.2ZM431.5 456.2 434.7 460.4 444.8 456.1 441.5 452.0ZM441.5 452.0 444.8 456.1 454.8 451.9 451.4 447.8ZM474.6 443.7 478.2 448.0 488.1 443.9 484.5 439.7ZM484.5 439.7 488.1 443.9 498.0 440.0 494.4 435.8ZM494.4 435.8 498.0 440.0 507.9 436.2 504.2 432.0ZM517.7 432.4 521.5 436.7 531.3 433.0 527.4 428.8ZM527.4 428.8 531.3 433.0 541.1 429.4 537.2 425.2ZM550.8 425.9 554.8 430.2 564.6 426.8 560.5 422.5ZM560.5 422.5 564.6 426.8 574.3 423.5 570.2 419.3ZM584.0 420.3 588.2 424.7 597.9 421.6 593.6 417.2ZM607.5 418.6 611.9 423.0 621.5 420.1 617.1 415.7ZM631.1 417.3 635.7 421.9 645.3 419.2 640.7 414.7ZM654.8 416.6 659.5 421.3 669.0 418.8 664.3 414.2ZM678.5 416.4 683.4 421.2 692.9 418.9 688.0 414.2ZM692.9 418.9 697.9 423.8 707.3 421.6 702.3 416.8ZM716.8 419.6 721.9 424.5 731.3 422.6 726.1 417.7ZM731.3 422.6 736.5 427.6 746.0 425.8 740.7 420.8ZM755.3 424.1 760.7 429.2 770.0 427.6 764.6 422.5ZM770.0 427.6 775.5 432.9 784.8 431.3 779.3 426.1ZM784.8 431.3 790.5 436.7 799.8 435.2 794.1 429.9ZM799.8 435.2 805.5 440.7 814.8 439.3 809.0 433.9ZM809.0 433.9 814.8 439.3 824.0 438.1 818.2 432.7ZM814.8 439.3 820.6 444.9 829.8 443.6 824.0 438.1ZM824.0 438.1 829.8 443.6 839.0 442.5 833.1 437.0ZM829.8 443.6 835.8 449.3 845.0 448.1 839.0 442.5ZM839.0 442.5 845.0 448.1 854.2 447.0 848.2 441.4ZM845.0 448.1 851.1 453.9 860.3 452.8 854.2 447.0ZM854.2 447.0 860.3 452.8 869.4 451.8 863.3 446.1ZM860.3 452.8 866.4 458.6 875.6 457.6 869.4 451.8ZM875.6 457.6 881.9 463.5 891.0 462.6 884.7 456.7ZM881.9 463.5 888.2 469.6 897.4 468.6 891.0 462.6ZM891.0 462.6 897.4 468.6 906.6 467.7 900.1 461.7ZM897.4 468.6 903.9 474.7 913.1 473.8 906.6 467.7ZM903.9 474.7 910.4 480.9 919.6 480.0 913.1 473.8ZM913.1 473.8 919.6 480.0 928.8 479.1 922.2 473.0ZM919.6 480.0 926.3 486.3 935.5 485.4 928.8 479.1ZM926.3 486.3 933.1 492.6 942.3 491.7 935.5 485.4ZM933.1 492.6 939.9 499.1 949.1 498.2 942.3 491.7ZM942.3 491.7 949.1 498.2 958.3 497.3 951.4 490.9Z"/>
<path fill="#696969" stroke="#696969" d="M350.1 491.9 352.8 496.4 363.2 491.8 360.4 487.3ZM360.4 487.3 363.2 491.8 373.6 487.2 370.7 482.7ZM370.7 482.7 373.6 487.2 383.9 482.6 380.9 478.2ZM380.9 478.2 383.9 482.6 394.1 478.1 391.1 473.7ZM391.1 473.7 394.1 478.1 404.3 473.6 401.3 469.2ZM401.3 469.2 404.3 473.6 414.5 469.1 411.4 464.8ZM411.4 464.8 414.5 469.1 424.6 464.7 421.5 460.5ZM454.8 451.9 458.2 456.2 468.2 452.1 464.7 447.8ZM464.7 447.8 468.2 452.1 478.2 448.0 474.6 443.7ZM498.0 440.0 501.7 444.3 511.6 440.5 507.9 436.2ZM507.9 436.2 511.6 440.5 521.5 436.7 517.7 432.4ZM531.3 433.0 535.2 437.4 545.0 433.7 541.1 429.4ZM541.1 429.4 545.0 433.7 554.8 430.2 550.8 425.9ZM564.6 426.8 568.7 431.2 578.5 427.9 574.3 423.5ZM574.3 423.5 578.5 427.9 588.2 424.7 584.0 420.3ZM597.9 421.6 602.2 426.1 611.9 423.0 607.5 418.6ZM621.5 420.1 626.0 424.7 635.7 421.9 631.1 417.3ZM645.3 419.2 649.9 423.9 659.5 421.3 654.8 416.6ZM659.5 421.3 664.3 426.1 673.9 423.6 669.0 418.8ZM669.0 418.8 673.9 423.6 683.4 421.2 678.5 416.4ZM683.4 421.2 688.3 426.1 697.9 423.8 692.9 418.9ZM707.3 421.6 712.4 426.6 721.9 424.5 716.8 419.6ZM721.9 424.5 727.1 429.6 736.5 427.6 731.3 422.6ZM746.0 425.8 751.3 431.0 760.7 429.2 755.3 424.1ZM760.7 429.2 766.1 434.5 775.5 432.9 770.0 427.6ZM775.5 432.9 781.1 438.2 790.5 436.7 784.8 431.3ZM790.5 436.7 796.1 442.2 805.5 440.7 799.8 435.2ZM805.5 440.7 811.3 446.3 820.6 444.9 814.8 439.3ZM820.6 444.9 826.5 450.6 835.8 449.3 829.8 443.6ZM835.8 449.3 841.8 455.1 851.1 453.9 845.0 448.1ZM851.1 453.9 857.2 459.7 866.4 458.6 860.3 452.8ZM866.4 458.6 872.7 464.6 881.9 463.5 875.6 457.6ZM872.7 464.6 879.0 470.6 888.2 469.6 881.9 463.5ZM888.2 469.6 894.7 475.7 903.9 474.7 897.4 468.6ZM894.7 475.7 901.2 481.9 910.4 480.9 903.9 474.7ZM901.2 481.9 907.8 488.3 917.1 487.2 910.4 480.9ZM910.4 480.9 917.1 487.2 926.3 486.3 919.6 480.0ZM917.1 487.2 923.8 493.6 933.1 492.6 926.3 486.3ZM923.8 493.6 930.6 500.1 939.9 499.1 933.1 492.6Z"/>
<path fill="#6a6a6a" stroke="#6a6a6a" d="M404.3 473.6 407.5 478.1 417.7 473.6 414.5 469.1ZM414.5 469.1 417.7 473.6 427.9 469.2 424.6 464.7ZM424.6 464.7 427.9 469.2 438.0 464.8 434.7 460.4ZM434.7 460.4 438.0 464.8 448.1 460.5 444.8 456.1ZM444.8 456.1 448.1 460.5 458.2 456.2 454.8 451.9ZM478.2 448.0 481.7 452.4 491.7 448.3 488.1 443.9ZM488.1 443.9 491.7 448.3 501.7 444.3 498.0 440.0ZM511.6 440.5 515.4 444.9 525.3 441.1 521.5 436.7ZM521.5 436.7 525.3 441.1 535.2 437.4 531.3 433.0ZM545.0 433.7 549.1 438.2 558.9 434.7 554.8 430.2ZM554.8 430.2 558.9 434.7 568.7 431.2 564.6 426.8ZM578.5 427.9 582.7 432.5 592.5 429.2 588.2 424.7ZM588.2 424.7 592.5 429.2 602.2 426.1 597.9 421.6ZM602.2 426.1 606.6 430.7 616.3 427.6 611.9 423.0ZM611.9 423.0 616.3 427.6 626.0 424.7 621.5 420.1ZM626.0 424.7 630.6 429.4 640.3 426.6 635.7 421.9ZM635.7 421.9 640.3 426.6 649.9 423.9 645.3 419.2ZM649.9 423.9 654.6 428.7 664.3 426.1 659.5 421.3ZM673.9 423.6 678.7 428.5 688.3 426.1 683.4 421.2ZM697.9 423.8 702.9 428.8 712.4 426.6 707.3 421.6ZM712.4 426.6 717.6 431.7 727.1 429.6 721.9 424.5ZM727.1 429.6 732.3 434.8 741.8 432.8 736.5 427.6ZM736.5 427.6 741.8 432.8 751.3 431.0 746.0 425.8ZM751.3 431.0 756.7 436.3 766.1 434.5 760.7 429.2ZM766.1 434.5 771.7 439.9 781.1 438.2 775.5 432.9ZM781.1 438.2 786.7 443.8 796.1 442.2 790.5 436.7ZM796.1 442.2 801.9 447.8 811.3 446.3 805.5 440.7ZM811.3 446.3 817.1 452.0 826.5 450.6 820.6 444.9ZM826.5 450.6 832.5 456.4 841.8 455.1 835.8 449.3ZM841.8 455.1 847.9 461.0 857.2 459.7 851.1 453.9ZM847.9 461.0 854.0 467.0 863.4 465.7 857.2 459.7ZM857.2 459.7 863.4 465.7 872.7 464.6 866.4 458.6ZM863.4 465.7 869.7 471.8 879.0 470.6 872.7 464.6ZM869.7 471.8 876.0 478.0 885.4 476.8 879.0 470.6ZM879.0 470.6 885.4 476.8 894.7 475.7 888.2 469.6ZM885.4 476.8 891.9 483.1 901.2 481.9 894.7 475.7ZM891.9 483.1 898.4 489.4 907.8 488.3 901.2 481.9ZM898.4 489.4 905.1 495.9 914.5 494.7 907.8 488.3ZM907.8 488.3 914.5 494.7 923.8 493.6 917.1 487.2ZM905.1 495.9 911.8 502.5 921.2 501.2 914.5 494.7ZM914.5 494.7 921.2 501.2 930.6 500.1 923.8 493.6Z"/>
<path fill="#6b6b6b" stroke="#6b6b6b" d="M352.8 496.4 355.7 501.1 366.1 496.5 363.2 491.8ZM363.2 491.8 366.1 496.5 376.5 491.8 373.6 487.2ZM373.6 487.2 376.5 491.8 386.9 487.2 383.9 482.6ZM383.9 482.6 386.9 487.2 397.2 482.6 394.1 478.1ZM394.1 478.1 397.2 482.6 407.5 478.1 404.3 473.6ZM448.1 460.5 451.5 465.0 461.6 460.7 458.2 456.2ZM458.2 456.2 461.6 460.7 471.7 456.5 468.2 452.1ZM468.2 452.1 471.7 456.5 481.7 452.4 478.2 448.0ZM491.7 448.3 495.4 452.8 505.4 448.8 501.7 444.3ZM501.7 444.3 505.4 448.8 515.4 444.9 511.6 440.5ZM535.2 437.4 539.2 441.9 549.1 438.2 545.0 433.7ZM558.9 434.7 563.1 439.3 572.9 435.8 568.7 431.2ZM568.7 431.2 572.9 435.8 582.7 432.5 578.5 427.9ZM592.5 429.2 596.8 433.9 606.6 430.7 602.2 426.1ZM616.3 427.6 620.9 432.4 630.6 429.4 626.0 424.7ZM640.3 426.6 645.0 431.5 654.6 428.7 649.9 423.9ZM664.3 426.1 669.1 431.0 678.7 428.5 673.9 423.6ZM678.7 428.5 683.7 433.5 693.3 431.1 688.3 426.1ZM688.3 426.1 693.3 431.1 702.9 428.8 697.9 423.8ZM702.9 428.8 708.0 433.9 717.6 431.7 712.4 426.6ZM717.6 431.7 722.8 437.0 732.3 434.8 727.1 429.6ZM741.8 432.8 747.2 438.2 756.7 436.3 751.3 431.0ZM756.7 436.3 762.2 441.7 771.7 439.9 766.1 434.5ZM771.7 439.9 777.3 445.5 786.7 443.8 781.1 438.2ZM786.7 443.8 792.4 449.4 801.9 447.8 796.1 442.2ZM801.9 447.8 807.7 453.5 817.1 452.0 811.3 446.3ZM817.1 452.0 823.1 457.8 832.5 456.4 826.5 450.6ZM823.1 457.8 829.1 463.8 838.5 462.3 832.5 456.4ZM832.5 456.4 838.5 462.3 847.9 461.0 841.8 455.1ZM838.5 462.3 844.6 468.4 854.0 467.0 847.9 461.0ZM854.0 467.0 860.3 473.1 869.7 471.8 863.4 465.7ZM860.3 473.1 866.6 479.3 876.0 478.0 869.7 471.8ZM876.0 478.0 882.5 484.3 891.9 483.1 885.4 476.8ZM882.5 484.3 889.0 490.7 898.4 489.4 891.9 483.1ZM889.0 490.7 895.6 497.2 905.1 495.9 898.4 489.4ZM895.6 497.2 902.3 503.8 911.8 502.5 905.1 495.9Z"/>
<path fill="#6c6c6c" stroke="#6c6c6c" d="M397.2 482.6 400.3 487.3 410.6 482.7 407.5 478.1ZM407.5 478.1 410.6 482.7 420.9 478.2 417.7 473.6ZM417.7 473.6 420.9 478.2 431.2 473.7 427.9 469.2ZM427.9 469.2 431.2 473.7 441.4 469.3 438.0 464.8ZM438.0 464.8 441.4 469.3 451.5 465.0 448.1 460.5ZM471.7 456.5 475.3 461.1 485.4 456.9 481.7 452.4ZM481.7 452.4 485.4 456.9 495.4 452.8 491.7 448.3ZM515.4 444.9 519.3 449.5 529.2 445.6 525.3 441.1ZM525.3 441.1 529.2 445.6 539.2 441.9 535.2 437.4ZM549.1 438.2 553.1 442.9 563.1 439.3 558.9 434.7ZM572.9 435.8 577.2 440.6 587.0 437.2 582.7 432.5ZM582.7 432.5 587.0 437.2 596.8 433.9 592.5 429.2ZM606.6 430.7 611.1 435.5 620.9 432.4 616.3 427.6ZM630.6 429.4 635.2 434.3 645.0 431.5 640.3 426.6ZM645.0 431.5 649.7 436.5 659.4 433.7 654.6 428.7ZM654.6 428.7 659.4 433.7 669.1 431.0 664.3 426.1ZM669.1 431.0 674.0 436.1 683.7 433.5 678.7 428.5ZM693.3 431.1 698.4 436.3 708.0 433.9 702.9 428.8ZM708.0 433.9 713.2 439.2 722.8 437.0 717.6 431.7ZM722.8 437.0 728.1 442.4 737.7 440.2 732.3 434.8ZM732.3 434.8 737.7 440.2 747.2 438.2 741.8 432.8ZM747.2 438.2 752.7 443.7 762.2 441.7 756.7 436.3ZM762.2 441.7 767.7 447.3 777.3 445.5 771.7 439.9ZM777.3 445.5 782.9 451.1 792.4 449.4 786.7 443.8ZM792.4 449.4 798.2 455.2 807.7 453.5 801.9 447.8ZM798.2 455.2 804.1 461.1 813.6 459.4 807.7 453.5ZM807.7 453.5 813.6 459.4 823.1 457.8 817.1 452.0ZM813.6 459.4 819.6 465.4 829.1 463.8 823.1 457.8ZM829.1 463.8 835.1 469.9 844.6 468.4 838.5 462.3ZM844.6 468.4 850.8 474.5 860.3 473.1 854.0 467.0ZM850.8 474.5 857.1 480.8 866.6 479.3 860.3 473.1ZM857.1 480.8 863.5 487.1 873.0 485.7 866.6 479.3ZM866.6 479.3 873.0 485.7 882.5 484.3 876.0 478.0ZM873.0 485.7 879.5 492.1 889.0 490.7 882.5 484.3ZM879.5 492.1 886.0 498.6 895.6 497.2 889.0 490.7ZM886.0 498.6 892.7 505.2 902.3 503.8 895.6 497.2Z"/>
<path fill="#6d6d6d" stroke="#6d6d6d" d="M355.7 501.1 358.5 506.0 369.0 501.3 366.1 496.5ZM366.1 496.5 369.0 501.3 379.5 496.6 376.5 491.8ZM376.5 491.8 379.5 496.6 389.9 491.9 386.9 487.2ZM386.9 487.2 389.9 491.9 400.3 487.3 397.2 482.6ZM431.2 473.7 434.5 478.5 444.8 474.0 441.4 469.3ZM441.4 469.3 444.8 474.0 455.0 469.7 451.5 465.0ZM451.5 465.0 455.0 469.7 465.2 465.3 461.6 460.7ZM461.6 460.7 465.2 465.3 475.3 461.1 471.7 456.5ZM485.4 456.9 489.1 461.6 499.2 457.5 495.4 452.8ZM495.4 452.8 499.2 457.5 509.2 453.5 505.4 448.8ZM505.4 448.8 509.2 453.5 519.3 449.5 515.4 444.9ZM529.2 445.6 533.2 450.4 543.2 446.6 539.2 441.9ZM539.2 441.9 543.2 446.6 553.1 442.9 549.1 438.2ZM563.1 439.3 567.2 444.1 577.2 440.6 572.9 435.8ZM587.0 437.2 591.4 442.0 601.3 438.7 596.8 433.9ZM596.8 433.9 601.3 438.7 611.1 435.5 606.6 430.7ZM611.1 435.5 615.6 440.4 625.4 437.3 620.9 432.4ZM620.9 432.4 625.4 437.3 635.2 434.3 630.6 429.4ZM635.2 434.3 639.9 439.4 649.7 436.5 645.0 431.5ZM659.4 433.7 664.3 438.8 674.0 436.1 669.1 431.0ZM674.0 436.1 679.0 441.3 688.7 438.7 683.7 433.5ZM683.7 433.5 688.7 438.7 698.4 436.3 693.3 431.1ZM698.4 436.3 703.5 441.6 713.2 439.2 708.0 433.9ZM713.2 439.2 718.4 444.6 728.1 442.4 722.8 437.0ZM728.1 442.4 733.4 447.9 743.1 445.7 737.7 440.2ZM737.7 440.2 743.1 445.7 752.7 443.7 747.2 438.2ZM752.7 443.7 758.2 449.3 767.7 447.3 762.2 441.7ZM767.7 447.3 773.4 453.0 782.9 451.1 777.3 445.5ZM773.4 453.0 779.1 458.8 788.7 456.9 782.9 451.1ZM782.9 451.1 788.7 456.9 798.2 455.2 792.4 449.4ZM788.7 456.9 794.5 462.9 804.1 461.1 798.2 455.2ZM804.1 461.1 810.0 467.1 819.6 465.4 813.6 459.4ZM819.6 465.4 825.6 471.5 835.1 469.9 829.1 463.8ZM825.6 471.5 831.7 477.7 841.3 476.1 835.1 469.9ZM835.1 469.9 841.3 476.1 850.8 474.5 844.6 468.4ZM841.3 476.1 847.5 482.3 857.1 480.8 850.8 474.5ZM847.5 482.3 853.9 488.7 863.5 487.1 857.1 480.8ZM863.5 487.1 869.9 493.6 879.5 492.1 873.0 485.7ZM869.9 493.6 876.4 500.2 886.0 498.6 879.5 492.1ZM876.4 500.2 883.0 506.8 892.7 505.2 886.0 498.6Z"/>
<path fill="#6e6e6e" stroke="#6e6e6e" d="M358.5 506.0 361.4 511.0 372.0 506.3 369.0 501.3ZM369.0 501.3 372.0 506.3 382.5 501.6 379.5 496.6ZM379.5 496.6 382.5 501.6 393.0 496.9 389.9 491.9ZM389.9 491.9 393.0 496.9 403.5 492.2 400.3 487.3ZM400.3 487.3 403.5 492.2 413.9 487.6 410.6 482.7ZM410.6 482.7 413.9 487.6 424.2 483.0 420.9 478.2ZM420.9 478.2 424.2 483.0 434.5 478.5 431.2 473.7ZM465.2 465.3 468.7 470.1 478.9 465.8 475.3 461.1ZM475.3 461.1 478.9 465.8 489.1 461.6 485.4 456.9ZM509.2 453.5 513.1 458.3 523.2 454.3 519.3 449.5ZM519.3 449.5 523.2 454.3 533.2 450.4 529.2 445.6ZM543.2 446.6 547.3 451.4 557.3 447.7 553.1 442.9ZM553.1 442.9 557.3 447.7 567.2 444.1 563.1 439.3ZM577.2 440.6 581.5 445.5 591.4 442.0 587.0 437.2ZM601.3 438.7 605.7 443.7 615.6 440.4 611.1 435.5ZM625.4 437.3 630.1 442.4 639.9 439.4 635.2 434.3ZM649.7 436.5 654.5 441.6 664.3 438.8 659.4 433.7ZM664.3 438.8 669.2 444.1 679.0 441.3 674.0 436.1ZM688.7 438.7 693.8 444.1 703.5 441.6 698.4 436.3ZM703.5 441.6 708.7 447.0 718.4 444.6 713.2 439.2ZM718.4 444.6 723.7 450.2 733.4 447.9 728.1 442.4ZM733.4 447.9 738.8 453.6 748.5 451.3 743.1 445.7ZM743.1 445.7 748.5 451.3 758.2 449.3 752.7 443.7ZM748.5 451.3 754.1 457.1 763.7 455.0 758.2 449.3ZM758.2 449.3 763.7 455.0 773.4 453.0 767.7 447.3ZM763.7 455.0 769.4 460.9 779.1 458.8 773.4 453.0ZM779.1 458.8 784.8 464.8 794.5 462.9 788.7 456.9ZM794.5 462.9 800.4 468.9 810.0 467.1 804.1 461.1ZM810.0 467.1 816.0 473.2 825.6 471.5 819.6 465.4ZM816.0 473.2 822.1 479.5 831.7 477.7 825.6 471.5ZM831.7 477.7 837.9 484.0 847.5 482.3 841.3 476.1ZM837.9 484.0 844.2 490.4 853.9 488.7 847.5 482.3ZM844.2 490.4 850.6 497.0 860.3 495.2 853.9 488.7ZM853.9 488.7 860.3 495.2 869.9 493.6 863.5 487.1ZM860.3 495.2 866.8 501.8 876.4 500.2 869.9 493.6ZM866.8 501.8 873.3 508.5 883.0 506.8 876.4 500.2Z"/>
<path fill="#6f6f6f" stroke="#6f6f6f" d="M424.2 483.0 427.5 488.0 437.9 483.4 434.5 478.5ZM434.5 478.5 437.9 483.4 448.2 478.9 444.8 474.0ZM444.8 474.0 448.2 478.9 458.5 474.5 455.0 469.7ZM455.0 469.7 458.5 474.5 468.7 470.1 465.2 465.3ZM478.9 465.8 482.6 470.8 492.8 466.5 489.1 461.6ZM489.1 461.6 492.8 466.5 503.0 462.3 499.2 457.5ZM499.2 457.5 503.0 462.3 513.1 458.3 509.2 453.5ZM523.2 454.3 527.2 459.2 537.2 455.3 533.2 450.4ZM533.2 450.4 537.2 455.3 547.3 451.4 543.2 446.6ZM557.3 447.7 561.5 452.7 571.5 449.0 567.2 444.1ZM567.2 444.1 571.5 449.0 581.5 445.5 577.2 440.6ZM581.5 445.5 585.8 450.5 595.8 447.0 591.4 442.0ZM591.4 442.0 595.8 447.0 605.7 443.7 601.3 438.7ZM605.7 443.7 610.3 448.8 620.2 445.6 615.6 440.4ZM615.6 440.4 620.2 445.6 630.1 442.4 625.4 437.3ZM630.1 442.4 634.8 447.6 644.7 444.6 639.9 439.4ZM639.9 439.4 644.7 444.6 654.5 441.6 649.7 436.5ZM654.5 441.6 659.4 446.9 669.2 444.1 664.3 438.8ZM669.2 444.1 674.2 449.5 684.0 446.7 679.0 441.3ZM679.0 441.3 684.0 446.7 693.8 444.1 688.7 438.7ZM693.8 444.1 698.9 449.6 708.7 447.0 703.5 441.6ZM708.7 447.0 713.9 452.6 723.7 450.2 718.4 444.6ZM723.7 450.2 729.1 455.9 738.8 453.6 733.4 447.9ZM738.8 453.6 744.3 459.4 754.1 457.1 748.5 451.3ZM754.1 457.1 759.7 463.0 769.4 460.9 763.7 455.0ZM769.4 460.9 775.1 466.8 784.8 464.8 779.1 458.8ZM784.8 464.8 790.7 470.9 800.4 468.9 794.5 462.9ZM790.7 470.9 796.6 477.1 806.3 475.1 800.4 468.9ZM800.4 468.9 806.3 475.1 816.0 473.2 810.0 467.1ZM806.3 475.1 812.4 481.4 822.1 479.5 816.0 473.2ZM812.4 481.4 818.5 487.7 828.2 485.8 822.1 479.5ZM822.1 479.5 828.2 485.8 837.9 484.0 831.7 477.7ZM828.2 485.8 834.5 492.3 844.2 490.4 837.9 484.0ZM834.5 492.3 840.8 498.8 850.6 497.0 844.2 490.4ZM840.8 498.8 847.2 505.5 857.0 503.6 850.6 497.0ZM850.6 497.0 857.0 503.6 866.8 501.8 860.3 495.2ZM847.2 505.5 853.7 512.2 863.5 510.3 857.0 503.6ZM857.0 503.6 863.5 510.3 873.3 508.5 866.8 501.8Z"/>
<path fill="#707070" stroke="#707070" d="M361.4 511.0 364.4 516.3 375.0 511.5 372.0 506.3ZM372.0 506.3 375.0 511.5 385.6 506.7 382.5 501.6ZM382.5 501.6 385.6 506.7 396.2 501.9 393.0 496.9ZM393.0 496.9 396.2 501.9 406.7 497.2 403.5 492.2ZM403.5 492.2 406.7 497.2 417.1 492.6 413.9 487.6ZM413.9 487.6 417.1 492.6 427.5 488.0 424.2 483.0ZM448.2 478.9 451.7 484.0 462.1 479.5 458.5 474.5ZM458.5 474.5 462.1 479.5 472.4 475.1 468.7 470.1ZM468.7 470.1 472.4 475.1 482.6 470.8 478.9 465.8ZM503.0 462.3 506.8 467.3 517.0 463.2 513.1 458.3ZM513.1 458.3 517.0 463.2 527.2 459.2 523.2 454.3ZM537.2 455.3 541.3 460.3 551.4 456.4 547.3 451.4ZM547.3 451.4 551.4 456.4 561.5 452.7 557.3 447.7ZM571.5 449.0 575.8 454.1 585.8 450.5 581.5 445.5ZM595.8 447.0 600.3 452.2 610.3 448.8 605.7 443.7ZM620.2 445.6 624.8 450.8 634.8 447.6 630.1 442.4ZM644.7 444.6 649.5 449.9 659.4 446.9 654.5 441.6ZM659.4 446.9 664.3 452.4 674.2 449.5 669.2 444.1ZM684.0 446.7 689.1 452.2 698.9 449.6 693.8 444.1ZM698.9 449.6 704.1 455.2 713.9 452.6 708.7 447.0ZM713.9 452.6 719.3 458.4 729.1 455.9 723.7 450.2ZM729.1 455.9 734.5 461.7 744.3 459.4 738.8 453.6ZM744.3 459.4 749.9 465.3 759.7 463.0 754.1 457.1ZM759.7 463.0 765.4 469.0 775.1 466.8 769.4 460.9ZM775.1 466.8 780.9 473.0 790.7 470.9 784.8 464.8ZM780.9 473.0 786.8 479.2 796.6 477.1 790.7 470.9ZM796.6 477.1 802.6 483.4 812.4 481.4 806.3 475.1ZM802.6 483.4 808.7 489.8 818.5 487.7 812.4 481.4ZM818.5 487.7 824.7 494.2 834.5 492.3 828.2 485.8ZM824.7 494.2 830.9 500.8 840.8 498.8 834.5 492.3ZM830.9 500.8 837.3 507.5 847.2 505.5 840.8 498.8ZM837.3 507.5 843.7 514.3 853.7 512.2 847.2 505.5Z"/>
<path fill="#717171" stroke="#717171" d="M385.6 506.7 388.8 512.0 399.4 507.2 396.2 501.9ZM396.2 501.9 399.4 507.2 409.9 502.4 406.7 497.2ZM406.7 497.2 409.9 502.4 420.5 497.7 417.1 492.6ZM417.1 492.6 420.5 497.7 430.9 493.1 427.5 488.0ZM427.5 488.0 430.9 493.1 441.4 488.5 437.9 483.4ZM437.9 483.4 441.4 488.5 451.7 484.0 448.2 478.9ZM472.4 475.1 476.1 480.2 486.4 475.8 482.6 470.8ZM482.6 470.8 486.4 475.8 496.6 471.5 492.8 466.5ZM492.8 466.5 496.6 471.5 506.8 467.3 503.0 462.3ZM517.0 463.2 521.0 468.3 531.2 464.3 527.2 459.2ZM527.2 459.2 531.2 464.3 541.3 460.3 537.2 455.3ZM551.4 456.4 555.6 461.6 565.8 457.8 561.5 452.7ZM561.5 452.7 565.8 457.8 575.8 454.1 571.5 449.0ZM575.8 454.1 580.2 459.3 590.3 455.7 585.8 450.5ZM585.8 450.5 590.3 455.7 600.3 452.2 595.8 447.0ZM600.3 452.2 604.8 457.5 614.9 454.1 610.3 448.8ZM610.3 448.8 614.9 454.1 624.8 450.8 620.2 445.6ZM624.8 450.8 629.6 456.2 639.5 453.0 634.8 447.6ZM634.8 447.6 639.5 453.0 649.5 449.9 644.7 444.6ZM649.5 449.9 654.4 455.4 664.3 452.4 659.4 446.9ZM664.3 452.4 669.3 457.9 679.2 455.0 674.2 449.5ZM674.2 449.5 679.2 455.0 689.1 452.2 684.0 446.7ZM689.1 452.2 694.3 457.9 704.1 455.2 698.9 449.6ZM704.1 455.2 709.4 461.0 719.3 458.4 713.9 452.6ZM719.3 458.4 724.7 464.2 734.5 461.7 729.1 455.9ZM734.5 461.7 740.0 467.7 749.9 465.3 744.3 459.4ZM749.9 465.3 755.5 471.3 765.4 469.0 759.7 463.0ZM755.5 471.3 761.2 477.5 771.1 475.2 765.4 469.0ZM765.4 469.0 771.1 475.2 780.9 473.0 775.1 466.8ZM771.1 475.2 776.9 481.4 786.8 479.2 780.9 473.0ZM786.8 479.2 792.7 485.5 802.6 483.4 796.6 477.1ZM792.7 485.5 798.8 492.0 808.7 489.8 802.6 483.4ZM808.7 489.8 814.8 496.3 824.7 494.2 818.5 487.7ZM814.8 496.3 821.0 503.0 830.9 500.8 824.7 494.2ZM821.0 503.0 827.3 509.7 837.3 507.5 830.9 500.8ZM827.3 509.7 833.7 516.5 843.7 514.3 837.3 507.5Z"/>
<path fill="#727272" stroke="#727272" d="M364.4 516.3 367.4 521.6 378.1 516.8 375.0 511.5ZM375.0 511.5 378.1 516.8 388.8 512.0 385.6 506.7ZM430.9 493.1 434.4 498.4 444.9 493.7 441.4 488.5ZM441.4 488.5 444.9 493.7 455.3 489.2 451.7 484.0ZM451.7 484.0 455.3 489.2 465.7 484.6 462.1 479.5ZM462.1 479.5 465.7 484.6 476.1 480.2 472.4 475.1ZM486.4 475.8 490.2 481.1 500.5 476.7 496.6 471.5ZM496.6 471.5 500.5 476.7 510.8 472.5 506.8 467.3ZM506.8 467.3 510.8 472.5 521.0 468.3 517.0 463.2ZM531.2 464.3 535.3 469.5 545.5 465.5 541.3 460.3ZM541.3 460.3 545.5 465.5 555.6 461.6 551.4 456.4ZM555.6 461.6 559.9 466.9 570.1 463.1 565.8 457.8ZM565.8 457.8 570.1 463.1 580.2 459.3 575.8 454.1ZM590.3 455.7 594.8 461.1 604.8 457.5 600.3 452.2ZM614.9 454.1 619.5 459.6 629.6 456.2 624.8 450.8ZM629.6 456.2 634.3 461.8 644.4 458.5 639.5 453.0ZM639.5 453.0 644.4 458.5 654.4 455.4 649.5 449.9ZM654.4 455.4 659.3 461.0 669.3 457.9 664.3 452.4ZM669.3 457.9 674.4 463.7 684.3 460.7 679.2 455.0ZM679.2 455.0 684.3 460.7 694.3 457.9 689.1 452.2ZM694.3 457.9 699.5 463.7 709.4 461.0 704.1 455.2ZM709.4 461.0 714.8 466.9 724.7 464.2 719.3 458.4ZM724.7 464.2 730.1 470.2 740.0 467.7 734.5 461.7ZM730.1 470.2 735.7 476.3 745.6 473.8 740.0 467.7ZM740.0 467.7 745.6 473.8 755.5 471.3 749.9 465.3ZM745.6 473.8 751.3 480.0 761.2 477.5 755.5 471.3ZM761.2 477.5 767.0 483.8 776.9 481.4 771.1 475.2ZM776.9 481.4 782.8 487.8 792.7 485.5 786.8 479.2ZM782.8 487.8 788.8 494.3 798.8 492.0 792.7 485.5ZM788.8 494.3 794.9 500.9 804.9 498.5 798.8 492.0ZM798.8 492.0 804.9 498.5 814.8 496.3 808.7 489.8ZM804.9 498.5 811.1 505.2 821.0 503.0 814.8 496.3ZM811.1 505.2 817.3 512.0 827.3 509.7 821.0 503.0ZM817.3 512.0 823.7 518.8 833.7 516.5 827.3 509.7Z"/>
<path fill="#737373" stroke="#737373" d="M367.4 521.6 370.5 527.2 381.2 522.3 378.1 516.8ZM378.1 516.8 381.2 522.3 392.0 517.4 388.8 512.0ZM388.8 512.0 392.0 517.4 402.6 512.6 399.4 507.2ZM399.4 507.2 402.6 512.6 413.3 507.8 409.9 502.4ZM409.9 502.4 413.3 507.8 423.8 503.1 420.5 497.7ZM420.5 497.7 423.8 503.1 434.4 498.4 430.9 493.1ZM455.3 489.2 458.9 494.5 469.4 490.0 465.7 484.6ZM465.7 484.6 469.4 490.0 479.8 485.5 476.1 480.2ZM476.1 480.2 479.8 485.5 490.2 481.1 486.4 475.8ZM500.5 476.7 504.4 482.1 514.8 477.8 510.8 472.5ZM510.8 472.5 514.8 477.8 525.0 473.6 521.0 468.3ZM521.0 468.3 525.0 473.6 535.3 469.5 531.2 464.3ZM545.5 465.5 549.7 470.9 559.9 466.9 555.6 461.6ZM570.1 463.1 574.5 468.5 584.6 464.7 580.2 459.3ZM580.2 459.3 584.6 464.7 594.8 461.1 590.3 455.7ZM594.8 461.1 599.3 466.6 609.4 463.0 604.8 457.5ZM604.8 457.5 609.4 463.0 619.5 459.6 614.9 454.1ZM619.5 459.6 624.3 465.1 634.3 461.8 629.6 456.2ZM644.4 458.5 649.3 464.2 659.3 461.0 654.4 455.4ZM659.3 461.0 664.3 466.8 674.4 463.7 669.3 457.9ZM674.4 463.7 679.5 469.5 689.5 466.5 684.3 460.7ZM684.3 460.7 689.5 466.5 699.5 463.7 694.3 457.9ZM689.5 466.5 694.8 472.5 704.8 469.6 699.5 463.7ZM699.5 463.7 704.8 469.6 714.8 466.9 709.4 461.0ZM704.8 469.6 710.2 475.7 720.2 472.9 714.8 466.9ZM714.8 466.9 720.2 472.9 730.1 470.2 724.7 464.2ZM720.2 472.9 725.7 479.0 735.7 476.3 730.1 470.2ZM735.7 476.3 741.3 482.6 751.3 480.0 745.6 473.8ZM751.3 480.0 757.0 486.3 767.0 483.8 761.2 477.5ZM757.0 486.3 762.8 492.8 772.9 490.2 767.0 483.8ZM767.0 483.8 772.9 490.2 782.8 487.8 776.9 481.4ZM772.9 490.2 778.8 496.7 788.8 494.3 782.8 487.8ZM778.8 496.7 784.8 503.4 794.9 500.9 788.8 494.3ZM794.9 500.9 801.0 507.6 811.1 505.2 804.9 498.5ZM801.0 507.6 807.2 514.4 817.3 512.0 811.1 505.2ZM807.2 514.4 813.5 521.3 823.7 518.8 817.3 512.0Z"/>
<path fill="#747474" stroke="#747474" d="M392.0 517.4 395.2 523.1 406.0 518.2 402.6 512.6ZM402.6 512.6 406.0 518.2 416.6 513.4 413.3 507.8ZM413.3 507.8 416.6 513.4 427.3 508.6 423.8 503.1ZM423.8 503.1 427.3 508.6 437.9 503.8 434.4 498.4ZM434.4 498.4 437.9 503.8 448.4 499.2 444.9 493.7ZM444.9 493.7 448.4 499.2 458.9 494.5 455.3 489.2ZM479.8 485.5 483.6 490.9 494.0 486.5 490.2 481.1ZM490.2 481.1 494.0 486.5 504.4 482.1 500.5 476.7ZM514.8 477.8 518.8 483.3 529.1 479.1 525.0 473.6ZM525.0 473.6 529.1 479.1 539.4 474.9 535.3 469.5ZM535.3 469.5 539.4 474.9 549.7 470.9 545.5 465.5ZM549.7 470.9 554.0 476.4 564.2 472.4 559.9 466.9ZM559.9 466.9 564.2 472.4 574.5 468.5 570.1 463.1ZM574.5 468.5 578.9 474.1 589.1 470.3 584.6 464.7ZM584.6 464.7 589.1 470.3 599.3 466.6 594.8 461.1ZM599.3 466.6 603.9 472.3 614.1 468.6 609.4 463.0ZM609.4 463.0 614.1 468.6 624.3 465.1 619.5 459.6ZM624.3 465.1 629.0 470.9 639.2 467.5 634.3 461.8ZM634.3 461.8 639.2 467.5 649.3 464.2 644.4 458.5ZM649.3 464.2 654.2 470.0 664.3 466.8 659.3 461.0ZM664.3 466.8 669.4 472.7 679.5 469.5 674.4 463.7ZM679.5 469.5 684.7 475.5 694.8 472.5 689.5 466.5ZM694.8 472.5 700.1 478.6 710.2 475.7 704.8 469.6ZM710.2 475.7 715.6 481.9 725.7 479.0 720.2 472.9ZM725.7 479.0 731.2 485.3 741.3 482.6 735.7 476.3ZM741.3 482.6 747.0 489.0 757.0 486.3 751.3 480.0ZM747.0 489.0 752.7 495.4 762.8 492.8 757.0 486.3ZM762.8 492.8 768.7 499.3 778.8 496.7 772.9 490.2ZM768.7 499.3 774.7 506.0 784.8 503.4 778.8 496.7ZM774.7 506.0 780.7 512.8 790.9 510.1 784.8 503.4ZM784.8 503.4 790.9 510.1 801.0 507.6 794.9 500.9ZM790.9 510.1 797.1 517.0 807.2 514.4 801.0 507.6ZM797.1 517.0 803.3 523.9 813.5 521.3 807.2 514.4Z"/>
<path fill="#757575" stroke="#757575" d="M370.5 527.2 373.6 532.9 384.4 528.0 381.2 522.3ZM381.2 522.3 384.4 528.0 395.2 523.1 392.0 517.4ZM427.3 508.6 430.8 514.2 441.4 509.5 437.9 503.8ZM437.9 503.8 441.4 509.5 452.1 504.7 448.4 499.2ZM448.4 499.2 452.1 504.7 462.6 500.1 458.9 494.5ZM458.9 494.5 462.6 500.1 473.1 495.5 469.4 490.0ZM469.4 490.0 473.1 495.5 483.6 490.9 479.8 485.5ZM494.0 486.5 498.0 492.0 508.4 487.6 504.4 482.1ZM504.4 482.1 508.4 487.6 518.8 483.3 514.8 477.8ZM529.1 479.1 533.3 484.7 543.7 480.5 539.4 474.9ZM539.4 474.9 543.7 480.5 554.0 476.4 549.7 470.9ZM564.2 472.4 568.6 478.0 578.9 474.1 574.5 468.5ZM589.1 470.3 593.7 476.0 603.9 472.3 599.3 466.6ZM614.1 468.6 618.9 474.4 629.0 470.9 624.3 465.1ZM629.0 470.9 633.9 476.8 644.1 473.3 639.2 467.5ZM639.2 467.5 644.1 473.3 654.2 470.0 649.3 464.2ZM644.1 473.3 649.1 479.3 659.3 475.9 654.2 470.0ZM654.2 470.0 659.3 475.9 669.4 472.7 664.3 466.8ZM669.4 472.7 674.6 478.7 684.7 475.5 679.5 469.5ZM684.7 475.5 690.0 481.7 700.1 478.6 694.8 472.5ZM700.1 478.6 705.5 484.9 715.6 481.9 710.2 475.7ZM715.6 481.9 721.1 488.2 731.2 485.3 725.7 479.0ZM721.1 488.2 726.7 494.7 736.9 491.7 731.2 485.3ZM731.2 485.3 736.9 491.7 747.0 489.0 741.3 482.6ZM736.9 491.7 742.6 498.3 752.7 495.4 747.0 489.0ZM742.6 498.3 748.4 504.9 758.6 502.0 752.7 495.4ZM752.7 495.4 758.6 502.0 768.7 499.3 762.8 492.8ZM758.6 502.0 764.5 508.8 774.7 506.0 768.7 499.3ZM764.5 508.8 770.5 515.6 780.7 512.8 774.7 506.0ZM770.5 515.6 776.6 522.5 786.9 519.7 780.7 512.8ZM780.7 512.8 786.9 519.7 797.1 517.0 790.9 510.1ZM776.6 522.5 782.7 529.5 793.1 526.7 786.9 519.7ZM786.9 519.7 793.1 526.7 803.3 523.9 797.1 517.0Z"/>
<path fill="#767676" stroke="#767676" d="M373.6 532.9 376.8 538.8 387.7 533.8 384.4 528.0ZM384.4 528.0 387.7 533.8 398.5 528.9 395.2 523.1ZM395.2 523.1 398.5 528.9 409.3 524.0 406.0 518.2ZM406.0 518.2 409.3 524.0 420.1 519.1 416.6 513.4ZM416.6 513.4 420.1 519.1 430.8 514.2 427.3 508.6ZM452.1 504.7 455.7 510.5 466.4 505.8 462.6 500.1ZM462.6 500.1 466.4 505.8 476.9 501.1 473.1 495.5ZM473.1 495.5 476.9 501.1 487.5 496.5 483.6 490.9ZM483.6 490.9 487.5 496.5 498.0 492.0 494.0 486.5ZM498.0 492.0 501.9 497.8 512.4 493.3 508.4 487.6ZM508.4 487.6 512.4 493.3 522.9 488.9 518.8 483.3ZM518.8 483.3 522.9 488.9 533.3 484.7 529.1 479.1ZM533.3 484.7 537.5 490.4 547.9 486.2 543.7 480.5ZM543.7 480.5 547.9 486.2 558.3 482.1 554.0 476.4ZM554.0 476.4 558.3 482.1 568.6 478.0 564.2 472.4ZM568.6 478.0 573.1 483.8 583.4 479.8 578.9 474.1ZM578.9 474.1 583.4 479.8 593.7 476.0 589.1 470.3ZM593.7 476.0 598.3 481.9 608.6 478.1 603.9 472.3ZM603.9 472.3 608.6 478.1 618.9 474.4 614.1 468.6ZM618.9 474.4 623.7 480.3 633.9 476.8 629.0 470.9ZM633.9 476.8 638.8 482.8 649.1 479.3 644.1 473.3ZM649.1 479.3 654.1 485.4 664.4 482.0 659.3 475.9ZM659.3 475.9 664.4 482.0 674.6 478.7 669.4 472.7ZM664.4 482.0 669.5 488.2 679.8 484.9 674.6 478.7ZM674.6 478.7 679.8 484.9 690.0 481.7 684.7 475.5ZM679.8 484.9 685.1 491.2 695.3 488.0 690.0 481.7ZM690.0 481.7 695.3 488.0 705.5 484.9 700.1 478.6ZM695.3 488.0 700.7 494.4 710.9 491.2 705.5 484.9ZM705.5 484.9 710.9 491.2 721.1 488.2 715.6 481.9ZM710.9 491.2 716.5 497.7 726.7 494.7 721.1 488.2ZM726.7 494.7 732.4 501.2 742.6 498.3 736.9 491.7ZM732.4 501.2 738.1 507.9 748.4 504.9 742.6 498.3ZM748.4 504.9 754.2 511.7 764.5 508.8 758.6 502.0ZM754.2 511.7 760.2 518.5 770.5 515.6 764.5 508.8ZM760.2 518.5 766.2 525.5 776.6 522.5 770.5 515.6ZM766.2 525.5 772.3 532.6 782.7 529.5 776.6 522.5Z"/>
<path fill="#777777" stroke="#777777" d="M376.8 538.8 380.0 544.9 391.0 539.9 387.7 533.8ZM387.7 533.8 391.0 539.9 401.9 534.9 398.5 528.9ZM398.5 528.9 401.9 534.9 412.8 529.9 409.3 524.0ZM409.3 524.0 412.8 529.9 423.6 525.0 420.1 519.1ZM420.1 519.1 423.6 525.0 434.3 520.1 430.8 514.2ZM430.8 514.2 434.3 520.1 445.1 515.2 441.4 509.5ZM441.4 509.5 445.1 515.2 455.7 510.5 452.1 504.7ZM466.4 505.8 470.2 511.6 480.8 506.9 476.9 501.1ZM476.9 501.1 480.8 506.9 491.4 502.3 487.5 496.5ZM487.5 496.5 491.4 502.3 501.9 497.8 498.0 492.0ZM512.4 493.3 516.6 499.2 527.1 494.7 522.9 488.9ZM522.9 488.9 527.1 494.7 537.5 490.4 533.3 484.7ZM547.9 486.2 552.3 492.1 562.7 487.9 558.3 482.1ZM558.3 482.1 562.7 487.9 573.1 483.8 568.6 478.0ZM573.1 483.8 577.6 489.7 588.0 485.7 583.4 479.8ZM583.4 479.8 588.0 485.7 598.3 481.9 593.7 476.0ZM598.3 481.9 603.0 487.8 613.4 484.0 608.6 478.1ZM608.6 478.1 613.4 484.0 623.7 480.3 618.9 474.4ZM613.4 484.0 618.2 490.1 628.5 486.4 623.7 480.3ZM623.7 480.3 628.5 486.4 638.8 482.8 633.9 476.8ZM638.8 482.8 643.8 488.9 654.1 485.4 649.1 479.3ZM654.1 485.4 659.2 491.7 669.5 488.2 664.4 482.0ZM669.5 488.2 674.8 494.6 685.1 491.2 679.8 484.9ZM685.1 491.2 690.4 497.6 700.7 494.4 695.3 488.0ZM700.7 494.4 706.2 500.9 716.5 497.7 710.9 491.2ZM706.2 500.9 711.8 507.5 722.1 504.3 716.5 497.7ZM716.5 497.7 722.1 504.3 732.4 501.2 726.7 494.7ZM722.1 504.3 727.8 511.0 738.1 507.9 732.4 501.2ZM727.8 511.0 733.6 517.9 743.9 514.7 738.1 507.9ZM738.1 507.9 743.9 514.7 754.2 511.7 748.4 504.9ZM743.9 514.7 749.8 521.6 760.2 518.5 754.2 511.7ZM749.8 521.6 755.8 528.6 766.2 525.5 760.2 518.5ZM755.8 528.6 761.9 535.7 772.3 532.6 766.2 525.5Z"/>
<path fill="#787878" stroke="#787878" d="M401.9 534.9 405.3 541.0 416.2 536.0 412.8 529.9ZM412.8 529.9 416.2 536.0 427.1 531.0 423.6 525.0ZM423.6 525.0 427.1 531.0 438.0 526.1 434.3 520.1ZM434.3 520.1 438.0 526.1 448.7 521.2 445.1 515.2ZM445.1 515.2 448.7 521.2 459.5 516.4 455.7 510.5ZM455.7 510.5 459.5 516.4 470.2 511.6 466.4 505.8ZM480.8 506.9 484.7 512.9 495.4 508.2 491.4 502.3ZM491.4 502.3 495.4 508.2 506.0 503.7 501.9 497.8ZM501.9 497.8 506.0 503.7 516.6 499.2 512.4 493.3ZM516.6 499.2 520.7 505.2 531.3 500.7 527.1 494.7ZM527.1 494.7 531.3 500.7 541.8 496.3 537.5 490.4ZM537.5 490.4 541.8 496.3 552.3 492.1 547.9 486.2ZM552.3 492.1 556.7 498.1 567.2 493.9 562.7 487.9ZM562.7 487.9 567.2 493.9 577.6 489.7 573.1 483.8ZM577.6 489.7 582.2 495.8 592.6 491.8 588.0 485.7ZM588.0 485.7 592.6 491.8 603.0 487.8 598.3 481.9ZM603.0 487.8 607.8 494.0 618.2 490.1 613.4 484.0ZM618.2 490.1 623.1 496.4 633.5 492.6 628.5 486.4ZM628.5 486.4 633.5 492.6 643.8 488.9 638.8 482.8ZM643.8 488.9 648.9 495.2 659.2 491.7 654.1 485.4ZM659.2 491.7 664.4 498.0 674.8 494.6 669.5 488.2ZM674.8 494.6 680.1 501.0 690.4 497.6 685.1 491.2ZM680.1 501.0 685.5 507.6 695.9 504.2 690.4 497.6ZM690.4 497.6 695.9 504.2 706.2 500.9 700.7 494.4ZM695.9 504.2 701.4 510.9 711.8 507.5 706.2 500.9ZM711.8 507.5 717.4 514.3 727.8 511.0 722.1 504.3ZM717.4 514.3 723.1 521.2 733.6 517.9 727.8 511.0ZM723.1 521.2 728.9 528.2 739.4 524.8 733.6 517.9ZM733.6 517.9 739.4 524.8 749.8 521.6 743.9 514.7ZM739.4 524.8 745.3 531.9 755.8 528.6 749.8 521.6ZM745.3 531.9 751.3 539.0 761.9 535.7 755.8 528.6Z"/>
<path fill="#797979" stroke="#797979" d="M380.0 544.9 383.3 551.1 394.3 546.1 391.0 539.9ZM391.0 539.9 394.3 546.1 405.3 541.0 401.9 534.9ZM427.1 531.0 430.7 537.2 441.6 532.2 438.0 526.1ZM438.0 526.1 441.6 532.2 452.5 527.3 448.7 521.2ZM448.7 521.2 452.5 527.3 463.3 522.4 459.5 516.4ZM459.5 516.4 463.3 522.4 474.0 517.6 470.2 511.6ZM470.2 511.6 474.0 517.6 484.7 512.9 480.8 506.9ZM495.4 508.2 499.4 514.3 510.1 509.7 506.0 503.7ZM506.0 503.7 510.1 509.7 520.7 505.2 516.6 499.2ZM531.3 500.7 535.6 506.8 546.2 502.4 541.8 496.3ZM541.8 496.3 546.2 502.4 556.7 498.1 552.3 492.1ZM556.7 498.1 561.2 504.2 571.7 500.0 567.2 493.9ZM567.2 493.9 571.7 500.0 582.2 495.8 577.6 489.7ZM582.2 495.8 586.8 502.1 597.3 498.0 592.6 491.8ZM592.6 491.8 597.3 498.0 607.8 494.0 603.0 487.8ZM607.8 494.0 612.6 500.3 623.1 496.4 618.2 490.1ZM623.1 496.4 628.0 502.8 638.5 498.9 633.5 492.6ZM633.5 492.6 638.5 498.9 648.9 495.2 643.8 488.9ZM638.5 498.9 643.6 505.4 654.0 501.7 648.9 495.2ZM648.9 495.2 654.0 501.7 664.4 498.0 659.2 491.7ZM654.0 501.7 659.2 508.2 669.7 504.6 664.4 498.0ZM664.4 498.0 669.7 504.6 680.1 501.0 674.8 494.6ZM669.7 504.6 675.0 511.2 685.5 507.6 680.1 501.0ZM685.5 507.6 690.9 514.4 701.4 510.9 695.9 504.2ZM690.9 514.4 696.4 521.2 707.0 517.7 701.4 510.9ZM701.4 510.9 707.0 517.7 717.4 514.3 711.8 507.5ZM707.0 517.7 712.6 524.6 723.1 521.2 717.4 514.3ZM712.6 524.6 718.3 531.6 728.9 528.2 723.1 521.2ZM718.3 531.6 724.2 538.8 734.8 535.3 728.9 528.2ZM728.9 528.2 734.8 535.3 745.3 531.9 739.4 524.8ZM724.2 538.8 730.1 546.0 740.7 542.5 734.8 535.3ZM734.8 535.3 740.7 542.5 751.3 539.0 745.3 531.9Z"/>
<path fill="#7a7a7a" stroke="#7a7a7a" d="M383.3 551.1 386.6 557.6 397.7 552.4 394.3 546.1ZM394.3 546.1 397.7 552.4 408.8 547.3 405.3 541.0ZM405.3 541.0 408.8 547.3 419.8 542.2 416.2 536.0ZM416.2 536.0 419.8 542.2 430.7 537.2 427.1 531.0ZM441.6 532.2 445.4 538.6 456.3 533.6 452.5 527.3ZM452.5 527.3 456.3 533.6 467.1 528.7 463.3 522.4ZM463.3 522.4 467.1 528.7 478.0 523.8 474.0 517.6ZM474.0 517.6 478.0 523.8 488.7 519.0 484.7 512.9ZM484.7 512.9 488.7 519.0 499.4 514.3 495.4 508.2ZM499.4 514.3 503.5 520.6 514.3 515.9 510.1 509.7ZM510.1 509.7 514.3 515.9 524.9 511.3 520.7 505.2ZM520.7 505.2 524.9 511.3 535.6 506.8 531.3 500.7ZM535.6 506.8 539.9 513.1 550.6 508.6 546.2 502.4ZM546.2 502.4 550.6 508.6 561.2 504.2 556.7 498.1ZM561.2 504.2 565.7 510.6 576.3 506.3 571.7 500.0ZM571.7 500.0 576.3 506.3 586.8 502.1 582.2 495.8ZM586.8 502.1 591.6 508.4 602.1 504.3 597.3 498.0ZM597.3 498.0 602.1 504.3 612.6 500.3 607.8 494.0ZM602.1 504.3 607.0 510.8 617.5 506.7 612.6 500.3ZM612.6 500.3 617.5 506.7 628.0 502.8 623.1 496.4ZM617.5 506.7 622.5 513.3 633.0 509.3 628.0 502.8ZM628.0 502.8 633.0 509.3 643.6 505.4 638.5 498.9ZM643.6 505.4 648.7 512.0 659.2 508.2 654.0 501.7ZM648.7 512.0 653.9 518.8 664.5 514.9 659.2 508.2ZM659.2 508.2 664.5 514.9 675.0 511.2 669.7 504.6ZM664.5 514.9 669.8 521.7 680.4 518.0 675.0 511.2ZM675.0 511.2 680.4 518.0 690.9 514.4 685.5 507.6ZM680.4 518.0 685.9 524.9 696.4 521.2 690.9 514.4ZM685.9 524.9 691.4 531.9 702.1 528.2 696.4 521.2ZM696.4 521.2 702.1 528.2 712.6 524.6 707.0 517.7ZM702.1 528.2 707.7 535.3 718.3 531.6 712.6 524.6ZM707.7 535.3 713.5 542.5 724.2 538.8 718.3 531.6ZM713.5 542.5 719.3 549.8 730.1 546.0 724.2 538.8Z"/>
<path fill="#7b7b7b" stroke="#7b7b7b" d="M386.6 557.6 390.0 564.1 401.2 558.9 397.7 552.4ZM397.7 552.4 401.2 558.9 412.3 553.8 408.8 547.3ZM408.8 547.3 412.3 553.8 423.4 548.7 419.8 542.2ZM419.8 542.2 423.4 548.7 434.4 543.6 430.7 537.2ZM430.7 537.2 434.4 543.6 445.4 538.6 441.6 532.2ZM456.3 533.6 460.1 540.0 471.1 535.1 467.1 528.7ZM467.1 528.7 471.1 535.1 481.9 530.2 478.0 523.8ZM478.0 523.8 481.9 530.2 492.8 525.3 488.7 519.0ZM488.7 519.0 492.8 525.3 503.5 520.6 499.4 514.3ZM503.5 520.6 507.7 527.0 518.5 522.3 514.3 515.9ZM514.3 515.9 518.5 522.3 529.2 517.6 524.9 511.3ZM524.9 511.3 529.2 517.6 539.9 513.1 535.6 506.8ZM539.9 513.1 544.3 519.5 555.0 515.0 550.6 508.6ZM550.6 508.6 555.0 515.0 565.7 510.6 561.2 504.2ZM565.7 510.6 570.3 517.0 581.0 512.7 576.3 506.3ZM576.3 506.3 581.0 512.7 591.6 508.4 586.8 502.1ZM581.0 512.7 585.7 519.2 596.3 514.9 591.6 508.4ZM591.6 508.4 596.3 514.9 607.0 510.8 602.1 504.3ZM607.0 510.8 611.9 517.4 622.5 513.3 617.5 506.7ZM622.5 513.3 627.5 520.0 638.1 515.9 633.0 509.3ZM633.0 509.3 638.1 515.9 648.7 512.0 643.6 505.4ZM638.1 515.9 643.3 522.7 653.9 518.8 648.7 512.0ZM653.9 518.8 659.2 525.6 669.8 521.7 664.5 514.9ZM659.2 525.6 664.6 532.6 675.3 528.7 669.8 521.7ZM669.8 521.7 675.3 528.7 685.9 524.9 680.4 518.0ZM675.3 528.7 680.8 535.7 691.4 531.9 685.9 524.9ZM680.8 535.7 686.3 542.9 697.1 539.0 691.4 531.9ZM691.4 531.9 697.1 539.0 707.7 535.3 702.1 528.2ZM686.3 542.9 692.0 550.2 702.8 546.3 697.1 539.0ZM697.1 539.0 702.8 546.3 713.5 542.5 707.7 535.3ZM692.0 550.2 697.7 557.6 708.5 553.6 702.8 546.3ZM702.8 546.3 708.5 553.6 719.3 549.8 713.5 542.5Z"/>
<path fill="#7c7c7c" stroke="#7c7c7c" d="M390.0 564.1 393.5 570.9 404.7 565.6 401.2 558.9ZM401.2 558.9 404.7 565.6 415.9 560.4 412.3 553.8ZM412.3 553.8 415.9 560.4 427.0 555.3 423.4 548.7ZM423.4 548.7 427.0 555.3 438.1 550.1 434.4 543.6ZM434.4 543.6 438.1 550.1 449.2 545.1 445.4 538.6ZM445.4 538.6 449.2 545.1 460.1 540.0 456.3 533.6ZM460.1 540.0 464.0 546.6 475.0 541.6 471.1 535.1ZM471.1 535.1 475.0 541.6 486.0 536.7 481.9 530.2ZM481.9 530.2 486.0 536.7 496.9 531.8 492.8 525.3ZM492.8 525.3 496.9 531.8 507.7 527.0 503.5 520.6ZM507.7 527.0 511.9 533.5 522.8 528.8 518.5 522.3ZM518.5 522.3 522.8 528.8 533.6 524.1 529.2 517.6ZM529.2 517.6 533.6 524.1 544.3 519.5 539.9 513.1ZM533.6 524.1 538.0 530.7 548.8 526.0 544.3 519.5ZM544.3 519.5 548.8 526.0 559.6 521.5 555.0 515.0ZM555.0 515.0 559.6 521.5 570.3 517.0 565.7 510.6ZM559.6 521.5 564.2 528.1 575.0 523.6 570.3 517.0ZM570.3 517.0 575.0 523.6 585.7 519.2 581.0 512.7ZM585.7 519.2 590.5 525.9 601.2 521.6 596.3 514.9ZM596.3 514.9 601.2 521.6 611.9 517.4 607.0 510.8ZM601.2 521.6 606.1 528.4 616.8 524.1 611.9 517.4ZM611.9 517.4 616.8 524.1 627.5 520.0 622.5 513.3ZM616.8 524.1 621.9 531.0 632.6 526.8 627.5 520.0ZM627.5 520.0 632.6 526.8 643.3 522.7 638.1 515.9ZM632.6 526.8 637.8 533.8 648.5 529.6 643.3 522.7ZM643.3 522.7 648.5 529.6 659.2 525.6 653.9 518.8ZM648.5 529.6 653.8 536.7 664.6 532.6 659.2 525.6ZM653.8 536.7 659.2 543.8 670.0 539.7 664.6 532.6ZM664.6 532.6 670.0 539.7 680.8 535.7 675.3 528.7ZM670.0 539.7 675.5 546.9 686.3 542.9 680.8 535.7ZM675.5 546.9 681.1 554.3 692.0 550.2 686.3 542.9ZM681.1 554.3 686.8 561.7 697.7 557.6 692.0 550.2Z"/>
<path fill="#7d7d7d" stroke="#7d7d7d" d="M393.5 570.9 397.0 577.8 408.3 572.5 404.7 565.6ZM404.7 565.6 408.3 572.5 419.6 567.2 415.9 560.4ZM415.9 560.4 419.6 567.2 430.8 562.0 427.0 555.3ZM427.0 555.3 430.8 562.0 441.9 556.8 438.1 550.1ZM438.1 550.1 441.9 556.8 453.0 551.7 449.2 545.1ZM449.2 545.1 453.0 551.7 464.0 546.6 460.1 540.0ZM453.0 551.7 456.9 558.5 468.0 553.4 464.0 546.6ZM464.0 546.6 468.0 553.4 479.1 548.3 475.0 541.6ZM475.0 541.6 479.1 548.3 490.1 543.3 486.0 536.7ZM486.0 536.7 490.1 543.3 501.0 538.4 496.9 531.8ZM496.9 531.8 501.0 538.4 511.9 533.5 507.7 527.0ZM501.0 538.4 505.3 545.1 516.2 540.2 511.9 533.5ZM511.9 533.5 516.2 540.2 527.1 535.4 522.8 528.8ZM522.8 528.8 527.1 535.4 538.0 530.7 533.6 524.1ZM538.0 530.7 542.5 537.4 553.4 532.7 548.8 526.0ZM548.8 526.0 553.4 532.7 564.2 528.1 559.6 521.5ZM553.4 532.7 558.0 539.6 568.9 534.9 564.2 528.1ZM564.2 528.1 568.9 534.9 579.7 530.4 575.0 523.6ZM575.0 523.6 579.7 530.4 590.5 525.9 585.7 519.2ZM579.7 530.4 584.5 537.3 595.3 532.8 590.5 525.9ZM590.5 525.9 595.3 532.8 606.1 528.4 601.2 521.6ZM595.3 532.8 600.2 539.8 611.1 535.3 606.1 528.4ZM606.1 528.4 611.1 535.3 621.9 531.0 616.8 524.1ZM611.1 535.3 616.2 542.4 627.0 538.0 621.9 531.0ZM621.9 531.0 627.0 538.0 637.8 533.8 632.6 526.8ZM627.0 538.0 632.2 545.1 643.0 540.8 637.8 533.8ZM637.8 533.8 643.0 540.8 653.8 536.7 648.5 529.6ZM632.2 545.1 637.4 552.4 648.4 548.0 643.0 540.8ZM643.0 540.8 648.4 548.0 659.2 543.8 653.8 536.7ZM648.4 548.0 653.8 555.4 664.7 551.1 659.2 543.8ZM659.2 543.8 664.7 551.1 675.5 546.9 670.0 539.7ZM653.8 555.4 659.2 562.8 670.2 558.5 664.7 551.1ZM664.7 551.1 670.2 558.5 681.1 554.3 675.5 546.9ZM659.2 562.8 664.8 570.3 675.8 566.0 670.2 558.5ZM670.2 558.5 675.8 566.0 686.8 561.7 681.1 554.3Z"/>
<path fill="#7e7e7e" stroke="#7e7e7e" d="M397.0 577.8 400.6 584.9 411.9 579.5 408.3 572.5ZM408.3 572.5 411.9 579.5 423.3 574.2 419.6 567.2ZM419.6 567.2 423.3 574.2 434.5 568.9 430.8 562.0ZM430.8 562.0 434.5 568.9 445.8 563.7 441.9 556.8ZM441.9 556.8 445.8 563.7 456.9 558.5 453.0 551.7ZM445.8 563.7 449.7 570.7 460.9 565.5 456.9 558.5ZM456.9 558.5 460.9 565.5 472.1 560.3 468.0 553.4ZM468.0 553.4 472.1 560.3 483.2 555.2 479.1 548.3ZM479.1 548.3 483.2 555.2 494.2 550.1 490.1 543.3ZM490.1 543.3 494.2 550.1 505.3 545.1 501.0 538.4ZM494.2 550.1 498.5 557.1 509.6 552.1 505.3 545.1ZM505.3 545.1 509.6 552.1 520.6 547.1 516.2 540.2ZM516.2 540.2 520.6 547.1 531.6 542.2 527.1 535.4ZM527.1 535.4 531.6 542.2 542.5 537.4 538.0 530.7ZM531.6 542.2 536.0 549.2 547.0 544.3 542.5 537.4ZM542.5 537.4 547.0 544.3 558.0 539.6 553.4 532.7ZM558.0 539.6 562.6 546.6 573.6 541.9 568.9 534.9ZM568.9 534.9 573.6 541.9 584.5 537.3 579.7 530.4ZM573.6 541.9 578.4 548.9 589.3 544.3 584.5 537.3ZM584.5 537.3 589.3 544.3 600.2 539.8 595.3 532.8ZM589.3 544.3 594.3 551.5 605.2 546.9 600.2 539.8ZM600.2 539.8 605.2 546.9 616.2 542.4 611.1 535.3ZM605.2 546.9 610.3 554.1 621.3 549.6 616.2 542.4ZM616.2 542.4 621.3 549.6 632.2 545.1 627.0 538.0ZM610.3 554.1 615.5 561.4 626.5 556.9 621.3 549.6ZM621.3 549.6 626.5 556.9 637.4 552.4 632.2 545.1ZM626.5 556.9 631.8 564.3 642.8 559.8 637.4 552.4ZM637.4 552.4 642.8 559.8 653.8 555.4 648.4 548.0ZM631.8 564.3 637.1 571.8 648.2 567.3 642.8 559.8ZM642.8 559.8 648.2 567.3 659.2 562.8 653.8 555.4ZM637.1 571.8 642.5 579.5 653.7 574.9 648.2 567.3ZM648.2 567.3 653.7 574.9 664.8 570.3 659.2 562.8Z"/>
<path fill="#7f7f7f" stroke="#7f7f7f" d="M400.6 584.9 404.2 592.1 415.6 586.7 411.9 579.5ZM411.9 579.5 415.6 586.7 427.0 581.3 423.3 574.2ZM423.3 574.2 427.0 581.3 438.4 576.0 434.5 568.9ZM434.5 568.9 438.4 576.0 449.7 570.7 445.8 563.7ZM415.6 586.7 419.4 594.0 430.9 588.6 427.0 581.3ZM427.0 581.3 430.9 588.6 442.3 583.2 438.4 576.0ZM438.4 576.0 442.3 583.2 453.6 577.9 449.7 570.7ZM449.7 570.7 453.6 577.9 464.9 572.6 460.9 565.5ZM460.9 565.5 464.9 572.6 476.2 567.4 472.1 560.3ZM472.1 560.3 476.2 567.4 487.3 562.2 483.2 555.2ZM483.2 555.2 487.3 562.2 498.5 557.1 494.2 550.1ZM487.3 562.2 491.6 569.3 502.8 564.2 498.5 557.1ZM498.5 557.1 502.8 564.2 513.9 559.1 509.6 552.1ZM509.6 552.1 513.9 559.1 525.0 554.1 520.6 547.1ZM520.6 547.1 525.0 554.1 536.0 549.2 531.6 542.2ZM525.0 554.1 529.5 561.2 540.6 556.3 536.0 549.2ZM536.0 549.2 540.6 556.3 551.6 551.4 547.0 544.3ZM547.0 544.3 551.6 551.4 562.6 546.6 558.0 539.6ZM540.6 556.3 545.2 563.5 556.3 558.5 551.6 551.4ZM551.6 551.4 556.3 558.5 567.4 553.7 562.6 546.6ZM562.6 546.6 567.4 553.7 578.4 548.9 573.6 541.9ZM567.4 553.7 572.2 561.0 583.3 556.2 578.4 548.9ZM578.4 548.9 583.3 556.2 594.3 551.5 589.3 544.3ZM583.3 556.2 588.2 563.5 599.3 558.7 594.3 551.5ZM594.3 551.5 599.3 558.7 610.3 554.1 605.2 546.9ZM588.2 563.5 593.2 571.0 604.4 566.1 599.3 558.7ZM599.3 558.7 604.4 566.1 615.5 561.4 610.3 554.1ZM604.4 566.1 609.5 573.7 620.7 568.9 615.5 561.4ZM615.5 561.4 620.7 568.9 631.8 564.3 626.5 556.9ZM609.5 573.7 614.7 581.3 625.9 576.5 620.7 568.9ZM620.7 568.9 625.9 576.5 637.1 571.8 631.8 564.3ZM614.7 581.3 620.0 589.1 631.3 584.2 625.9 576.5ZM625.9 576.5 631.3 584.2 642.5 579.5 637.1 571.8Z"/>
<path fill="#808080" stroke="#808080" d="M404.2 592.1 407.9 599.5 419.4 594.0 415.6 586.7ZM407.9 599.5 411.6 607.0 423.2 601.5 419.4 594.0ZM419.4 594.0 423.2 601.5 434.7 596.0 430.9 588.6ZM430.9 588.6 434.7 596.0 446.2 590.6 442.3 583.2ZM442.3 583.2 446.2 590.6 457.6 585.2 453.6 577.9ZM453.6 577.9 457.6 585.2 469.0 579.9 464.9 572.6ZM464.9 572.6 469.0 579.9 480.3 574.6 476.2 567.4ZM476.2 567.4 480.3 574.6 491.6 569.3 487.3 562.2ZM469.0 579.9 473.2 587.3 484.5 581.9 480.3 574.6ZM480.3 574.6 484.5 581.9 495.9 576.7 491.6 569.3ZM491.6 569.3 495.9 576.7 507.1 571.4 502.8 564.2ZM502.8 564.2 507.1 571.4 518.3 566.3 513.9 559.1ZM513.9 559.1 518.3 566.3 529.5 561.2 525.0 554.1ZM507.1 571.4 511.5 578.8 522.8 573.6 518.3 566.3ZM518.3 566.3 522.8 573.6 534.0 568.5 529.5 561.2ZM529.5 561.2 534.0 568.5 545.2 563.5 540.6 556.3ZM534.0 568.5 538.7 575.9 549.9 570.9 545.2 563.5ZM545.2 563.5 549.9 570.9 561.1 565.9 556.3 558.5ZM556.3 558.5 561.1 565.9 572.2 561.0 567.4 553.7ZM549.9 570.9 554.6 578.4 565.9 573.3 561.1 565.9ZM561.1 565.9 565.9 573.3 577.1 568.3 572.2 561.0ZM572.2 561.0 577.1 568.3 588.2 563.5 583.3 556.2ZM565.9 573.3 570.8 580.9 582.0 575.9 577.1 568.3ZM577.1 568.3 582.0 575.9 593.2 571.0 588.2 563.5ZM570.8 580.9 575.7 588.6 587.0 583.5 582.0 575.9ZM582.0 575.9 587.0 583.5 598.3 578.5 593.2 571.0ZM593.2 571.0 598.3 578.5 609.5 573.7 604.4 566.1ZM587.0 583.5 592.1 591.3 603.5 586.2 598.3 578.5ZM598.3 578.5 603.5 586.2 614.7 581.3 609.5 573.7ZM592.1 591.3 597.3 599.1 608.7 594.1 603.5 586.2ZM603.5 586.2 608.7 594.1 620.0 589.1 614.7 581.3Z"/>
<path fill="#818181" stroke="#818181" d="M411.6 607.0 415.4 614.8 427.1 609.2 423.2 601.5ZM423.2 601.5 427.1 609.2 438.7 603.6 434.7 596.0ZM434.7 596.0 438.7 603.6 450.2 598.1 446.2 590.6ZM446.2 590.6 450.2 598.1 461.7 592.7 457.6 585.2ZM457.6 585.2 461.7 592.7 473.2 587.3 469.0 579.9ZM415.4 614.8 419.3 622.6 431.0 617.0 427.1 609.2ZM427.1 609.2 431.0 617.0 442.7 611.4 438.7 603.6ZM438.7 603.6 442.7 611.4 454.3 605.8 450.2 598.1ZM450.2 598.1 454.3 605.8 465.9 600.3 461.7 592.7ZM461.7 592.7 465.9 600.3 477.4 594.8 473.2 587.3ZM473.2 587.3 477.4 594.8 488.8 589.4 484.5 581.9ZM484.5 581.9 488.8 589.4 500.2 584.1 495.9 576.7ZM495.9 576.7 500.2 584.1 511.5 578.8 507.1 571.4ZM477.4 594.8 481.7 602.5 493.2 597.1 488.8 589.4ZM488.8 589.4 493.2 597.1 504.6 591.7 500.2 584.1ZM500.2 584.1 504.6 591.7 516.0 586.4 511.5 578.8ZM511.5 578.8 516.0 586.4 527.4 581.1 522.8 573.6ZM522.8 573.6 527.4 581.1 538.7 575.9 534.0 568.5ZM504.6 591.7 509.1 599.4 520.6 594.0 516.0 586.4ZM516.0 586.4 520.6 594.0 532.0 588.7 527.4 581.1ZM527.4 581.1 532.0 588.7 543.3 583.5 538.7 575.9ZM538.7 575.9 543.3 583.5 554.6 578.4 549.9 570.9ZM532.0 588.7 536.7 596.5 548.1 591.2 543.3 583.5ZM543.3 583.5 548.1 591.2 559.5 586.0 554.6 578.4ZM554.6 578.4 559.5 586.0 570.8 580.9 565.9 573.3ZM536.7 596.5 541.4 604.3 552.9 599.0 548.1 591.2ZM548.1 591.2 552.9 599.0 564.4 593.7 559.5 586.0ZM559.5 586.0 564.4 593.7 575.7 588.6 570.8 580.9ZM552.9 599.0 557.8 606.9 569.3 601.6 564.4 593.7ZM564.4 593.7 569.3 601.6 580.8 596.4 575.7 588.6ZM575.7 588.6 580.8 596.4 592.1 591.3 587.0 583.5ZM557.8 606.9 562.8 615.0 574.3 609.6 569.3 601.6ZM569.3 601.6 574.3 609.6 585.8 604.3 580.8 596.4ZM580.8 596.4 585.8 604.3 597.3 599.1 592.1 591.3Z"/>
<path fill="#828282" stroke="#828282" d="M419.3 622.6 423.2 630.6 435.0 624.9 431.0 617.0ZM431.0 617.0 435.0 624.9 446.8 619.3 442.7 611.4ZM442.7 611.4 446.8 619.3 458.4 613.6 454.3 605.8ZM454.3 605.8 458.4 613.6 470.1 608.1 465.9 600.3ZM465.9 600.3 470.1 608.1 481.7 602.5 477.4 594.8ZM423.2 630.6 427.2 638.8 439.1 633.0 435.0 624.9ZM435.0 624.9 439.1 633.0 450.9 627.3 446.8 619.3ZM446.8 619.3 450.9 627.3 462.6 621.6 458.4 613.6ZM458.4 613.6 462.6 621.6 474.4 616.0 470.1 608.1ZM470.1 608.1 474.4 616.0 486.0 610.4 481.7 602.5ZM481.7 602.5 486.0 610.4 497.6 604.9 493.2 597.1ZM493.2 597.1 497.6 604.9 509.1 599.4 504.6 591.7ZM450.9 627.3 455.1 635.4 466.9 629.7 462.6 621.6ZM462.6 621.6 466.9 629.7 478.7 624.0 474.4 616.0ZM474.4 616.0 478.7 624.0 490.4 618.4 486.0 610.4ZM486.0 610.4 490.4 618.4 502.1 612.8 497.6 604.9ZM497.6 604.9 502.1 612.8 513.7 607.3 509.1 599.4ZM509.1 599.4 513.7 607.3 525.2 601.8 520.6 594.0ZM520.6 594.0 525.2 601.8 536.7 596.5 532.0 588.7ZM490.4 618.4 494.9 626.5 506.6 620.8 502.1 612.8ZM502.1 612.8 506.6 620.8 518.3 615.3 513.7 607.3ZM513.7 607.3 518.3 615.3 529.9 609.8 525.2 601.8ZM525.2 601.8 529.9 609.8 541.4 604.3 536.7 596.5ZM506.6 620.8 511.2 629.0 522.9 623.4 518.3 615.3ZM518.3 615.3 522.9 623.4 534.6 617.8 529.9 609.8ZM529.9 609.8 534.6 617.8 546.2 612.3 541.4 604.3ZM541.4 604.3 546.2 612.3 557.8 606.9 552.9 599.0ZM511.2 629.0 515.9 637.3 527.7 631.6 522.9 623.4ZM522.9 623.4 527.7 631.6 539.4 626.0 534.6 617.8ZM534.6 617.8 539.4 626.0 551.1 620.4 546.2 612.3ZM546.2 612.3 551.1 620.4 562.8 615.0 557.8 606.9Z"/>
<path fill="#838383" stroke="#838383" d="M427.2 638.8 431.2 647.1 443.2 641.2 439.1 633.0ZM439.1 633.0 443.2 641.2 455.1 635.4 450.9 627.3ZM431.2 647.1 435.3 655.5 447.4 649.6 443.2 641.2ZM443.2 641.2 447.4 649.6 459.3 643.7 455.1 635.4ZM455.1 635.4 459.3 643.7 471.2 637.9 466.9 629.7ZM466.9 629.7 471.2 637.9 483.1 632.2 478.7 624.0ZM478.7 624.0 483.1 632.2 494.9 626.5 490.4 618.4ZM435.3 655.5 439.5 664.0 451.6 658.1 447.4 649.6ZM447.4 649.6 451.6 658.1 463.6 652.2 459.3 643.7ZM459.3 643.7 463.6 652.2 475.6 646.3 471.2 637.9ZM471.2 637.9 475.6 646.3 487.5 640.5 483.1 632.2ZM483.1 632.2 487.5 640.5 499.4 634.7 494.9 626.5ZM494.9 626.5 499.4 634.7 511.2 629.0 506.6 620.8ZM439.5 664.0 443.7 672.7 455.9 666.7 451.6 658.1ZM451.6 658.1 455.9 666.7 468.0 660.7 463.6 652.2ZM463.6 652.2 468.0 660.7 480.1 654.8 475.6 646.3ZM475.6 646.3 480.1 654.8 492.1 648.9 487.5 640.5ZM487.5 640.5 492.1 648.9 504.0 643.1 499.4 634.7ZM499.4 634.7 504.0 643.1 515.9 637.3 511.2 629.0Z"/>
</g>
<g stroke="#ffff00" stroke-width="2" stroke-linecap="round">
<line x1="265.6" y1="336.9" x2="754.7" y2="252.6"/>
<line x1="754.7" y1="252.6" x2="1104.6" y2="399.2"/>
<line x1="265.6" y1="336.9" x2="431.7" y2="564.0"/>
<line x1="431.7" y1="564.0" x2="1104.6" y2="399.2"/>
<line x1="265.6" y1="336.9" x2="277.2" y2="413.2"/>
<line x1="431.7" y1="564.0" x2="443.7" y2="672.7"/>
<line x1="1104.6" y1="399.2" x2="1095.7" y2="492.3"/>
<line x1="754.7" y1="252.6" x2="755.3" y2="320.6"/>
<line x1="277.2" y1="413.2" x2="443.7" y2="672.7"/>
<line x1="443.7" y1="672.7" x2="1095.7" y2="492.3"/>
</g>
<line x1="631.3" y1="204" x2="639.1" y2="365" stroke="#8080ff" stroke-width="3"/>
<g fill="#cc6666" fill-opacity="0.75">
<path d="M465.1 417.2 466.1 416.8 466.1 415.4 466.1 414.0 466.1 412.6 466.2 411.2 466.3 409.8 466.3 408.3 466.4 406.9 466.5 405.5 466.6 404.1 466.7 402.7 466.9 401.3 467.0 399.9 467.2 398.4 467.3 397.0 467.5 395.6 467.7 394.2 467.9 392.8 468.1 391.3 468.3 389.9 468.6 388.5 468.8 387.1 469.1 385.7 469.3 384.2 469.6 382.8 469.9 381.4 470.2 380.0 470.5 378.6 470.8 377.1 471.2 375.7 471.5 374.3 471.9 372.9 472.3 371.5 472.6 370.1 473.0 368.7 473.4 367.3 473.8 365.9 474.3 364.5 474.7 363.1 475.1 361.7 475.6 360.3 476.1 358.9 476.6 357.5 477.0 356.1 477.5 354.7 478.1 353.3 478.6 351.9 479.1 350.6 479.7 349.2 480.2 347.8 480.8 346.4 481.4 345.1 481.9 343.7 482.5 342.3 483.1 341.0 483.8 339.6 484.4 338.3 485.0 336.9 485.7 335.6 486.3 334.3 487.0 332.9 487.7 331.6 488.4 330.3 489.1 329.0 489.8 327.6 490.5 326.3 491.3 325.0 492.0 323.7 492.7 322.4 493.5 321.1 494.3 319.8 495.1 318.6 495.8 317.3 496.6 316.0 497.5 314.8 498.3 313.5 499.1 312.2 499.9 311.0 500.8 309.7 501.6 308.5 502.5 307.3 503.4 306.1 504.3 304.8 505.2 303.6 506.1 302.4 507.0 301.2 507.9 300.0 508.8 298.8 509.8 297.7 510.7 296.5 511.7 295.3 512.6 294.2 513.6 293.0 514.6 291.9 515.6 290.7 516.6 289.6 517.6 288.5 518.6 287.4 519.6 286.3 520.6 285.2 521.7 284.1 522.7 283.0 523.8 281.9 524.8 280.8 525.9 279.8 527.0 278.7 528.0 277.7 529.1 276.6 530.2 275.6 531.3 274.6 532.4 273.6 533.6 272.6 534.7 271.6 535.8 270.6 537.0 269.6 538.1 268.7 539.2 267.7 540.4 266.8 541.6 265.8 542.7 264.9 543.9 264.0 545.1 263.0 546.3 262.1 547.5 261.3 548.7 260.4 549.9 259.5 551.1 258.6 552.3 257.8 553.5 256.9 554.8 256.1 556.0 255.3 557.2 254.4 558.5 253.6 559.7 252.8 561.0 252.1 562.3 251.3 563.5 250.5 564.8 249.8 566.1 249.0 567.3 248.3 568.6 247.5 569.9 246.8 571.2 246.1 572.5 245.4 573.8 244.7 575.1 244.1 576.4 243.4 577.7 242.8 579.0 242.1 580.4 241.5 581.7 240.9 583.0 240.3 584.3 239.7 585.7 239.1 587.0 238.5 588.3 237.9 589.7 237.4 591.0 236.8 592.4 236.3 593.7 235.8 595.1 235.3 596.4 234.8 597.8 234.3 599.1 233.8 600.5 233.4 601.9 232.9 603.2 232.5 604.6 232.0 606.0 231.6 607.3 231.2 608.7 230.8 610.1 230.4 611.5 230.0 612.8 229.7 614.2 229.3 615.6 229.0 617.0 228.7 618.3 228.4 619.7 228.0 621.1 227.8 622.5 227.5 623.9 227.2 625.3 226.9 626.6 226.7 628.0 226.5 629.4 226.2 630.8 226.0 632.2 225.8 633.6 225.6 634.9 225.5 636.3 225.3 637.7 225.2 639.1 225.0 640.5 224.9 641.8 224.8 643.2 224.7 644.6 224.6 646.0 224.5 647.3 224.4 648.7 224.4 650.1 224.3 651.5 224.3 652.8 224.3 654.2 224.2 655.6 224.2 656.9 224.3 658.3 224.3 659.6 224.3 661.0 224.4 662.4 224.4 663.7 224.5 665.1 224.6 666.4 224.7 667.7 224.8 669.1 224.9 670.4 225.0 671.8 225.1 673.1 225.3 674.4 225.5 675.8 225.6 677.1 225.8 678.4 226.0 679.7 226.2 681.0 226.4 682.3 226.7 683.6 226.9 684.9 227.2 686.2 227.4 687.5 227.7 688.8 228.0 690.1 228.3 691.4 228.6 692.7 228.9 693.9 229.3 695.2 229.6 696.5 229.9 697.7 230.3 699.0 230.7 700.2 231.1 701.5 231.5 702.7 231.9 704.0 232.3 705.2 232.7 706.4 233.2 707.6 233.6 708.8 234.1 710.0 234.5 711.2 235.0 712.4 235.5 713.6 236.0 714.8 236.5 716.0 237.0 717.2 237.6 718.3 238.1 719.5 238.7 720.7 239.2 721.8 239.8 722.9 240.4 724.1 241.0 725.2 241.6 726.3 242.2 727.4 242.8 728.6 243.5 729.7 244.1 730.8 244.8 731.8 245.4 732.9 246.1 734.0 246.8 735.1 247.5 736.1 248.2 737.2 248.9 738.2 249.6 739.3 250.3 740.3 251.0 741.3 251.8 742.3 252.5 743.3 253.3 744.3 254.1 745.3 254.9 746.3 255.6 747.3 256.4 748.3 257.2 749.2 258.1 750.2 258.9 751.1 259.7 752.1 260.5 753.0 261.4 753.9 262.2 754.8 263.1 755.7 264.0 756.6 264.9 757.5 265.7 758.4 266.6 759.3 267.5 760.1 268.4 761.0 269.4 761.8 270.3 762.7 271.2 763.5 272.2 764.3 273.1 765.1 274.1 766.0 275.0 766.7 276.0 767.5 277.0 768.3 277.9 769.1 278.9 769.8 279.9 770.6 280.9 771.3 281.9 772.1 282.9 772.8 284.0 773.5 285.0 774.2 286.0 774.9 287.1 775.6 288.1 776.3 289.2 776.9 290.2 777.6 291.3 778.2 292.3 778.9 293.4 779.5 294.5 780.1 295.6 780.7 296.7 781.3 297.8 781.9 298.9 782.5 300.0 783.1 301.1 783.6 302.2 784.2 303.3 784.7 304.5 785.3 305.6 785.8 306.7 786.3 307.9 786.8 309.0 787.3 310.2 787.8 311.3 788.3 312.5 788.8 313.6 789.2 314.8 789.7 316.0 790.1 317.1 790.5 318.3 791.0 319.5 791.4 320.7 791.8 321.9 792.2 323.1 792.5 324.3 792.9 325.5 793.3 326.7 793.6 327.9 794.0 329.1 794.3 330.3 794.6 331.5 794.9 332.8 795.2 334.0 795.5 335.2 795.8 336.4 796.1 337.7 796.4 338.9 796.6 340.1 796.9 341.4 797.1 342.6 797.3 343.9 797.5 345.1 797.7 346.4 797.9 347.6 797.6 348.9 779.6 348.9 779.2 348.3 779.0 347.2 778.8 346.1 778.6 345.0 778.4 343.9 778.1 342.8 777.9 341.7 777.7 340.6 777.4 339.5 777.1 338.5 776.9 337.4 776.6 336.3 776.3 335.2 776.0 334.2 775.7 333.1 775.4 332.1 775.0 331.0 774.7 329.9 774.4 328.9 774.0 327.9 773.6 326.8 773.3 325.8 772.9 324.7 772.5 323.7 772.1 322.7 771.7 321.7 771.3 320.6 770.9 319.6 770.5 318.6 770.0 317.6 769.6 316.6 769.2 315.6 768.7 314.6 768.2 313.6 767.8 312.7 767.3 311.7 766.8 310.7 766.3 309.7 765.8 308.8 765.3 307.8 764.7 306.9 764.2 305.9 763.7 305.0 763.1 304.0 762.6 303.1 762.0 302.2 761.4 301.3 760.9 300.3 760.3 299.4 759.7 298.5 759.1 297.6 758.5 296.7 757.9 295.8 757.2 295.0 756.6 294.1 756.0 293.2 755.3 292.3 754.7 291.5 754.0 290.6 753.3 289.8 752.6 288.9 752.0 288.1 751.3 287.3 750.6 286.5 749.9 285.6 749.2 284.8 748.4 284.0 747.7 283.2 747.0 282.4 746.2 281.7 745.5 280.9 744.7 280.1 744.0 279.3 743.2 278.6 742.4 277.8 741.6 277.1 740.8 276.4 740.0 275.6 739.2 274.9 738.4 274.2 737.6 273.5 736.8 272.8 735.9 272.1 735.1 271.4 734.2 270.7 733.4 270.1 732.5 269.4 731.7 268.7 730.8 268.1 729.9 267.5 729.0 266.8 728.1 266.2 727.2 265.6 726.3 265.0 725.4 264.4 724.5 263.8 723.6 263.2 722.7 262.6 721.7 262.0 720.8 261.5 719.8 260.9 718.9 260.4 717.9 259.9 717.0 259.3 716.0 258.8 715.0 258.3 714.0 257.8 713.1 257.3 712.1 256.8 711.1 256.3 710.1 255.9 709.1 255.4 708.0 255.0 707.0 254.5 706.0 254.1 705.0 253.7 703.9 253.2 702.9 252.8 701.8 252.4 700.8 252.0 699.7 251.7 698.7 251.3 697.6 250.9 696.6 250.6 695.5 250.2 694.4 249.9 693.3 249.6 692.2 249.3 691.1 249.0 690.1 248.7 689.0 248.4 687.8 248.1 686.7 247.8 685.6 247.6 684.5 247.3 683.4 247.1 682.3 246.8 681.1 246.6 680.0 246.4 678.9 246.2 677.7 246.0 676.6 245.8 675.5 245.7 674.3 245.5 673.2 245.3 672.0 245.2 670.8 245.1 669.7 244.9 668.5 244.8 667.3 244.7 666.2 244.6 665.0 244.6 663.8 244.5 662.6 244.4 661.5 244.4 660.3 244.3 659.1 244.3 657.9 244.3 656.7 244.2 655.5 244.2 654.3 244.3 653.1 244.3 651.9 244.3 650.7 244.3 649.5 244.4 648.3 244.4 647.1 244.5 645.9 244.6 644.7 244.7 643.5 244.8 642.3 244.9 641.1 245.0 639.9 245.1 638.7 245.3 637.4 245.4 636.2 245.6 635.0 245.8 633.8 245.9 632.6 246.1 631.3 246.3 630.1 246.6 628.9 246.8 627.7 247.0 626.5 247.3 625.3 247.5 624.0 247.8 622.8 248.0 621.6 248.3 620.4 248.6 619.2 248.9 617.9 249.2 616.7 249.6 615.5 249.9 614.3 250.3 613.1 250.6 611.9 251.0 610.6 251.4 609.4 251.7 608.2 252.1 607.0 252.5 605.8 253.0 604.6 253.4 603.4 253.8 602.2 254.3 601.0 254.7 599.8 255.2 598.6 255.7 597.4 256.2 596.2 256.7 595.0 257.2 593.8 257.7 592.6 258.2 591.4 258.8 590.3 259.3 589.1 259.9 587.9 260.4 586.7 261.0 585.6 261.6 584.4 262.2 583.2 262.8 582.1 263.4 580.9 264.0 579.8 264.7 578.6 265.3 577.5 266.0 576.3 266.6 575.2 267.3 574.0 268.0 572.9 268.7 571.8 269.4 570.7 270.1 569.5 270.8 568.4 271.5 567.3 272.2 566.2 273.0 565.1 273.7 564.0 274.5 562.9 275.3 561.8 276.1 560.7 276.8 559.7 277.6 558.6 278.4 557.5 279.3 556.5 280.1 555.4 280.9 554.4 281.8 553.3 282.6 552.3 283.5 551.2 284.3 550.2 285.2 549.2 286.1 548.2 287.0 547.2 287.8 546.1 288.8 545.2 289.7 544.2 290.6 543.2 291.5 542.2 292.4 541.2 293.4 540.2 294.3 539.3 295.3 538.3 296.2 537.4 297.2 536.4 298.2 535.5 299.2 534.6 300.2 533.7 301.2 532.8 302.2 531.9 303.2 531.0 304.2 530.1 305.2 529.2 306.3 528.3 307.3 527.4 308.3 526.6 309.4 525.7 310.4 524.9 311.5 524.0 312.6 523.2 313.7 522.4 314.7 521.6 315.8 520.8 316.9 520.0 318.0 519.2 319.1 518.4 320.2 517.6 321.3 516.9 322.4 516.1 323.6 515.4 324.7 514.6 325.8 513.9 327.0 513.2 328.1 512.5 329.3 511.8 330.4 511.1 331.6 510.4 332.7 509.7 333.9 509.0 335.1 508.4 336.3 507.7 337.4 507.1 338.6 506.4 339.8 505.8 341.0 505.2 342.2 504.6 343.4 504.0 344.6 503.4 345.8 502.8 347.0 502.3 348.2 501.7 349.4 501.1 350.6 500.6 351.9 500.1 353.1 499.6 354.3 499.0 355.5 498.5 356.8 498.1 358.0 497.6 359.2 497.1 360.5 496.6 361.7 496.2 363.0 495.7 364.2 495.3 365.4 494.9 366.7 494.5 367.9 494.1 369.2 493.7 370.5 493.3 371.7 492.9 373.0 492.5 374.2 492.2 375.5 491.8 376.7 491.5 378.0 491.2 379.3 490.9 380.5 490.6 381.8 490.3 383.0 490.0 384.3 489.7 385.6 489.4 386.8 489.2 388.1 488.9 389.4 488.7 390.6 488.5 391.9 488.3 393.2 488.1 394.4 487.9 395.7 487.7 396.9 487.5 398.2 487.4 399.5 487.2 400.7 487.1 402.0 486.9 403.3 486.8 404.5 486.7 405.8 486.6 407.0 486.5 408.3 486.4 408.8Z"/>
</g>
</svg>
</body></html>
